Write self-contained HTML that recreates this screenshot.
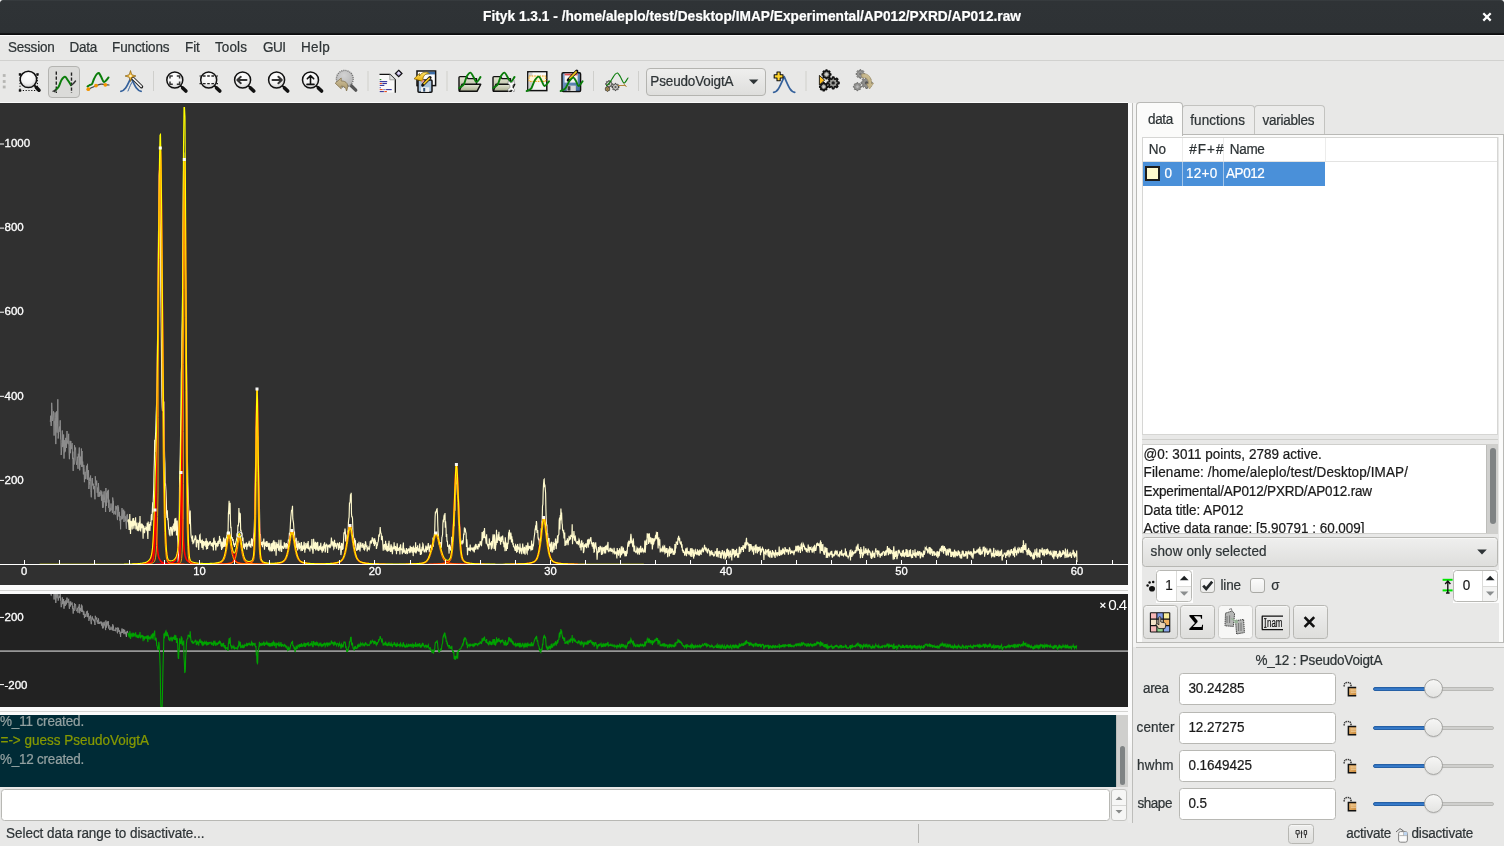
<!DOCTYPE html><html><head><meta charset="utf-8"><title>Fityk</title><style>
*{box-sizing:border-box;margin:0;padding:0}
html,body{width:1504px;height:846px;overflow:hidden;background:#e8e8e7}
body{font-family:"Liberation Sans","DejaVu Sans",sans-serif;font-size:13.5px;color:#2e3436;position:relative}
#root{position:absolute;left:0;top:0;width:1504px;height:846px;will-change:transform}
.abs{position:absolute}
.t{position:absolute;white-space:pre;line-height:16px;height:16px;-webkit-text-stroke:0.22px currentColor;transform:scaleY(1.07);transform-origin:0 12.7px}
#title{left:0;top:0;width:1504px;height:35px;background:linear-gradient(#3d4245 0,#2f3336 1px,#2e3235 30px,#2b2f32 33px,#16181a 33px,#090a0b 35px)}
#title .t{color:#fff;font-weight:bold}
#menubar{left:0;top:35px;width:1504px;height:26px;background:#e8e8e7;border-top:1px solid #fcfcfc;border-bottom:1px solid #d1d1cf}
#toolbar{left:0;top:61px;width:1504px;height:41px;background:#e8e8e7}
.plotline{left:0;top:102px;width:1128px;height:1px;background:#f9f9f9}
.sash{background:#fafafa}
.btn{position:absolute;border:1px solid #b7b7b3;border-radius:3.5px;background:linear-gradient(#efefee,#dededc);box-shadow:inset 0 1px #f7f7f6}
.entry{position:absolute;border:1px solid #b8b8b4;border-radius:3.5px;background:#fff}
.sl{position:absolute;height:4px;border-radius:2px;background:#cfcfcd;border:1px solid #b9b9b6}
.slf{position:absolute;height:4px;border-radius:2px;background:linear-gradient(#2f70bd,#3a80d0);border:1px solid #2560a6}
.knob{position:absolute;width:19px;height:19px;border-radius:50%;background:linear-gradient(#f6f6f5,#e4e4e2);border:1px solid #a3a3a0;box-shadow:0 1px 1px rgba(0,0,0,.08)}
.cb{position:absolute;width:15px;height:15px;border:1px solid #a9a9a5;border-radius:3px;background:linear-gradient(#fbfbfb,#ececeb)}
</style></head><body><div id="root">
<div id="title" class="abs">
<div class="t" style="left:483px;top:8.5px;letter-spacing:0.022px;font-size:13.7px;font-weight:bold;">Fityk 1.3.1 - /home/aleplo/test/Desktop/IMAP/Experimental/AP012/PXRD/AP012.raw</div>
<svg class="abs" style="left:1480px;top:10px" width="14" height="14" viewBox="0 0 14 14"><path d="M3.3 3.2L10.7 10.6M10.7 3.2L3.3 10.6" stroke="#fff" stroke-width="2.2"/></svg><svg class="abs" style="left:0;top:0" width="1504" height="4"><path d="M0 0H2.6Q0.4 0.4 0 2.6Z" fill="#f4f4f4"/><path d="M1504 0H1501.4Q1503.6 0.4 1504 2.6Z" fill="#f4f4f4"/></svg>
</div>
<div id="menubar" class="abs">
<div class="t" style="left:8px;top:3.6px;letter-spacing:-0.219px;">Session</div>
<div class="t" style="left:69.5px;top:3.6px;letter-spacing:-0.258px;">Data</div>
<div class="t" style="left:112px;top:3.6px;letter-spacing:-0.115px;">Functions</div>
<div class="t" style="left:185px;top:3.6px;letter-spacing:-0.067px;">Fit</div>
<div class="t" style="left:215px;top:3.6px;letter-spacing:0.097px;">Tools</div>
<div class="t" style="left:263px;top:3.6px;letter-spacing:-0.505px;">GUI</div>
<div class="t" style="left:301px;top:3.6px;letter-spacing:0.309px;">Help</div>
</div>
<div id="toolbar" class="abs">
<svg class="abs" style="left:0;top:0" width="900" height="41" viewBox="0 61 900 41">
<defs><radialGradient id="mg" cx="0.45" cy="0.3" r="0.75"><stop offset="0" stop-color="#ffffff"/><stop offset="0.6" stop-color="#f2f2f2"/><stop offset="1" stop-color="#c4c4c4"/></radialGradient><radialGradient id="mgg" cx="0.45" cy="0.3" r="0.75"><stop offset="0" stop-color="#d2d2d2"/><stop offset="1" stop-color="#b2b2b2"/></radialGradient><linearGradient id="fold" x1="0" y1="0" x2="0" y2="1"><stop offset="0" stop-color="#e6e8d6"/><stop offset="1" stop-color="#a6aa8c"/></linearGradient><linearGradient id="flop" x1="0" y1="0" x2="1" y2="1"><stop offset="0" stop-color="#7fa3cc"/><stop offset="1" stop-color="#3f6a9c"/></linearGradient><linearGradient id="yel" x1="0" y1="0" x2="0" y2="1"><stop offset="0" stop-color="#ffe56a"/><stop offset="1" stop-color="#e8a800"/></linearGradient><linearGradient id="tan" x1="0" y1="0" x2="0" y2="1"><stop offset="0" stop-color="#cfc09a"/><stop offset="1" stop-color="#a8966a"/></linearGradient></defs>
<rect x="2.8" y="74.1" width="2.8" height="2.8" fill="#b6b6b3"/>
<rect x="2.8" y="80.1" width="2.8" height="2.8" fill="#b6b6b3"/>
<rect x="2.8" y="85.6" width="2.8" height="2.8" fill="#b6b6b3"/>
<path d="M20 74.5H37.5M37.5 74.5V90.5M20 90.5H37.5M20 74.5V90.5" stroke="#111" stroke-width="1" stroke-dasharray="1.2 1.6" fill="none"/>
<rect x="18.8" y="73.2" width="2.4" height="2.4" fill="#111"/><rect x="36.3" y="73.2" width="2.4" height="2.4" fill="#111"/><rect x="18.8" y="89.3" width="2.4" height="2.4" fill="#111"/>
<line x1="34" y1="85" x2="37" y2="88" stroke="#111" stroke-width="1.8"/><line x1="36.4" y1="87.6" x2="39" y2="90.2" stroke="#111" stroke-width="3.6" stroke-linecap="round"/>
<circle cx="28.4" cy="79.4" r="8.2" fill="url(#mg)" stroke="#111" stroke-width="1.5"/>
<rect x="48.5" y="66.5" width="31" height="31" rx="3.5" fill="#dbdbd9" stroke="#b4b4b1" stroke-width="1"/>
<path d="M56.3 71.5V93M71.5 72.5V93" stroke="#222" stroke-width="1.4" stroke-dasharray="3.2 1.8" fill="none"/>
<path d="M55.0 90.5C55.6 89.9 57.4 88.8 58.5 87.0C59.6 85.2 60.4 81.7 61.5 80.0C62.6 78.3 63.9 76.7 65.0 76.8C66.1 76.9 67.0 79.1 68.0 80.5C69.0 81.9 70.5 84.4 71.0 85.2" fill="none" stroke="#0a7d0a" stroke-width="2.0" stroke-linecap="round" stroke-linejoin="round"/>
<path d="M71 85.2L73.5 83.5L75.5 81" stroke="#333" stroke-width="1.5" fill="none" stroke-linecap="round"/>
<path d="M52.5 91.5L55.5 90M54 92L56.5 89.5" stroke="#333" stroke-width="1.2" fill="none"/>
<path d="M88.5 89.0C89.1 88.8 90.8 88.0 92.0 87.5C93.2 87.0 94.5 86.3 96.0 85.8C97.5 85.2 99.5 84.4 101.0 84.2C102.5 84.0 104.0 84.5 105.3 84.6C106.6 84.7 108.4 84.9 109.0 85.0" fill="none" stroke="#444" stroke-width="1.2" stroke-linecap="round" stroke-linejoin="round"/>
<path d="M87.5 86.5C87.9 86.2 89.2 85.2 90.0 84.8C90.8 84.4 91.3 85.0 92.0 84.0C92.7 83.0 93.2 80.6 94.0 79.0C94.8 77.4 95.7 75.5 96.5 74.5C97.3 73.5 98.0 72.7 98.8 73.0C99.5 73.3 100.1 75.0 101.0 76.5C101.9 78.0 102.8 81.8 104.0 82.0C105.2 82.2 107.8 78.2 108.5 77.5" fill="none" stroke="#0a7d0a" stroke-width="2.0" stroke-linecap="round" stroke-linejoin="round"/>
<circle cx="88.3" cy="89.2" r="1.9" fill="#f29400"/>
<circle cx="96" cy="85.6" r="1.9" fill="#f29400"/>
<circle cx="105.3" cy="84.8" r="1.9" fill="#f29400"/>
<path d="M120.8 91.3C124.6 91 126.4 87.6 131 77.6C135.6 87.6 137.4 91 141.2 91.3" fill="none" stroke="#35619b" stroke-width="1.7" stroke-linecap="round" stroke-linejoin="round"/>
<path d="M128.0 91.0C128.5 89.8 130.1 85.8 131.0 84.0C131.9 82.2 133.1 81.1 133.5 80.5" fill="none" stroke="#3a66a0" stroke-width="1.0" stroke-linecap="round" stroke-linejoin="round"/>
<line x1="132.5" y1="78" x2="141.5" y2="86.8" stroke="#222" stroke-width="3.4" stroke-linecap="round"/><line x1="133" y1="78.4" x2="141.2" y2="86.4" stroke="#f4f4f4" stroke-width="1.6" stroke-linecap="round"/>
<path d="M130.5 70.5L131.8 74.7L136 76L131.8 77.3L130.5 81.5L129.2 77.3L125 76L129.2 74.7Z" fill="#f5b93a" stroke="#7a5200" stroke-width="0.6"/><circle cx="130.5" cy="76" r="1.3" fill="#fff6c8"/>
<rect x="153.0" y="71" width="1" height="20" fill="#cfcfcc"/>
<line x1="180.5" y1="85.7" x2="183.5" y2="88.7" stroke="#111" stroke-width="1.8"/><line x1="182.7" y1="87.9" x2="185.9" y2="91.1" stroke="#111" stroke-width="3.6" stroke-linecap="round"/><circle cx="174.8" cy="80" r="8.0" fill="url(#mg)" stroke="#111" stroke-width="1.5"/>
<path d="M170 78.6V76H172.8M176.8 76H179.6V78.6M179.6 81.6V84.2H176.8M172.8 84.2H170V81.6" stroke="#333" stroke-width="1.5" fill="none"/>
<path d="M199.5 76H218M199.5 83.6H218" stroke="#222" stroke-width="1.2" stroke-dasharray="2.6 1.6"/>
<line x1="214.4" y1="85.7" x2="217.4" y2="88.7" stroke="#111" stroke-width="1.8"/><line x1="216.6" y1="87.9" x2="219.8" y2="91.1" stroke="#111" stroke-width="3.6" stroke-linecap="round"/><circle cx="208.7" cy="80" r="8.0" fill="url(#mg)" stroke="#111" stroke-width="1.5"/>
<path d="M203 76H215M203 83.6H215" stroke="#222" stroke-width="1.3" stroke-dasharray="2.6 1.6"/>
<line x1="248.3" y1="85.7" x2="251.3" y2="88.7" stroke="#111" stroke-width="1.8"/><line x1="250.5" y1="87.9" x2="253.7" y2="91.1" stroke="#111" stroke-width="3.6" stroke-linecap="round"/><circle cx="242.6" cy="80" r="8.0" fill="url(#mg)" stroke="#111" stroke-width="1.5"/>
<path d="M237.3 80H246.5M240.8 76.8L237.3 80L240.8 83.2" stroke="#333" stroke-width="2" fill="none" stroke-linecap="round" stroke-linejoin="round"/>
<line x1="282.3" y1="85.7" x2="285.3" y2="88.7" stroke="#111" stroke-width="1.8"/><line x1="284.5" y1="87.9" x2="287.7" y2="91.1" stroke="#111" stroke-width="3.6" stroke-linecap="round"/><circle cx="276.6" cy="80" r="8.0" fill="url(#mg)" stroke="#111" stroke-width="1.5"/>
<path d="M272.5 80H281.8M278.4 76.8L281.8 80L278.4 83.2" stroke="#333" stroke-width="2" fill="none" stroke-linecap="round" stroke-linejoin="round"/>
<line x1="316.2" y1="85.7" x2="319.2" y2="88.7" stroke="#111" stroke-width="1.8"/><line x1="318.4" y1="87.9" x2="321.6" y2="91.1" stroke="#111" stroke-width="3.6" stroke-linecap="round"/><circle cx="310.5" cy="80" r="8.0" fill="url(#mg)" stroke="#111" stroke-width="1.5"/>
<path d="M310.5 75.6V84M307.3 78.8L310.5 75.6L313.7 78.8M307 84.4H314" stroke="#111" stroke-width="1.6" fill="none" stroke-linecap="round" stroke-linejoin="round"/>
<line x1="351" y1="85.5" x2="355.8" y2="90.2" stroke="#555" stroke-width="3.2" stroke-linecap="round"/>
<circle cx="344.8" cy="78.8" r="8.4" fill="url(#mgg)" stroke="#777" stroke-width="1.4" stroke-dasharray="1.2 0.9"/>
<path d="M335.2 83.2L341.2 78V81C346.5 80.8 349.5 84.5 346.5 91C346 87.6 344.2 86 341.2 86V88.8Z" fill="url(#tan)" stroke="#857550" stroke-width="0.8" stroke-linejoin="round"/>
<rect x="367.5" y="71" width="1" height="20" fill="#cfcfcc"/>
<path d="M379.5 74.4H389.8L395.3 79.8V92.6H379.5Z" fill="#f9f9f9"/>
<path d="M379.5 74.4H389.8L395.3 79.8V92.8" fill="none" stroke="#111" stroke-width="1.3"/>
<path d="M389.8 74.4V79.8H395.3" fill="#e2e2e2" stroke="#888" stroke-width="0.7"/>
<rect x="379.7" y="79.05" width="1.6" height="1.1" fill="#2a8a2a"/>
<rect x="379.7" y="81.05" width="7.5" height="1.1" fill="#34349a"/>
<rect x="379.7" y="82.95" width="2.2" height="1.1" fill="#e64a19"/>
<rect x="382.3" y="82.95" width="4.6" height="1.1" fill="#34349a"/>
<rect x="379.7" y="84.85" width="4.6" height="1.1" fill="#34349a"/>
<rect x="379.7" y="87.15" width="1.0" height="1.1" fill="#34349a"/>
<rect x="379.7" y="89.05" width="3.0" height="1.1" fill="#e64a19"/>
<rect x="383.1" y="89.05" width="2.6" height="1.1" fill="#8a8ac0"/>
<rect x="386.1" y="89.05" width="5.6" height="1.1" fill="#34349a"/>
<rect x="379.7" y="91.05" width="4.2" height="1.1" fill="#34349a"/>
<rect x="384.3" y="91.05" width="2.6" height="1.1" fill="#e64a19"/>
<path d="M398.7 70.3L402 73.5L398.7 76.7L395.4 73.5Z" fill="#b9aede" stroke="#111" stroke-width="1.2"/><path d="M398.7 71.6L400.2 73.3L398.7 74L397.3 73.3Z" fill="#efeaff"/>
<rect x="417" y="71" width="18.6" height="14.6" fill="#fdfdfd" stroke="#111" stroke-width="1.5"/><rect x="424" y="71.8" width="11" height="2.6" fill="#3d6da6"/>
<rect x="418" y="80" width="14" height="12.3" rx="1" fill="#a9c3dc" stroke="#111" stroke-width="1.5"/>
<rect x="421" y="87.3" width="8.3" height="4.6" fill="#f2f2f2"/><rect x="423.2" y="88" width="2" height="3.6" fill="#2d4f74"/>
<path d="M414 78.8L419.5 73.4V76C422 71.5 427.5 71 429.5 73.8C426.3 73 423.8 75.2 423 78V81.5Z" fill="url(#yel)" stroke="#7a5a00" stroke-width="0.7" stroke-linejoin="round"/>
<line x1="422.8" y1="85" x2="430" y2="77.6" stroke="#111" stroke-width="3.2" stroke-linecap="round"/><line x1="423.6" y1="84.2" x2="429.8" y2="77.8" stroke="#f0c320" stroke-width="1.7"/>
<path d="M421.6 82.4L424 80.2" stroke="#e88f8f" stroke-width="1.6"/>
<rect x="446.5" y="71" width="1" height="20" fill="#cfcfcc"/>
<path d="M459 90.8V77.6Q459 76.6 460 76.6H466L468 78.6H476.5V84.6" fill="url(#fold)" stroke="#111" stroke-width="1.4" stroke-linejoin="round"/>
<path d="M462 84.3H480.7L477 91.3H459.3Z" fill="url(#fold)" stroke="#111" stroke-width="1.4" stroke-linejoin="round"/>
<path d="M459.2 88.0C459.6 87.8 460.7 87.2 461.5 86.5C462.3 85.8 463.1 85.8 464.0 84.0C464.9 82.2 465.9 77.9 467.0 76.0C468.1 74.1 469.4 72.4 470.5 72.6C471.6 72.8 472.5 75.4 473.5 77.0C474.5 78.6 475.3 82.0 476.5 82.0C477.7 82.0 479.8 77.8 480.5 77.0" fill="none" stroke="#0a7d0a" stroke-width="1.9" stroke-linecap="round" stroke-linejoin="round"/>
<path d="M493 90.8V77.6Q493 76.6 494 76.6H500L502 78.6H510.5V84.6" fill="url(#fold)" stroke="#111" stroke-width="1.4" stroke-linejoin="round"/>
<path d="M496 84.3H514.7L511 91.3H493.3Z" fill="url(#fold)" stroke="#111" stroke-width="1.4" stroke-linejoin="round"/>
<path d="M493.2 88.0C493.6 87.8 494.7 87.2 495.5 86.5C496.3 85.8 497.1 85.8 498.0 84.0C498.9 82.2 499.9 77.9 501.0 76.0C502.1 74.1 503.4 72.4 504.5 72.6C505.6 72.8 506.5 75.4 507.5 77.0C508.5 78.6 509.3 82.0 510.5 82.0C511.7 82.0 513.8 77.8 514.5 77.0" fill="none" stroke="#0a7d0a" stroke-width="1.9" stroke-linecap="round" stroke-linejoin="round"/>
<path d="M508.5 80.2L510.3 82.6L512.2 82.6L514 80.2L514.6 83.4L512.6 85.2V87.6L514.6 89.6L514 92L512.2 90H510.3L508.5 92L507.9 89.6L509.9 87.6V85.2L507.9 83.4Z" fill="#fafafa" stroke="#666" stroke-width="0.5"/>
<rect x="527.8" y="71.8" width="19" height="18.8" fill="#f3f3f3" stroke="#111" stroke-width="1.5"/>
<rect x="528.6" y="72.6" width="4" height="17.3" fill="#cfcfcf"/><rect x="532.6" y="72.6" width="13.4" height="3" fill="#fafafa"/>
<rect x="529" y="76" width="16.8" height="5.4" fill="#fff6d8" stroke="#f0a010" stroke-width="1" stroke-dasharray="1.6 1"/>
<path d="M526.6 91.0C527.0 90.8 528.2 90.5 529.0 90.0C529.8 89.5 530.5 89.7 531.5 88.0C532.5 86.3 533.8 81.9 535.0 80.0C536.2 78.1 537.7 76.5 538.8 76.6C539.9 76.7 540.5 78.9 541.5 80.5C542.5 82.1 543.4 85.9 544.6 86.0C545.9 86.1 548.3 82.1 549.0 81.3" fill="none" stroke="#0a7d0a" stroke-width="1.9" stroke-linecap="round" stroke-linejoin="round"/>
<rect x="562" y="72.8" width="18.6" height="18.7" rx="1.2" fill="url(#flop)" stroke="#111" stroke-width="1.4"/>
<rect x="564.6" y="73.6" width="13" height="9" fill="#f4f4f4"/><rect x="564.6" y="73.6" width="13" height="1.8" fill="#e05050"/>
<rect x="566.8" y="85.6" width="9" height="5.4" fill="#d8d8d8"/><rect x="567.6" y="86.2" width="2.8" height="4.4" fill="#3a3a3a"/>
<line x1="568.3" y1="80" x2="576.8" y2="71.2" stroke="#111" stroke-width="3.2" stroke-linecap="round"/><line x1="569.4" y1="78.8" x2="576.6" y2="71.4" stroke="#f0c320" stroke-width="1.7"/>
<path d="M560.6 91.0C561.0 90.8 562.2 90.5 563.0 90.0C563.8 89.5 564.5 89.5 565.6 88.0C566.7 86.5 568.2 82.7 569.5 81.0C570.8 79.3 572.3 77.6 573.4 77.6C574.5 77.6 575.1 79.6 576.0 81.0C576.9 82.4 577.5 86.0 578.6 86.0C579.7 86.0 581.9 82.1 582.6 81.3" fill="none" stroke="#0a7d0a" stroke-width="1.9" stroke-linecap="round" stroke-linejoin="round"/>
<rect x="593.0" y="71" width="1" height="20" fill="#cfcfcc"/>
<path d="M612.4 83.6L612.4 84.4L611.4 84.7L611.1 85.2L611.7 86.1L611.1 86.7L610.2 86.1L609.7 86.4L609.4 87.4L608.6 87.4L608.3 86.4L607.8 86.1L606.9 86.7L606.3 86.1L606.9 85.2L606.6 84.7L605.6 84.4L605.6 83.6L606.6 83.3L606.9 82.8L606.3 81.9L606.9 81.3L607.8 81.9L608.3 81.6L608.6 80.6L609.4 80.6L609.7 81.6L610.2 81.9L611.1 81.3L611.7 81.9L611.1 82.8L611.4 83.3Z" fill="#c8c8c4" stroke="#333" stroke-width="0.9" stroke-linejoin="round"/><circle cx="609" cy="84" r="1.0" fill="#555"/>
<path d="M619.1 86.6L619.1 87.4L618.0 87.7L617.8 88.3L618.3 89.2L617.7 89.8L616.8 89.3L616.2 89.5L615.9 90.6L615.1 90.6L614.8 89.5L614.2 89.3L613.3 89.8L612.7 89.2L613.2 88.3L613.0 87.7L611.9 87.4L611.9 86.6L613.0 86.3L613.2 85.7L612.7 84.8L613.3 84.2L614.2 84.7L614.8 84.5L615.1 83.4L615.9 83.4L616.2 84.5L616.8 84.7L617.7 84.2L618.3 84.8L617.8 85.7L618.0 86.3Z" fill="#c8c8c4" stroke="#333" stroke-width="0.9" stroke-linejoin="round"/><circle cx="615.5" cy="87" r="1.1" fill="#555"/>
<path d="M609.9 88.7L609.9 89.3L609.2 89.5L609.0 89.8L609.4 90.5L609.0 90.9L608.3 90.5L608.0 90.7L607.8 91.4L607.2 91.4L607.0 90.7L606.7 90.5L606.0 90.9L605.6 90.5L606.0 89.8L605.8 89.5L605.1 89.3L605.1 88.7L605.8 88.5L606.0 88.2L605.6 87.5L606.0 87.1L606.7 87.5L607.0 87.3L607.2 86.6L607.8 86.6L608.0 87.3L608.3 87.5L609.0 87.1L609.4 87.5L609.0 88.2L609.2 88.5Z" fill="#c8a050" stroke="#333" stroke-width="0.8" stroke-linejoin="round"/><circle cx="607.5" cy="89" r="0.7" fill="#555"/>
<path d="M606.5 85.5C606.9 85.2 608.1 84.6 609.0 83.5C609.9 82.4 611.0 80.5 612.0 79.0C613.0 77.5 614.1 75.5 615.0 74.5C615.9 73.5 616.7 72.6 617.6 73.0C618.5 73.4 619.4 75.3 620.5 77.0C621.6 78.7 622.8 82.8 624.0 83.0C625.2 83.2 627.3 78.8 628.0 78.0" fill="none" stroke="#0a7d0a" stroke-width="1.1" stroke-linecap="round" stroke-linejoin="round"/>
<path d="M618 85.5H626M623.5 83.5L626.5 87" stroke="#b08840" stroke-width="1" fill="none"/>
<rect x="638.0" y="71" width="1" height="20" fill="#cfcfcc"/>
<defs><linearGradient id="btn" x1="0" y1="0" x2="0" y2="1"><stop offset="0" stop-color="#efefee"/><stop offset="1" stop-color="#dededc"/></linearGradient></defs>
<rect x="646.5" y="68.5" width="119" height="27" rx="3.5" fill="url(#btn)" stroke="#b4b4b0"/>
<path d="M749 79.4H758.4L753.7 84.2Z" fill="#2e3436"/>
<path d="M773.6 92.3C777.4 92 779.2 88.4 784.2 76.6C789.2 88.4 791 92 794.8 92.3" fill="none" stroke="#35619b" stroke-width="1.7" stroke-linecap="round" stroke-linejoin="round"/>
<path d="M777 72H780.2V74.8H783V78H780.2V80.8H777V78H774.2V74.8H777Z" fill="#ffd42a" stroke="#111" stroke-width="1.1" stroke-linejoin="round"/>
<rect x="805.5" y="71" width="1" height="20" fill="#cfcfcc"/>
<path d="M830.8 73.9L830.8 74.9L829.5 75.2L829.2 75.9L829.9 77.1L829.2 77.8L828.0 77.1L827.3 77.4L827.0 78.7L826.0 78.7L825.7 77.4L825.0 77.1L823.8 77.8L823.1 77.1L823.8 75.9L823.5 75.2L822.2 74.9L822.2 73.9L823.5 73.6L823.8 72.9L823.1 71.7L823.8 71.0L825.0 71.7L825.7 71.4L826.0 70.1L827.0 70.1L827.3 71.4L828.0 71.7L829.2 71.0L829.9 71.7L829.2 72.9L829.5 73.6Z" fill="#9c9c98" stroke="#111" stroke-width="1.5" stroke-linejoin="round"/><circle cx="826.5" cy="74.4" r="1.3" fill="#d0d0cc"/>
<path d="M827.7 86.2L827.7 87.2L826.5 87.5L826.2 88.1L826.8 89.2L826.2 89.8L825.1 89.2L824.5 89.5L824.2 90.7L823.2 90.7L822.9 89.5L822.3 89.2L821.2 89.8L820.6 89.2L821.2 88.1L820.9 87.5L819.7 87.2L819.7 86.2L820.9 85.9L821.2 85.3L820.6 84.2L821.2 83.6L822.3 84.2L822.9 83.9L823.2 82.7L824.2 82.7L824.5 83.9L825.1 84.2L826.2 83.6L826.8 84.2L826.2 85.3L826.5 85.9Z" fill="#9c9c98" stroke="#111" stroke-width="1.5" stroke-linejoin="round"/><circle cx="823.7" cy="86.7" r="1.2" fill="#d0d0cc"/>
<path d="M839.0 82.2L839.0 83.6L837.2 84.0L836.8 84.9L837.8 86.5L836.8 87.5L835.2 86.5L834.3 86.9L833.9 88.7L832.5 88.7L832.1 86.9L831.2 86.5L829.6 87.5L828.6 86.5L829.6 84.9L829.2 84.0L827.4 83.6L827.4 82.2L829.2 81.8L829.6 80.9L828.6 79.3L829.6 78.3L831.2 79.3L832.1 78.9L832.5 77.1L833.9 77.1L834.3 78.9L835.2 79.3L836.8 78.3L837.8 79.3L836.8 80.9L837.2 81.8Z" fill="#9c9c98" stroke="#111" stroke-width="1.6" stroke-linejoin="round"/><circle cx="833.2" cy="82.9" r="1.7" fill="#222"/>
<path d="M819.4 75.4L824.6 80.2L819.4 85Z" fill="#ffc020" stroke="#111" stroke-width="0.9" stroke-linejoin="round"/>
<path d="M864.7 73.5L864.7 74.5L863.4 74.8L863.1 75.5L863.8 76.7L863.1 77.4L861.9 76.7L861.2 77.0L860.9 78.3L859.9 78.3L859.6 77.0L858.9 76.7L857.7 77.4L857.0 76.7L857.7 75.5L857.4 74.8L856.1 74.5L856.1 73.5L857.4 73.2L857.7 72.5L857.0 71.3L857.7 70.6L858.9 71.3L859.6 71.0L859.9 69.7L860.9 69.7L861.2 71.0L861.9 71.3L863.1 70.6L863.8 71.3L863.1 72.5L863.4 73.2Z" fill="#9a9a98" stroke="#6e6e6c" stroke-width="1.0" stroke-linejoin="round"/><circle cx="860.4" cy="74" r="1.3" fill="#777"/>
<path d="M861.4 86.2L861.4 87.2L860.2 87.5L859.9 88.1L860.5 89.2L859.9 89.8L858.8 89.2L858.2 89.5L857.9 90.7L856.9 90.7L856.6 89.5L856.0 89.2L854.9 89.8L854.3 89.2L854.9 88.1L854.6 87.5L853.4 87.2L853.4 86.2L854.6 85.9L854.9 85.3L854.3 84.2L854.9 83.6L856.0 84.2L856.6 83.9L856.9 82.7L857.9 82.7L858.2 83.9L858.8 84.2L859.9 83.6L860.5 84.2L859.9 85.3L860.2 85.9Z" fill="#9a9a98" stroke="#6e6e6c" stroke-width="1.0" stroke-linejoin="round"/><circle cx="857.4" cy="86.7" r="1.2" fill="#bbb"/>
<path d="M872.2 82.2L872.2 83.6L870.5 84.0L870.1 84.9L871.0 86.4L870.1 87.3L868.6 86.4L867.7 86.8L867.3 88.5L865.9 88.5L865.5 86.8L864.6 86.4L863.1 87.3L862.2 86.4L863.1 84.9L862.7 84.0L861.0 83.6L861.0 82.2L862.7 81.8L863.1 80.9L862.2 79.4L863.1 78.5L864.6 79.4L865.5 79.0L865.9 77.3L867.3 77.3L867.7 79.0L868.6 79.4L870.1 78.5L871.0 79.4L870.1 80.9L870.5 81.8Z" fill="#8e8e8c" stroke="#6e6e6c" stroke-width="1.0" stroke-linejoin="round"/><circle cx="866.6" cy="82.9" r="1.7" fill="#555"/>
<path d="M861.5 74.2C867 72 872 77 871.5 83.5L873.6 83.2L869.5 89L866.5 83.8L868.6 83.8C868.6 79.5 866 76.8 862 77.6Z" fill="#c9b98c" stroke="#9a8a60" stroke-width="0.6" opacity="0.95"/>
</svg>
<div class="t" style="left:650.3px;top:12.5px;letter-spacing:-0.144px;">PseudoVoigtA</div>
</div>
<div class="abs plotline"></div>
<svg class="abs" style="left:0;top:103px" width="1128" height="482" viewBox="0 103 1128 482" font-family='"Liberation Sans", "DejaVu Sans", sans-serif'>
<rect x="0" y="103" width="1128" height="482" fill="#303030"/>
<path d="M50.3 421.9L50.7 415.7L51.0 425.4L51.3 426.0L51.7 402.8L52.0 408.5L52.4 420.9L52.7 419.5L53.1 415.3L53.4 411.3L53.7 413.9L54.1 435.6L54.4 421.5L54.8 422.3L55.1 412.4L55.4 417.2L55.8 444.1L56.1 429.6L56.5 411.4L56.8 431.2L57.1 432.6L57.5 423.9L57.8 399.3L58.2 438.5L58.5 435.0L58.9 429.2L59.2 428.1L59.5 426.6L59.9 431.8L60.2 420.3L60.6 439.2L60.9 440.8L61.2 455.0L61.6 450.9L61.9 442.5L62.3 430.5L62.6 447.1L62.9 435.4L63.3 446.3L63.6 434.5L64.0 458.6L64.3 440.2L64.7 452.4L65.0 447.9L65.3 451.4L65.7 438.0L66.0 437.8L66.4 448.0L66.7 439.2L67.0 431.0L67.4 442.5L67.7 441.5L68.1 444.2L68.4 436.0L68.7 433.8L69.1 453.4L69.4 459.2L69.8 446.5L70.1 440.8L70.4 453.2L70.8 441.0L71.1 448.8L71.5 448.8L71.8 444.2L72.2 443.2L72.5 458.8L72.8 451.6L73.2 470.9L73.5 457.8L73.9 463.0L74.2 464.5L74.5 445.3L74.9 448.7L75.2 449.6L75.6 447.6L75.9 460.3L76.2 461.8L76.6 464.8L76.9 463.8L77.3 456.7L77.6 458.6L78.0 468.8L78.3 453.7L78.6 457.3L79.0 453.3L79.3 447.5L79.7 470.3L80.0 456.3L80.3 464.6L80.7 457.0L81.0 463.3L81.4 448.5L81.7 466.8L82.0 451.0L82.4 466.8L82.7 461.5L83.1 467.3L83.4 474.4L83.8 464.9L84.1 468.7L84.4 482.2L84.8 475.2L85.1 471.8L85.5 479.1L85.8 476.3L86.1 473.5L86.5 465.7L86.8 467.1L87.2 479.2L87.5 463.8L87.8 479.8L88.2 473.2L88.5 470.3L88.9 489.0L89.2 485.5L89.6 481.6L89.9 477.6L90.2 481.1L90.6 475.5L90.9 492.5L91.3 497.3L91.6 490.1L91.9 479.9L92.3 478.0L92.6 485.4L93.0 484.9L93.3 483.7L93.6 489.2L94.0 488.4L94.3 486.1L94.7 494.9L95.0 499.3L95.3 476.3L95.7 481.2L96.0 485.3L96.4 485.2L96.7 480.6L97.1 492.8L97.4 492.4L97.7 487.5L98.1 496.8L98.4 483.0L98.8 488.8L99.1 496.9L99.4 491.9L99.8 496.1L100.1 495.7L100.5 494.5L100.8 490.4L101.1 491.2L101.5 500.6L101.8 491.5L102.2 498.5L102.5 507.7L102.9 494.6L103.2 507.7L103.5 500.5L103.9 492.0L104.2 491.3L104.6 500.9L104.9 502.3L105.2 500.8L105.6 512.0L105.9 488.0L106.3 506.0L106.6 492.7L106.9 502.6L107.3 494.8L107.6 490.9L108.0 498.5L108.3 489.8L108.7 507.8L109.0 499.7L109.3 509.6L109.7 512.0L110.0 507.9L110.4 510.9L110.7 510.7L111.0 503.5L111.4 509.7L111.7 510.1L112.1 509.3L112.4 512.9L112.7 497.5L113.1 501.0L113.4 501.0L113.8 514.4L114.1 512.7L114.4 511.6L114.8 511.3L115.1 514.2L115.5 514.5L115.8 505.8L116.2 509.4L116.5 507.1L116.8 506.4L117.2 517.6L117.5 520.1L117.9 505.2L118.2 511.3L118.5 506.8L118.9 516.5L119.2 511.9L119.6 517.1L119.9 520.7L120.2 519.1L120.6 529.3L120.9 515.9L121.3 519.5L121.6 516.4L122.0 508.1L122.3 512.9L122.6 519.2L123.0 510.1L123.3 517.7L123.7 509.7L124.0 522.0L124.3 514.6L124.7 511.4L125.0 519.6L125.4 520.9L125.7 516.3L126.0 524.0L126.4 528.8L126.7 516.2L127.1 514.4L127.4 514.2L127.8 519.7" fill="none" stroke="#8e8e8e" stroke-width="1"/>
<path d="M127.8 519.7L128.1 522.1L128.4 519.4L128.8 525.3L129.1 529.9L129.5 526.5L129.8 514.0L130.1 524.5L130.5 534.0L130.8 527.3L131.2 520.9L131.5 522.2L131.8 522.1L132.2 529.5L132.5 522.9L132.9 518.2L133.2 526.3L133.6 518.0L133.9 528.7L134.2 521.4L134.6 524.8L134.9 520.6L135.3 525.6L135.6 517.2L135.9 529.5L136.3 525.3L136.6 528.8L137.0 522.6L137.3 530.7L137.6 526.2L138.0 527.9L138.3 531.3L138.7 523.0L139.0 530.6L139.3 521.7L139.7 526.4L140.0 516.1L140.4 530.2L140.7 530.7L141.1 527.4L141.4 523.9L141.7 528.3L142.1 524.3L142.4 524.7L142.8 527.4L143.1 538.8L143.4 526.0L143.8 526.5L144.1 528.3L144.5 533.1L144.8 531.2L145.1 528.0L145.5 529.4L145.8 527.7L146.2 528.8L146.5 526.9L146.9 531.3L147.2 522.8L147.5 532.3L147.9 539.0L148.2 521.4L148.6 530.6L148.9 524.5L149.2 528.1L149.6 524.0L149.9 531.0L150.3 522.0L150.6 523.8L150.9 524.3L151.3 515.6L151.6 514.0L152.0 520.3L152.3 511.1L152.7 502.2L153.0 512.6L153.3 499.3L153.7 488.9L154.0 472.2L154.4 459.7L154.7 439.7L155.0 452.1L155.4 437.9L155.7 431.5L156.1 417.1L156.4 408.9L156.7 400.8L157.1 377.0L157.4 351.2L157.8 323.7L158.1 282.9L158.4 250.0L158.8 199.3L159.1 175.5L159.5 170.1L159.8 169.9L160.2 187.2L160.5 241.8L160.8 291.6L161.2 323.8L161.5 352.4L161.9 397.8L162.2 406.6L162.5 410.9L162.9 399.2L163.2 405.9L163.6 410.2L163.9 401.6L164.2 439.4L164.6 457.0L164.9 463.4L165.3 486.1L165.6 485.5L166.0 491.3L166.3 499.8L166.6 512.9L167.0 517.9L167.3 510.2L167.7 520.2L168.0 518.0L168.3 522.7L168.7 529.8L169.0 529.0L169.4 534.8L169.7 531.4L170.0 536.3L170.4 527.1L170.7 529.4L171.1 526.9L171.4 528.2L171.8 534.0L172.1 535.7L172.4 534.5L172.8 525.7L173.1 528.2L173.5 528.7L173.8 523.6L174.1 531.7L174.5 526.6L174.8 518.4L175.2 530.8L175.5 527.9L175.8 517.9L176.2 524.7L176.5 535.5L176.9 529.9L177.2 520.6L177.6 532.2L177.9 546.7L178.2 562.0L178.6 559.6L178.9 536.9L179.3 518.6L179.6 479.1L179.9 468.3L180.3 452.0L180.6 433.8L181.0 412.1L181.3 373.4L181.6 365.9L182.0 331.8L182.3 320.9L182.7 279.3L183.0 232.0L183.3 198.9L183.7 152.5L184.0 170.5L184.4 177.1L184.7 210.3L185.1 235.9L185.4 266.5L185.7 282.0L186.1 323.1L186.4 357.2L186.8 392.7L187.1 430.0L187.4 459.4L187.8 482.8L188.1 489.9L188.5 503.9L188.8 510.3L189.1 515.3L189.5 522.0L189.8 524.2L190.2 510.5L190.5 522.9L190.9 533.5L191.2 536.3L191.5 538.0L191.9 538.7L192.2 541.7L192.6 535.6L192.9 544.2L193.2 541.5L193.6 541.1L193.9 541.8L194.3 540.0L194.6 539.2L194.9 539.3L195.3 535.9L195.6 535.9L196.0 537.7L196.3 546.7L196.7 546.9L197.0 540.2L197.3 540.1L197.7 543.0L198.0 540.1L198.4 542.8L198.7 550.0L199.0 541.7L199.4 540.2L199.7 535.3L200.1 534.7L200.4 543.2L200.7 539.6L201.1 541.9L201.4 540.2L201.8 546.4L202.1 548.0L202.5 540.7L202.8 541.3L203.1 549.8L203.5 541.0L203.8 546.1L204.2 543.7L204.5 541.5L204.8 545.2L205.2 544.3L205.5 541.1L205.9 546.9L206.2 538.2L206.5 549.5L206.9 546.5L207.2 540.9L207.6 548.9L207.9 541.7L208.2 544.0L208.6 545.8L208.9 543.0L209.3 544.6L209.6 541.9L210.0 541.5L210.3 541.5L210.6 543.2L211.0 544.6L211.3 546.1L211.7 543.0L212.0 545.5L212.3 542.2L212.7 546.9L213.0 544.0L213.4 550.5L213.7 538.8L214.0 538.4L214.4 541.9L214.7 544.7L215.1 540.8L215.4 543.5L215.8 550.4L216.1 547.2L216.4 543.6L216.8 543.4L217.1 545.6L217.5 546.1L217.8 541.3L218.1 546.1L218.5 540.6L218.8 541.3L219.2 544.1L219.5 535.9L219.8 541.9L220.2 538.7L220.5 539.5L220.9 546.5L221.2 545.0L221.6 550.0L221.9 541.6L222.2 542.8L222.6 548.4L222.9 545.4L223.3 543.2L223.6 537.5L223.9 546.8L224.3 545.5L224.6 545.7L225.0 538.6L225.3 540.8L225.6 547.0L226.0 540.6L226.3 538.0L226.7 536.4L227.0 534.9L227.3 531.8L227.7 532.8L228.0 535.0L228.4 513.5L228.7 510.3L229.1 500.8L229.4 514.2L229.7 503.0L230.1 503.2L230.4 519.5L230.8 528.3L231.1 526.7L231.4 536.2L231.8 539.3L232.1 537.2L232.5 539.3L232.8 540.9L233.1 539.1L233.5 542.7L233.8 545.3L234.2 543.3L234.5 546.9L234.9 544.7L235.2 544.2L235.5 544.2L235.9 541.7L236.2 540.9L236.6 538.7L236.9 538.1L237.2 535.1L237.6 536.5L237.9 524.7L238.3 526.5L238.6 523.7L238.9 508.1L239.3 518.9L239.6 512.5L240.0 522.7L240.3 513.2L240.7 531.0L241.0 529.9L241.3 533.1L241.7 532.8L242.0 533.3L242.4 539.8L242.7 540.8L243.0 537.4L243.4 547.7L243.7 543.5L244.1 545.9L244.4 549.1L244.7 543.6L245.1 545.9L245.4 546.2L245.8 544.8L246.1 543.4L246.5 542.5L246.8 549.7L247.1 545.0L247.5 543.8L247.8 546.6L248.2 545.4L248.5 543.7L248.8 544.0L249.2 540.8L249.5 545.3L249.9 546.1L250.2 545.2L250.5 544.6L250.9 547.6L251.2 541.3L251.6 538.2L251.9 542.2L252.2 545.2L252.6 545.6L252.9 540.0L253.3 540.4L253.6 535.9L254.0 532.4L254.3 526.9L254.6 516.9L255.0 495.4L255.3 481.8L255.7 459.3L256.0 429.2L256.3 424.0L256.7 403.2L257.0 416.1L257.4 425.3L257.7 440.8L258.0 436.2L258.4 462.3L258.7 482.5L259.1 498.3L259.4 505.5L259.8 528.3L260.1 535.5L260.4 534.1L260.8 541.6L261.1 543.4L261.5 545.0L261.8 542.0L262.1 543.4L262.5 547.1L262.8 541.4L263.2 544.4L263.5 541.8L263.8 538.5L264.2 544.9L264.5 549.7L264.9 542.2L265.2 545.2L265.6 545.6L265.9 545.6L266.2 541.4L266.6 547.0L266.9 541.0L267.3 543.0L267.6 546.6L267.9 544.8L268.3 544.1L268.6 549.0L269.0 550.1L269.3 542.9L269.6 548.4L270.0 551.3L270.3 547.3L270.7 549.3L271.0 543.5L271.4 551.5L271.7 544.4L272.0 543.1L272.4 551.1L272.7 547.6L273.1 541.6L273.4 549.2L273.7 540.2L274.1 542.2L274.4 551.2L274.8 546.4L275.1 541.8L275.4 546.5L275.8 548.6L276.1 555.8L276.5 545.7L276.8 542.2L277.1 548.3L277.5 544.8L277.8 545.1L278.2 544.5L278.5 550.7L278.9 539.8L279.2 548.1L279.5 547.0L279.9 551.4L280.2 546.4L280.6 545.1L280.9 539.7L281.2 547.6L281.6 552.0L281.9 545.9L282.3 547.0L282.6 545.8L282.9 547.6L283.3 547.6L283.6 549.0L284.0 547.0L284.3 542.2L284.7 547.5L285.0 543.2L285.3 547.1L285.7 545.4L286.0 549.0L286.4 543.1L286.7 546.4L287.0 544.1L287.4 547.9L287.7 548.8L288.1 543.1L288.4 539.6L288.7 544.3L289.1 539.5L289.4 532.9L289.8 536.0L290.1 529.7L290.5 522.1L290.8 517.8L291.1 514.5L291.5 510.5L291.8 510.4L292.2 509.2L292.5 505.7L292.8 518.9L293.2 521.1L293.5 522.8L293.9 529.0L294.2 534.1L294.5 531.5L294.9 544.9L295.2 547.4L295.6 539.8L295.9 546.5L296.2 537.7L296.6 547.9L296.9 543.8L297.3 545.9L297.6 550.5L298.0 540.8L298.3 546.2L298.6 543.3L299.0 547.8L299.3 549.3L299.7 542.8L300.0 546.4L300.3 548.1L300.7 546.4L301.0 551.3L301.4 542.1L301.7 547.4L302.0 547.7L302.4 551.0L302.7 545.5L303.1 549.7L303.4 548.6L303.8 545.3L304.1 541.7L304.4 545.2L304.8 552.6L305.1 547.7L305.5 549.8L305.8 543.0L306.1 548.4L306.5 546.6L306.8 547.0L307.2 544.1L307.5 544.8L307.8 548.8L308.2 541.0L308.5 549.3L308.9 547.8L309.2 548.4L309.6 548.5L309.9 551.4L310.2 545.6L310.6 547.6L310.9 546.0L311.3 547.6L311.6 547.2L311.9 538.9L312.3 549.9L312.6 549.0L313.0 553.8L313.3 549.5L313.6 538.8L314.0 542.7L314.3 545.3L314.7 549.0L315.0 545.7L315.4 541.8L315.7 550.5L316.0 545.2L316.4 544.3L316.7 542.6L317.1 549.8L317.4 545.9L317.7 541.9L318.1 551.1L318.4 547.4L318.8 551.0L319.1 548.4L319.4 545.8L319.8 547.4L320.1 549.6L320.5 546.5L320.8 542.8L321.1 548.4L321.5 550.6L321.8 546.8L322.2 552.8L322.5 548.9L322.9 545.7L323.2 551.2L323.5 548.8L323.9 543.7L324.2 548.4L324.6 542.4L324.9 546.2L325.2 552.4L325.6 550.3L325.9 545.3L326.3 544.6L326.6 546.5L326.9 544.3L327.3 546.8L327.6 553.0L328.0 545.4L328.3 546.9L328.7 545.0L329.0 547.3L329.3 544.3L329.7 546.3L330.0 548.1L330.4 546.5L330.7 544.3L331.0 543.2L331.4 537.5L331.7 540.8L332.1 546.4L332.4 543.2L332.7 541.8L333.1 541.9L333.4 543.9L333.8 548.8L334.1 548.3L334.5 539.7L334.8 543.1L335.1 546.8L335.5 543.0L335.8 545.6L336.2 546.1L336.5 548.6L336.8 545.8L337.2 543.4L337.5 543.2L337.9 543.6L338.2 545.4L338.5 550.0L338.9 548.8L339.2 545.1L339.6 542.2L339.9 546.6L340.2 546.0L340.6 546.8L340.9 555.1L341.3 551.6L341.6 542.9L342.0 544.4L342.3 549.9L342.6 543.6L343.0 549.1L343.3 544.5L343.7 537.6L344.0 532.3L344.3 533.3L344.7 532.0L345.0 528.5L345.4 532.6L345.7 541.4L346.0 534.5L346.4 539.8L346.7 543.8L347.1 541.7L347.4 539.9L347.8 530.6L348.1 533.8L348.4 522.8L348.8 518.8L349.1 517.1L349.5 502.4L349.8 503.4L350.1 502.0L350.5 494.3L350.8 496.7L351.2 492.8L351.5 513.7L351.8 516.7L352.2 516.8L352.5 518.2L352.9 530.5L353.2 535.0L353.6 537.0L353.9 543.1L354.2 545.4L354.6 538.3L354.9 545.7L355.3 540.1L355.6 544.1L355.9 548.1L356.3 549.9L356.6 550.3L357.0 550.2L357.3 547.7L357.6 543.3L358.0 549.8L358.3 548.4L358.7 548.7L359.0 541.9L359.4 549.7L359.7 546.4L360.0 551.4L360.4 546.0L360.7 542.3L361.1 544.6L361.4 546.3L361.7 545.3L362.1 548.0L362.4 545.8L362.8 543.1L363.1 544.6L363.4 545.4L363.8 549.2L364.1 549.3L364.5 549.8L364.8 544.0L365.1 549.3L365.5 541.4L365.8 543.3L366.2 546.2L366.5 546.8L366.9 546.3L367.2 551.4L367.5 548.9L367.9 548.4L368.2 547.5L368.6 549.0L368.9 549.1L369.2 549.5L369.6 547.9L369.9 545.4L370.3 541.0L370.6 542.8L370.9 540.3L371.3 543.5L371.6 542.4L372.0 539.7L372.3 537.4L372.7 540.1L373.0 540.9L373.3 541.3L373.7 543.9L374.0 538.2L374.4 546.1L374.7 538.2L375.0 540.9L375.4 540.9L375.7 544.5L376.1 541.9L376.4 548.9L376.7 547.7L377.1 544.5L377.4 545.7L377.8 542.3L378.1 541.7L378.5 539.6L378.8 534.5L379.1 537.0L379.5 534.4L379.8 533.3L380.2 527.0L380.5 531.0L380.8 532.7L381.2 533.6L381.5 540.1L381.9 537.7L382.2 535.7L382.5 539.6L382.9 545.1L383.2 550.7L383.6 546.5L383.9 546.2L384.3 544.2L384.6 545.2L384.9 550.2L385.3 546.3L385.6 540.7L386.0 549.5L386.3 543.4L386.6 550.8L387.0 545.8L387.3 551.6L387.7 548.0L388.0 550.4L388.3 543.2L388.7 551.1L389.0 540.8L389.4 550.2L389.7 548.0L390.0 548.9L390.4 552.0L390.7 546.6L391.1 544.3L391.4 551.6L391.8 545.7L392.1 551.1L392.4 554.3L392.8 549.1L393.1 547.7L393.5 547.2L393.8 549.3L394.1 542.3L394.5 548.6L394.8 546.1L395.2 550.7L395.5 549.1L395.8 547.2L396.2 547.9L396.5 554.1L396.9 547.3L397.2 543.3L397.6 550.7L397.9 549.8L398.2 549.1L398.6 549.9L398.9 548.8L399.3 547.5L399.6 547.3L399.9 554.4L400.3 545.7L400.6 544.4L401.0 550.2L401.3 549.2L401.6 549.0L402.0 549.3L402.3 554.3L402.7 550.3L403.0 545.8L403.4 542.6L403.7 552.8L404.0 548.3L404.4 552.4L404.7 549.8L405.1 552.3L405.4 553.9L405.7 552.6L406.1 552.6L406.4 548.1L406.8 550.0L407.1 553.7L407.4 553.6L407.8 552.8L408.1 548.7L408.5 550.8L408.8 548.4L409.1 550.2L409.5 550.8L409.8 553.2L410.2 545.9L410.5 551.3L410.9 551.8L411.2 547.1L411.5 551.3L411.9 548.5L412.2 546.9L412.6 552.6L412.9 548.2L413.2 556.1L413.6 547.2L413.9 547.8L414.3 548.4L414.6 551.5L414.9 551.9L415.3 550.5L415.6 542.2L416.0 553.5L416.3 551.5L416.7 547.1L417.0 550.6L417.3 550.0L417.7 545.4L418.0 550.7L418.4 548.4L418.7 551.6L419.0 549.0L419.4 551.6L419.7 543.6L420.1 550.4L420.4 555.0L420.7 550.7L421.1 549.4L421.4 554.5L421.8 549.3L422.1 546.9L422.5 550.8L422.8 543.8L423.1 544.3L423.5 547.9L423.8 549.9L424.2 552.2L424.5 550.1L424.8 551.0L425.2 549.3L425.5 549.3L425.9 545.6L426.2 552.4L426.5 551.0L426.9 546.6L427.2 549.2L427.6 549.4L427.9 546.1L428.3 543.0L428.6 547.7L428.9 547.9L429.3 552.1L429.6 547.0L430.0 546.7L430.3 544.9L430.6 548.1L431.0 546.4L431.3 547.4L431.7 547.2L432.0 549.6L432.3 547.9L432.7 545.3L433.0 537.5L433.4 546.8L433.7 539.0L434.0 538.3L434.4 534.0L434.7 531.2L435.1 517.0L435.4 512.4L435.8 512.6L436.1 511.5L436.4 510.5L436.8 509.0L437.1 508.8L437.5 514.8L437.8 525.3L438.1 532.3L438.5 536.3L438.8 542.6L439.2 544.4L439.5 544.5L439.8 543.1L440.2 544.1L440.5 545.2L440.9 542.1L441.2 548.0L441.6 543.6L441.9 537.4L442.2 536.4L442.6 534.3L442.9 523.3L443.3 519.6L443.6 522.3L443.9 516.7L444.3 514.7L444.6 519.9L445.0 513.1L445.3 527.8L445.6 521.3L446.0 527.7L446.3 537.1L446.7 533.9L447.0 541.7L447.4 540.8L447.7 546.8L448.0 545.7L448.4 546.3L448.7 547.0L449.1 553.6L449.4 544.4L449.7 547.7L450.1 547.5L450.4 548.4L450.8 550.7L451.1 545.4L451.4 546.1L451.8 536.7L452.1 543.6L452.5 542.0L452.8 538.8L453.1 533.8L453.5 524.4L453.8 519.4L454.2 526.3L454.5 509.4L454.9 510.7L455.2 492.4L455.5 495.0L455.9 480.8L456.2 484.1L456.6 477.2L456.9 478.6L457.2 473.7L457.6 497.7L457.9 495.8L458.3 493.8L458.6 502.7L458.9 512.7L459.3 520.8L459.6 526.1L460.0 530.3L460.3 536.1L460.7 540.3L461.0 542.9L461.3 542.2L461.7 543.5L462.0 544.5L462.4 541.1L462.7 540.8L463.0 543.5L463.4 539.8L463.7 533.5L464.1 534.9L464.4 527.6L464.7 531.6L465.1 528.9L465.4 529.5L465.8 532.7L466.1 532.9L466.5 546.9L466.8 539.4L467.1 542.9L467.5 555.3L467.8 548.6L468.2 548.5L468.5 549.0L468.8 547.6L469.2 550.9L469.5 548.4L469.9 549.5L470.2 544.6L470.5 550.3L470.9 549.6L471.2 548.7L471.6 548.9L471.9 547.4L472.3 549.0L472.6 550.3L472.9 547.8L473.3 551.4L473.6 549.2L474.0 546.8L474.3 552.5L474.6 548.3L475.0 546.0L475.3 545.4L475.7 549.8L476.0 544.1L476.3 546.8L476.7 546.6L477.0 547.1L477.4 549.1L477.7 545.9L478.0 549.5L478.4 543.7L478.7 546.1L479.1 545.3L479.4 546.1L479.8 544.7L480.1 541.4L480.4 542.8L480.8 542.2L481.1 545.1L481.5 545.5L481.8 541.8L482.1 532.1L482.5 540.5L482.8 536.3L483.2 534.4L483.5 530.8L483.8 538.1L484.2 534.9L484.5 527.9L484.9 537.2L485.2 537.0L485.6 538.2L485.9 541.0L486.2 543.7L486.6 534.3L486.9 542.8L487.3 544.5L487.6 545.2L487.9 544.2L488.3 547.1L488.6 548.8L489.0 548.5L489.3 538.4L489.6 544.1L490.0 542.3L490.3 545.3L490.7 542.9L491.0 544.6L491.4 549.5L491.7 541.0L492.0 548.5L492.4 545.4L492.7 538.9L493.1 534.2L493.4 541.0L493.7 539.7L494.1 549.1L494.4 534.4L494.8 538.9L495.1 543.6L495.4 550.7L495.8 544.3L496.1 545.2L496.5 529.7L496.8 540.0L497.2 542.9L497.5 538.1L497.8 539.7L498.2 534.4L498.5 540.3L498.9 531.8L499.2 541.0L499.5 539.1L499.9 538.1L500.2 539.0L500.6 544.8L500.9 538.8L501.2 536.4L501.6 542.0L501.9 537.0L502.3 539.9L502.6 535.6L502.9 538.4L503.3 543.6L503.6 541.2L504.0 547.3L504.3 545.9L504.7 542.4L505.0 551.2L505.3 537.2L505.7 543.0L506.0 542.9L506.4 550.9L506.7 543.3L507.0 545.2L507.4 549.0L507.7 542.9L508.1 544.2L508.4 537.8L508.7 532.2L509.1 533.5L509.4 529.9L509.8 538.3L510.1 537.8L510.5 539.4L510.8 532.6L511.1 534.6L511.5 542.5L511.8 536.2L512.2 541.4L512.5 539.3L512.8 544.8L513.2 543.0L513.5 547.2L513.9 545.6L514.2 547.1L514.5 548.0L514.9 549.4L515.2 551.0L515.6 544.8L515.9 545.2L516.3 549.8L516.6 552.6L516.9 546.1L517.3 552.1L517.6 543.9L518.0 547.7L518.3 546.5L518.6 549.8L519.0 547.3L519.3 552.2L519.7 553.5L520.0 543.6L520.3 549.4L520.7 551.4L521.0 547.8L521.4 550.9L521.7 554.1L522.0 551.2L522.4 547.8L522.7 543.6L523.1 549.1L523.4 550.9L523.8 553.6L524.1 549.1L524.4 546.9L524.8 551.8L525.1 554.6L525.5 547.6L525.8 549.1L526.1 545.2L526.5 546.8L526.8 552.8L527.2 553.5L527.5 547.2L527.8 542.6L528.2 547.4L528.5 549.4L528.9 548.4L529.2 546.5L529.6 546.6L529.9 548.7L530.2 545.9L530.6 548.6L530.9 549.7L531.3 548.3L531.6 540.4L531.9 550.2L532.3 547.6L532.6 549.8L533.0 543.8L533.3 546.5L533.6 543.8L534.0 538.7L534.3 536.5L534.7 533.7L535.0 529.9L535.4 527.9L535.7 525.4L536.0 530.1L536.4 521.1L536.7 523.2L537.1 533.0L537.4 531.4L537.7 530.1L538.1 538.0L538.4 539.2L538.8 538.7L539.1 539.9L539.4 544.9L539.8 540.5L540.1 539.5L540.5 541.6L540.8 540.0L541.2 529.1L541.5 529.2L541.8 521.8L542.2 520.0L542.5 506.2L542.9 504.1L543.2 491.4L543.5 484.7L543.9 479.7L544.2 479.3L544.6 487.1L544.9 484.5L545.2 488.2L545.6 493.0L545.9 508.8L546.3 521.5L546.6 526.2L546.9 524.4L547.3 538.8L547.6 533.3L548.0 540.2L548.3 541.3L548.7 546.0L549.0 538.0L549.3 545.4L549.7 546.2L550.0 543.9L550.4 551.1L550.7 551.0L551.0 542.9L551.4 542.5L551.7 546.5L552.1 552.8L552.4 547.3L552.7 551.7L553.1 541.9L553.4 547.5L553.8 543.8L554.1 550.0L554.5 543.1L554.8 543.8L555.1 544.3L555.5 539.1L555.8 539.2L556.2 549.1L556.5 544.3L556.8 542.8L557.2 543.6L557.5 535.6L557.9 542.7L558.2 535.3L558.5 535.2L558.9 534.1L559.2 520.4L559.6 517.7L559.9 529.5L560.3 515.0L560.6 520.6L560.9 508.5L561.3 516.0L561.6 512.6L562.0 523.3L562.3 524.7L562.6 530.7L563.0 529.6L563.3 532.0L563.7 531.4L564.0 538.4L564.3 533.4L564.7 532.4L565.0 545.9L565.4 541.8L565.7 541.5L566.1 545.1L566.4 541.4L566.7 540.4L567.1 543.0L567.4 538.3L567.8 543.4L568.1 545.1L568.4 541.4L568.8 540.0L569.1 535.8L569.5 540.4L569.8 538.7L570.1 537.1L570.5 539.5L570.8 534.7L571.2 536.8L571.5 534.8L571.8 536.9L572.2 524.3L572.5 544.3L572.9 536.4L573.2 537.3L573.6 535.7L573.9 531.1L574.2 534.9L574.6 540.8L574.9 537.7L575.3 536.8L575.6 539.0L575.9 541.7L576.3 541.7L576.6 543.0L577.0 542.3L577.3 542.0L577.6 543.9L578.0 541.2L578.3 545.3L578.7 540.8L579.0 539.4L579.4 540.5L579.7 543.8L580.0 547.7L580.4 543.5L580.7 545.3L581.1 550.5L581.4 541.3L581.7 540.3L582.1 544.0L582.4 547.3L582.8 543.7L583.1 543.4L583.4 553.1L583.8 551.7L584.1 549.1L584.5 544.3L584.8 546.3L585.2 546.0L585.5 546.3L585.8 543.2L586.2 544.4L586.5 548.3L586.9 543.9L587.2 545.5L587.5 540.4L587.9 539.6L588.2 547.6L588.6 542.1L588.9 538.7L589.2 544.4L589.6 539.9L589.9 541.3L590.3 539.5L590.6 537.8L590.9 537.7L591.3 543.0L591.6 542.6L592.0 544.4L592.3 546.7L592.7 542.6L593.0 543.6L593.3 548.6L593.7 542.0L594.0 552.1L594.4 551.9L594.7 547.5L595.0 544.7L595.4 545.5L595.7 542.3L596.1 548.8L596.4 548.1L596.7 550.3L597.1 559.7L597.4 554.5L597.8 551.4L598.1 552.5L598.5 547.1L598.8 552.7L599.1 547.8L599.5 551.9L599.8 547.7L600.2 546.0L600.5 547.3L600.8 548.6L601.2 551.7L601.5 555.0L601.9 546.7L602.2 548.1L602.5 554.4L602.9 547.8L603.2 550.9L603.6 547.2L603.9 548.6L604.3 553.4L604.6 547.6L604.9 547.2L605.3 546.7L605.6 553.4L606.0 545.8L606.3 549.7L606.6 548.6L607.0 544.8L607.3 550.3L607.7 544.3L608.0 541.9L608.3 551.7L608.7 550.0L609.0 551.2L609.4 550.5L609.7 549.5L610.1 547.9L610.4 551.3L610.7 547.7L611.1 551.3L611.4 551.4L611.8 551.1L612.1 548.6L612.4 550.5L612.8 551.6L613.1 552.9L613.5 551.9L613.8 551.1L614.1 547.9L614.5 552.3L614.8 554.4L615.2 552.7L615.5 552.7L615.8 551.4L616.2 553.8L616.5 554.1L616.9 558.5L617.2 548.1L617.6 554.5L617.9 550.9L618.2 550.8L618.6 555.6L618.9 552.3L619.3 551.1L619.6 548.3L619.9 550.0L620.3 557.8L620.6 554.5L621.0 553.5L621.3 546.5L621.6 555.2L622.0 546.4L622.3 551.1L622.7 552.5L623.0 553.7L623.4 547.5L623.7 553.0L624.0 550.4L624.4 552.5L624.7 554.5L625.1 556.4L625.4 551.1L625.7 552.5L626.1 554.5L626.4 556.1L626.8 550.4L627.1 553.8L627.4 548.3L627.8 544.2L628.1 542.4L628.5 541.8L628.8 546.7L629.2 540.7L629.5 544.2L629.8 540.8L630.2 543.4L630.5 538.8L630.9 533.9L631.2 536.2L631.5 543.2L631.9 540.5L632.2 542.5L632.6 545.8L632.9 547.0L633.2 538.4L633.6 542.0L633.9 551.6L634.3 550.2L634.6 545.5L634.9 550.3L635.3 552.2L635.6 550.9L636.0 553.1L636.3 552.0L636.7 550.0L637.0 548.1L637.3 548.9L637.7 554.5L638.0 547.7L638.4 551.3L638.7 552.5L639.0 549.1L639.4 554.7L639.7 547.9L640.1 552.3L640.4 548.2L640.7 545.9L641.1 552.7L641.4 549.7L641.8 550.5L642.1 549.2L642.5 547.8L642.8 551.1L643.1 551.9L643.5 550.3L643.8 552.2L644.2 548.9L644.5 552.2L644.8 540.6L645.2 552.7L645.5 548.9L645.9 542.3L646.2 540.9L646.5 541.6L646.9 545.0L647.2 533.2L647.6 537.8L647.9 533.6L648.3 535.4L648.6 543.9L648.9 540.5L649.3 533.3L649.6 536.9L650.0 542.5L650.3 541.1L650.6 537.3L651.0 544.1L651.3 542.4L651.7 542.6L652.0 537.9L652.3 549.5L652.7 545.1L653.0 538.4L653.4 544.1L653.7 543.7L654.1 540.7L654.4 538.3L654.7 540.6L655.1 539.9L655.4 536.1L655.8 535.0L656.1 538.6L656.4 532.8L656.8 533.4L657.1 539.5L657.5 532.0L657.8 541.4L658.1 548.4L658.5 538.2L658.8 538.0L659.2 542.1L659.5 545.8L659.8 539.3L660.2 552.5L660.5 549.2L660.9 550.1L661.2 549.3L661.6 551.0L661.9 549.2L662.2 552.2L662.6 546.9L662.9 546.3L663.3 550.7L663.6 549.0L663.9 552.3L664.3 546.5L664.6 546.1L665.0 553.2L665.3 552.8L665.6 550.3L666.0 548.6L666.3 549.0L666.7 553.0L667.0 548.1L667.4 551.3L667.7 557.3L668.0 551.4L668.4 551.6L668.7 549.9L669.1 550.7L669.4 556.4L669.7 546.3L670.1 553.9L670.4 549.2L670.8 548.7L671.1 551.5L671.4 553.3L671.8 548.5L672.1 552.3L672.5 548.5L672.8 551.9L673.2 554.9L673.5 550.8L673.8 551.9L674.2 551.2L674.5 554.7L674.9 543.9L675.2 553.3L675.5 546.6L675.9 548.4L676.2 542.4L676.6 542.6L676.9 542.1L677.2 542.3L677.6 545.0L677.9 537.7L678.3 540.0L678.6 535.8L679.0 538.6L679.3 541.1L679.6 537.9L680.0 542.7L680.3 543.2L680.7 541.7L681.0 543.5L681.3 542.9L681.7 547.6L682.0 544.3L682.4 550.1L682.7 550.0L683.0 551.6L683.4 552.9L683.7 551.2L684.1 552.0L684.4 553.0L684.7 555.7L685.1 553.1L685.4 551.8L685.8 548.4L686.1 553.4L686.5 556.2L686.8 552.0L687.1 547.5L687.5 552.7L687.8 553.7L688.2 551.1L688.5 552.1L688.8 553.5L689.2 552.5L689.5 553.5L689.9 554.4L690.2 552.2L690.5 548.2L690.9 555.2L691.2 557.0L691.6 552.1L691.9 548.0L692.3 550.7L692.6 549.8L692.9 556.6L693.3 549.5L693.6 558.6L694.0 552.5L694.3 556.5L694.6 553.9L695.0 550.2L695.3 549.8L695.7 554.2L696.0 552.2L696.3 552.6L696.7 553.7L697.0 555.0L697.4 549.3L697.7 553.8L698.1 550.7L698.4 555.5L698.7 553.2L699.1 550.4L699.4 555.7L699.8 549.6L700.1 550.5L700.4 554.0L700.8 550.7L701.1 554.9L701.5 549.6L701.8 551.6L702.1 549.8L702.5 547.6L702.8 548.9L703.2 551.8L703.5 551.5L703.8 549.3L704.2 548.5L704.5 544.7L704.9 548.1L705.2 549.2L705.6 549.9L705.9 547.3L706.2 550.2L706.6 548.2L706.9 552.4L707.3 549.8L707.6 553.4L707.9 549.8L708.3 549.1L708.6 549.8L709.0 550.2L709.3 551.1L709.6 552.5L710.0 556.3L710.3 551.7L710.7 552.3L711.0 553.3L711.4 552.1L711.7 550.4L712.0 554.6L712.4 554.5L712.7 552.2L713.1 554.2L713.4 554.4L713.7 556.5L714.1 555.4L714.4 555.4L714.8 553.7L715.1 551.6L715.4 551.9L715.8 552.7L716.1 552.1L716.5 556.6L716.8 549.9L717.2 548.1L717.5 556.4L717.8 552.1L718.2 557.4L718.5 551.3L718.9 553.0L719.2 550.9L719.5 553.8L719.9 551.2L720.2 558.0L720.6 552.7L720.9 554.9L721.2 558.4L721.6 552.2L721.9 554.1L722.3 550.0L722.6 551.5L723.0 555.4L723.3 552.6L723.6 558.8L724.0 554.0L724.3 550.7L724.7 553.8L725.0 554.6L725.3 558.8L725.7 558.3L726.0 552.3L726.4 557.5L726.7 549.2L727.0 553.1L727.4 548.6L727.7 555.9L728.1 551.4L728.4 556.4L728.7 549.9L729.1 558.4L729.4 554.2L729.8 554.1L730.1 552.1L730.5 550.6L730.8 557.1L731.1 554.5L731.5 554.3L731.8 560.5L732.2 548.8L732.5 555.1L732.8 549.0L733.2 552.4L733.5 554.3L733.9 550.0L734.2 550.4L734.5 557.5L734.9 554.9L735.2 552.3L735.6 550.2L735.9 556.0L736.3 552.5L736.6 548.9L736.9 554.8L737.3 553.3L737.6 557.8L738.0 554.3L738.3 553.1L738.6 557.8L739.0 551.1L739.3 546.7L739.7 548.1L740.0 554.3L740.3 549.3L740.7 549.2L741.0 552.5L741.4 547.0L741.7 548.3L742.1 549.7L742.4 546.8L742.7 550.0L743.1 545.0L743.4 551.9L743.8 545.9L744.1 546.9L744.4 548.0L744.8 544.1L745.1 542.4L745.5 548.8L745.8 546.6L746.1 541.1L746.5 537.8L746.8 544.2L747.2 543.6L747.5 542.8L747.9 542.9L748.2 545.1L748.5 544.8L748.9 543.6L749.2 552.0L749.6 547.5L749.9 544.0L750.2 550.8L750.6 546.1L750.9 544.1L751.3 545.9L751.6 548.4L751.9 547.8L752.3 550.9L752.6 550.3L753.0 548.0L753.3 546.2L753.6 554.8L754.0 549.8L754.3 549.8L754.7 547.8L755.0 546.0L755.4 545.6L755.7 553.2L756.0 544.3L756.4 547.5L756.7 547.6L757.1 550.3L757.4 553.4L757.7 546.5L758.1 550.6L758.4 551.7L758.8 547.1L759.1 550.6L759.4 549.5L759.8 550.4L760.1 546.2L760.5 555.1L760.8 549.3L761.2 549.2L761.5 552.4L761.8 550.2L762.2 549.1L762.5 547.8L762.9 548.8L763.2 549.9L763.5 549.8L763.9 560.1L764.2 552.1L764.6 552.6L764.9 553.9L765.2 552.0L765.6 549.2L765.9 555.3L766.3 551.7L766.6 551.9L767.0 550.6L767.3 551.1L767.6 550.6L768.0 554.8L768.3 556.2L768.7 548.9L769.0 557.0L769.3 556.2L769.7 556.8L770.0 551.6L770.4 551.3L770.7 553.0L771.0 553.4L771.4 557.6L771.7 552.6L772.1 557.8L772.4 550.1L772.7 554.3L773.1 551.4L773.4 553.2L773.8 552.2L774.1 556.5L774.5 553.4L774.8 552.7L775.1 558.0L775.5 549.9L775.8 553.3L776.2 554.0L776.5 553.0L776.8 553.4L777.2 556.5L777.5 552.2L777.9 553.7L778.2 553.8L778.5 554.3L778.9 551.8L779.2 546.5L779.6 556.0L779.9 554.6L780.3 553.8L780.6 552.3L780.9 549.8L781.3 555.3L781.6 551.7L782.0 551.0L782.3 554.4L782.6 548.6L783.0 553.8L783.3 549.4L783.7 550.2L784.0 553.3L784.3 550.5L784.7 554.8L785.0 547.0L785.4 551.5L785.7 549.3L786.1 550.3L786.4 551.5L786.7 551.8L787.1 549.7L787.4 549.8L787.8 551.0L788.1 549.9L788.4 554.8L788.8 550.1L789.1 551.4L789.5 547.2L789.8 550.2L790.1 548.9L790.5 554.1L790.8 550.9L791.2 553.1L791.5 551.7L791.9 550.4L792.2 552.7L792.5 551.9L792.9 552.8L793.2 552.7L793.6 551.9L793.9 555.2L794.2 550.3L794.6 551.8L794.9 550.8L795.3 550.8L795.6 548.9L795.9 545.8L796.3 549.2L796.6 551.5L797.0 549.6L797.3 545.9L797.6 550.4L798.0 545.5L798.3 552.4L798.7 545.6L799.0 550.4L799.4 546.9L799.7 549.3L800.0 547.0L800.4 553.0L800.7 548.0L801.1 544.5L801.4 544.0L801.7 549.2L802.1 547.6L802.4 551.2L802.8 545.5L803.1 543.5L803.4 544.2L803.8 546.8L804.1 545.7L804.5 546.7L804.8 549.6L805.2 547.5L805.5 548.9L805.8 549.8L806.2 548.0L806.5 552.1L806.9 550.9L807.2 551.4L807.5 548.9L807.9 550.5L808.2 544.6L808.6 549.7L808.9 549.4L809.2 552.8L809.6 546.9L809.9 550.1L810.3 547.1L810.6 548.5L811.0 547.7L811.3 550.1L811.6 548.8L812.0 551.6L812.3 552.7L812.7 548.1L813.0 547.5L813.3 547.1L813.7 551.0L814.0 551.8L814.4 549.5L814.7 544.7L815.0 547.1L815.4 551.0L815.7 548.1L816.1 549.1L816.4 547.0L816.7 543.4L817.1 545.6L817.4 542.7L817.8 544.2L818.1 545.9L818.5 543.6L818.8 544.6L819.1 544.0L819.5 546.4L819.8 546.1L820.2 553.5L820.5 540.4L820.8 545.8L821.2 542.1L821.5 551.0L821.9 544.2L822.2 551.1L822.5 544.9L822.9 544.7L823.2 550.7L823.6 552.3L823.9 551.2L824.3 554.9L824.6 551.4L824.9 546.9L825.3 552.4L825.6 551.2L826.0 547.4L826.3 558.0L826.6 548.9L827.0 548.1L827.3 555.4L827.7 557.8L828.0 552.5L828.3 553.8L828.7 555.6L829.0 553.4L829.4 555.5L829.7 554.6L830.1 552.8L830.4 552.8L830.7 553.6L831.1 551.1L831.4 555.0L831.8 550.7L832.1 556.5L832.4 557.6L832.8 554.3L833.1 554.3L833.5 556.4L833.8 554.6L834.1 556.0L834.5 554.6L834.8 551.9L835.2 551.2L835.5 552.7L835.9 552.1L836.2 555.1L836.5 550.8L836.9 552.0L837.2 551.5L837.6 553.7L837.9 554.9L838.2 556.5L838.6 554.4L838.9 555.8L839.3 556.3L839.6 553.3L839.9 551.4L840.3 553.0L840.6 551.4L841.0 555.5L841.3 554.7L841.6 549.7L842.0 555.7L842.3 554.4L842.7 554.1L843.0 554.8L843.4 553.3L843.7 555.5L844.0 554.9L844.4 553.4L844.7 553.4L845.1 554.0L845.4 548.4L845.7 556.2L846.1 551.7L846.4 551.7L846.8 556.6L847.1 555.5L847.4 556.1L847.8 556.7L848.1 557.7L848.5 556.4L848.8 556.6L849.2 555.7L849.5 553.5L849.8 552.5L850.2 550.1L850.5 560.4L850.9 549.4L851.2 555.5L851.5 552.9L851.9 557.0L852.2 552.9L852.6 550.7L852.9 555.5L853.2 552.7L853.6 553.3L853.9 552.7L854.3 552.9L854.6 552.2L855.0 553.4L855.3 550.0L855.6 553.0L856.0 551.2L856.3 546.6L856.7 550.0L857.0 551.1L857.3 545.2L857.7 548.2L858.0 543.7L858.4 550.5L858.7 549.6L859.0 550.7L859.4 549.0L859.7 554.0L860.1 550.1L860.4 558.2L860.8 547.0L861.1 550.7L861.4 554.0L861.8 549.4L862.1 556.0L862.5 557.9L862.8 555.0L863.1 552.2L863.5 555.4L863.8 546.3L864.2 553.6L864.5 551.4L864.8 552.0L865.2 553.7L865.5 549.5L865.9 548.3L866.2 552.8L866.5 552.0L866.9 549.8L867.2 554.1L867.6 554.0L867.9 555.4L868.3 548.5L868.6 551.9L868.9 552.1L869.3 550.2L869.6 552.6L870.0 551.3L870.3 555.4L870.6 552.6L871.0 558.2L871.3 554.2L871.7 558.9L872.0 553.1L872.3 552.4L872.7 550.7L873.0 557.5L873.4 554.6L873.7 555.7L874.1 552.9L874.4 554.5L874.7 557.9L875.1 553.0L875.4 551.2L875.8 548.4L876.1 551.2L876.4 551.2L876.8 552.0L877.1 554.8L877.5 550.2L877.8 556.6L878.1 551.3L878.5 554.2L878.8 550.5L879.2 553.4L879.5 554.5L879.9 555.1L880.2 557.8L880.5 554.4L880.9 554.1L881.2 553.2L881.6 555.4L881.9 555.6L882.2 552.2L882.6 554.8L882.9 552.3L883.3 551.6L883.6 551.8L883.9 551.8L884.3 552.0L884.6 556.0L885.0 551.7L885.3 554.3L885.6 550.5L886.0 555.5L886.3 553.0L886.7 549.8L887.0 552.4L887.4 546.1L887.7 550.4L888.0 549.8L888.4 555.2L888.7 553.8L889.1 547.9L889.4 549.8L889.7 553.6L890.1 552.4L890.4 549.4L890.8 554.1L891.1 551.3L891.4 552.2L891.8 550.0L892.1 552.1L892.5 553.9L892.8 552.8L893.2 559.7L893.5 550.2L893.8 546.3L894.2 553.6L894.5 559.3L894.9 551.9L895.2 554.1L895.5 556.9L895.9 550.9L896.2 556.0L896.6 550.8L896.9 559.2L897.2 557.9L897.6 554.7L897.9 555.7L898.3 550.1L898.6 550.8L899.0 549.8L899.3 552.2L899.6 551.7L900.0 552.6L900.3 553.6L900.7 555.7L901.0 553.2L901.3 554.9L901.7 556.2L902.0 555.7L902.4 550.6L902.7 551.9L903.0 556.5L903.4 549.7L903.7 554.8L904.1 556.3L904.4 556.6L904.8 552.5L905.1 556.2L905.4 553.2L905.8 553.7L906.1 549.1L906.5 553.5L906.8 557.0L907.1 549.5L907.5 552.0L907.8 556.5L908.2 556.5L908.5 555.8L908.8 556.0L909.2 550.0L909.5 556.1L909.9 551.4L910.2 555.7L910.5 549.3L910.9 555.9L911.2 556.7L911.6 554.4L911.9 557.7L912.3 555.4L912.6 558.0L912.9 550.1L913.3 553.8L913.6 554.0L914.0 555.4L914.3 553.1L914.6 556.1L915.0 549.4L915.3 555.9L915.7 556.5L916.0 557.6L916.3 552.4L916.7 554.9L917.0 553.0L917.4 555.4L917.7 550.9L918.1 555.8L918.4 553.6L918.7 554.2L919.1 551.3L919.4 553.8L919.8 551.1L920.1 556.4L920.4 558.4L920.8 552.3L921.1 555.5L921.5 552.3L921.8 553.5L922.1 555.8L922.5 555.1L922.8 556.2L923.2 557.2L923.5 551.1L923.9 551.3L924.2 554.7L924.5 553.9L924.9 552.5L925.2 548.0L925.6 548.6L925.9 548.3L926.2 547.5L926.6 550.0L926.9 550.1L927.3 548.5L927.6 552.1L927.9 553.3L928.3 551.6L928.6 550.3L929.0 548.0L929.3 547.1L929.6 553.8L930.0 547.1L930.3 554.7L930.7 548.0L931.0 553.0L931.4 548.9L931.7 553.5L932.0 549.2L932.4 555.4L932.7 555.4L933.1 551.4L933.4 552.1L933.7 552.6L934.1 551.0L934.4 555.7L934.8 552.6L935.1 552.8L935.4 554.8L935.8 553.6L936.1 555.3L936.5 555.8L936.8 552.1L937.2 551.5L937.5 551.7L937.8 557.3L938.2 556.9L938.5 551.6L938.9 554.4L939.2 556.1L939.5 553.1L939.9 549.3L940.2 549.4L940.6 551.0L940.9 547.7L941.2 549.0L941.6 546.0L941.9 552.2L942.3 545.5L942.6 547.6L943.0 546.9L943.3 550.4L943.6 553.8L944.0 549.5L944.3 546.1L944.7 550.8L945.0 549.6L945.3 547.8L945.7 551.0L946.0 555.2L946.4 551.0L946.7 555.8L947.0 548.9L947.4 551.0L947.7 549.6L948.1 554.4L948.4 554.7L948.8 550.5L949.1 548.3L949.4 549.4L949.8 552.5L950.1 550.4L950.5 549.8L950.8 556.9L951.1 551.6L951.5 556.9L951.8 554.1L952.2 551.9L952.5 555.4L952.8 554.5L953.2 551.7L953.5 557.3L953.9 556.0L954.2 554.7L954.5 549.7L954.9 551.9L955.2 557.5L955.6 551.3L955.9 554.8L956.3 554.7L956.6 551.6L956.9 556.2L957.3 554.3L957.6 556.2L958.0 552.2L958.3 550.4L958.6 554.0L959.0 554.6L959.3 552.1L959.7 552.4L960.0 557.8L960.3 554.6L960.7 555.6L961.0 558.7L961.4 554.0L961.7 558.5L962.1 552.4L962.4 552.9L962.7 550.6L963.1 553.5L963.4 552.8L963.8 556.7L964.1 555.1L964.4 555.6L964.8 554.3L965.1 553.9L965.5 556.3L965.8 551.5L966.1 551.5L966.5 552.2L966.8 554.4L967.2 558.3L967.5 558.2L967.9 551.3L968.2 553.5L968.5 553.6L968.9 551.7L969.2 552.5L969.6 553.9L969.9 553.5L970.2 553.7L970.6 551.3L970.9 554.8L971.3 554.5L971.6 551.5L971.9 557.4L972.3 554.4L972.6 553.4L973.0 558.6L973.3 555.1L973.7 548.2L974.0 554.1L974.3 551.3L974.7 552.1L975.0 552.5L975.4 551.3L975.7 553.3L976.0 552.1L976.4 551.4L976.7 551.8L977.1 549.6L977.4 552.1L977.7 550.9L978.1 552.7L978.4 548.5L978.8 551.9L979.1 554.1L979.4 552.4L979.8 546.7L980.1 555.0L980.5 553.4L980.8 549.4L981.2 553.2L981.5 552.6L981.8 553.8L982.2 553.7L982.5 551.6L982.9 550.5L983.2 546.8L983.5 551.3L983.9 549.9L984.2 546.6L984.6 556.8L984.9 552.8L985.2 553.2L985.6 547.7L985.9 548.6L986.3 552.5L986.6 551.2L987.0 550.3L987.3 553.3L987.6 554.8L988.0 552.6L988.3 550.8L988.7 553.3L989.0 552.9L989.3 549.7L989.7 552.2L990.0 548.3L990.4 550.8L990.7 549.3L991.0 551.9L991.4 555.4L991.7 556.5L992.1 555.3L992.4 553.0L992.8 556.5L993.1 552.5L993.4 552.7L993.8 547.9L994.1 557.3L994.5 555.6L994.8 556.0L995.1 553.3L995.5 554.6L995.8 549.9L996.2 555.0L996.5 555.7L996.8 551.9L997.2 552.2L997.5 555.9L997.9 549.8L998.2 552.6L998.5 552.3L998.9 556.7L999.2 554.2L999.6 556.0L999.9 550.7L1000.3 556.0L1000.6 554.2L1000.9 552.6L1001.3 551.1L1001.6 549.5L1002.0 559.4L1002.3 560.5L1002.6 554.6L1003.0 557.0L1003.3 555.3L1003.7 555.1L1004.0 554.6L1004.3 553.2L1004.7 553.6L1005.0 553.9L1005.4 554.1L1005.7 558.0L1006.1 552.3L1006.4 555.8L1006.7 554.7L1007.1 553.6L1007.4 550.2L1007.8 554.8L1008.1 555.5L1008.4 552.8L1008.8 549.9L1009.1 552.2L1009.5 551.2L1009.8 555.8L1010.1 555.2L1010.5 554.4L1010.8 549.5L1011.2 553.2L1011.5 549.1L1011.9 551.9L1012.2 552.5L1012.5 553.6L1012.9 551.1L1013.2 555.7L1013.6 548.3L1013.9 551.0L1014.2 551.6L1014.6 557.2L1014.9 546.7L1015.3 549.7L1015.6 549.8L1015.9 553.0L1016.3 550.3L1016.6 555.5L1017.0 550.6L1017.3 552.3L1017.7 549.1L1018.0 549.8L1018.3 553.5L1018.7 551.7L1019.0 548.0L1019.4 548.5L1019.7 548.3L1020.0 550.0L1020.4 552.6L1020.7 550.4L1021.1 550.7L1021.4 547.1L1021.7 552.8L1022.1 546.8L1022.4 551.0L1022.8 545.1L1023.1 553.3L1023.4 540.3L1023.8 545.9L1024.1 549.5L1024.5 549.4L1024.8 545.1L1025.2 549.0L1025.5 550.0L1025.8 543.2L1026.2 551.1L1026.5 551.4L1026.9 551.8L1027.2 555.1L1027.5 549.5L1027.9 551.8L1028.2 553.4L1028.6 547.9L1028.9 555.0L1029.2 549.9L1029.6 552.0L1029.9 555.7L1030.3 550.7L1030.6 556.1L1031.0 555.9L1031.3 552.3L1031.6 554.4L1032.0 555.7L1032.3 554.9L1032.7 557.7L1033.0 559.0L1033.3 552.5L1033.7 559.6L1034.0 556.2L1034.4 558.8L1034.7 552.6L1035.0 549.3L1035.4 554.9L1035.7 553.4L1036.1 552.6L1036.4 556.3L1036.8 548.4L1037.1 557.8L1037.4 555.2L1037.8 552.5L1038.1 555.1L1038.5 552.7L1038.8 557.1L1039.1 555.0L1039.5 549.3L1039.8 557.8L1040.2 552.5L1040.5 549.5L1040.8 551.3L1041.2 549.9L1041.5 551.7L1041.9 551.1L1042.2 547.8L1042.6 555.1L1042.9 554.2L1043.2 551.4L1043.6 550.6L1043.9 554.2L1044.3 556.3L1044.6 552.7L1044.9 549.1L1045.3 551.7L1045.6 553.1L1046.0 550.5L1046.3 554.9L1046.6 549.5L1047.0 549.3L1047.3 552.4L1047.7 554.3L1048.0 550.2L1048.3 550.8L1048.7 551.5L1049.0 552.4L1049.4 554.0L1049.7 551.6L1050.1 554.7L1050.4 554.4L1050.7 550.6L1051.1 553.6L1051.4 553.4L1051.8 555.0L1052.1 555.0L1052.4 556.2L1052.8 557.3L1053.1 550.6L1053.5 555.9L1053.8 559.3L1054.1 555.3L1054.5 551.4L1054.8 550.7L1055.2 556.5L1055.5 553.1L1055.9 551.4L1056.2 551.3L1056.5 551.6L1056.9 556.9L1057.2 556.1L1057.6 558.7L1057.9 554.0L1058.2 557.1L1058.6 553.2L1058.9 556.1L1059.3 551.9L1059.6 550.6L1059.9 554.3L1060.3 557.4L1060.6 552.4L1061.0 553.1L1061.3 557.0L1061.7 555.0L1062.0 553.5L1062.3 555.1L1062.7 552.7L1063.0 550.1L1063.4 553.4L1063.7 554.4L1064.0 552.2L1064.4 552.9L1064.7 553.2L1065.1 558.1L1065.4 548.5L1065.7 555.5L1066.1 555.7L1066.4 553.9L1066.8 557.7L1067.1 550.6L1067.4 550.1L1067.8 552.5L1068.1 557.5L1068.5 554.4L1068.8 556.8L1069.2 554.8L1069.5 556.1L1069.8 553.1L1070.2 552.7L1070.5 556.0L1070.9 554.6L1071.2 556.1L1071.5 558.0L1071.9 552.7L1072.2 553.5L1072.6 553.7L1072.9 552.8L1073.2 549.8L1073.6 553.4L1073.9 556.5L1074.3 551.9L1074.6 557.7L1075.0 555.7L1075.3 555.5L1075.6 553.3L1076.0 554.6L1076.3 556.6L1076.7 550.6L1077.0 562.0" fill="none" stroke="#fffacd" stroke-width="1.15"/>
<path d="M136.0 564.3L136.5 564.2L137.0 564.2L137.5 564.2L138.0 564.2L138.5 564.2L139.0 564.2L139.5 564.2L140.0 564.1L140.5 564.1L141.0 564.1L141.5 564.1L142.0 564.1L142.5 564.0L143.0 564.0L143.5 564.0L144.0 564.0L144.5 563.9L145.0 563.9L145.5 563.8L146.0 563.8L146.5 563.7L147.0 563.7L147.5 563.6L148.0 563.6L148.5 563.5L149.0 563.4L149.5 563.3L150.0 563.2L150.5 563.0L151.0 562.8L151.5 562.5L152.0 562.0L152.5 561.2L153.0 559.8L153.5 557.2L154.0 552.8L154.5 545.5L155.0 534.0L155.5 516.7L156.0 492.1L156.5 459.0L157.0 417.3L157.5 368.0L158.0 313.9L158.5 259.5L159.0 210.4L159.5 172.7L160.0 151.8L160.5 150.7L161.0 169.7L161.5 205.9L162.0 254.1L162.5 308.2L163.0 362.6L163.5 412.5L164.0 455.1L164.5 489.1L165.0 514.5L165.5 532.5L166.0 544.6L166.5 552.2L167.0 556.8L167.5 559.6L168.0 561.1L168.5 562.0L169.0 562.5L169.5 562.8L170.0 563.0L170.5 563.2L171.0 563.3L171.5 563.4L172.0 563.5L172.5 563.6L173.0 563.6L173.5 563.7L174.0 563.7L174.5 563.8L175.0 563.8L175.5 563.9L176.0 563.9L176.5 564.0L177.0 564.0L177.5 564.0L178.0 564.0L178.5 564.1L179.0 564.1L179.5 564.1L180.0 564.1L180.5 564.1L181.0 564.2L181.5 564.2L182.0 564.2L182.5 564.2L183.0 564.2L183.5 564.2L184.0 564.2L184.5 564.3" fill="none" stroke="#ff0000" stroke-width="1.6"/>
<path d="M133.5 564.3L134.0 564.2L134.5 564.2L135.0 564.2L135.5 564.2L136.0 564.2L136.5 564.2L137.0 564.2L137.5 564.1L138.0 564.1L138.5 564.1L139.0 564.1L139.5 564.0L140.0 564.0L140.5 564.0L141.0 563.9L141.5 563.9L142.0 563.8L142.5 563.8L143.0 563.7L143.5 563.7L144.0 563.6L144.5 563.5L145.0 563.4L145.5 563.3L146.0 563.2L146.5 563.0L147.0 562.8L147.5 562.6L148.0 562.3L148.5 562.0L149.0 561.6L149.5 561.1L150.0 560.5L150.5 559.6L151.0 558.5L151.5 557.0L152.0 554.7L152.5 551.5L153.0 546.7L153.5 539.5L154.0 529.5L154.5 518.0L155.0 510.9L155.5 514.3L156.0 525.0L156.5 535.9L157.0 544.1L157.5 549.8L158.0 553.6L158.5 556.2L159.0 558.0L159.5 559.2L160.0 560.2L160.5 560.9L161.0 561.4L161.5 561.9L162.0 562.2L162.5 562.5L163.0 562.7L163.5 562.9L164.0 563.1L164.5 563.2L165.0 563.4L165.5 563.5L166.0 563.6L166.5 563.6L167.0 563.7L167.5 563.8L168.0 563.8L168.5 563.9L169.0 563.9L169.5 564.0L170.0 564.0L170.5 564.0L171.0 564.1L171.5 564.1L172.0 564.1L172.5 564.1L173.0 564.1L173.5 564.2L174.0 564.2L174.5 564.2L175.0 564.2L175.5 564.2L176.0 564.2L176.5 564.3" fill="none" stroke="#ff0000" stroke-width="1.6"/>
<path d="M169.0 564.3L169.5 564.2L170.0 564.2L170.5 564.2L171.0 564.2L171.5 564.2L172.0 564.1L172.5 564.1L173.0 564.1L173.5 564.0L174.0 564.0L174.5 563.9L175.0 563.9L175.5 563.8L176.0 563.7L176.5 563.6L177.0 563.5L177.5 563.3L178.0 563.1L178.5 562.5L179.0 561.4L179.5 558.7L180.0 552.8L180.5 541.0L181.0 519.4L181.5 483.8L182.0 431.6L182.5 364.4L183.0 289.6L183.5 220.7L184.0 173.7L184.5 161.5L185.0 187.7L185.5 244.6L186.0 317.5L186.5 390.8L187.0 453.0L187.5 498.9L188.0 528.9L188.5 546.4L189.0 555.5L189.5 559.9L190.0 561.9L190.5 562.8L191.0 563.2L191.5 563.4L192.0 563.5L192.5 563.7L193.0 563.8L193.5 563.8L194.0 563.9L194.5 563.9L195.0 564.0L195.5 564.0L196.0 564.1L196.5 564.1L197.0 564.1L197.5 564.2L198.0 564.2L198.5 564.2L199.0 564.2L199.5 564.2" fill="none" stroke="#ff0000" stroke-width="1.6"/>
<path d="M155.5 564.3L156.0 564.2L156.5 564.2L157.0 564.2L157.5 564.2L158.0 564.2L158.5 564.2L159.0 564.2L159.5 564.2L160.0 564.1L160.5 564.1L161.0 564.1L161.5 564.1L162.0 564.1L162.5 564.0L163.0 564.0L163.5 564.0L164.0 563.9L164.5 563.9L165.0 563.9L165.5 563.8L166.0 563.8L166.5 563.7L167.0 563.7L167.5 563.6L168.0 563.6L168.5 563.5L169.0 563.4L169.5 563.3L170.0 563.2L170.5 563.1L171.0 562.9L171.5 562.8L172.0 562.6L172.5 562.4L173.0 562.1L173.5 561.8L174.0 561.4L174.5 560.9L175.0 560.4L175.5 559.6L176.0 558.7L176.5 557.5L177.0 555.8L177.5 553.4L178.0 549.7L178.5 543.9L179.0 534.9L179.5 521.7L180.0 503.9L180.5 484.8L181.0 473.9L181.5 480.2L182.0 498.2L182.5 516.9L183.0 531.6L183.5 541.7L184.0 548.3L184.5 552.5L185.0 555.2L185.5 557.1L186.0 558.4L186.5 559.4L187.0 560.2L187.5 560.8L188.0 561.3L188.5 561.7L189.0 562.0L189.5 562.3L190.0 562.5L190.5 562.7L191.0 562.9L191.5 563.0L192.0 563.2L192.5 563.3L193.0 563.4L193.5 563.5L194.0 563.5L194.5 563.6L195.0 563.7L195.5 563.7L196.0 563.8L196.5 563.8L197.0 563.9L197.5 563.9L198.0 563.9L198.5 564.0L199.0 564.0L199.5 564.0L200.0 564.1L200.5 564.1L201.0 564.1L201.5 564.1L202.0 564.1L202.5 564.1L203.0 564.2L203.5 564.2L204.0 564.2L204.5 564.2L205.0 564.2L205.5 564.2L206.0 564.2L206.5 564.3" fill="none" stroke="#ff0000" stroke-width="1.6"/>
<path d="M203.5 564.3L204.0 564.2L204.5 564.2L205.0 564.2L205.5 564.2L206.0 564.2L206.5 564.2L207.0 564.2L207.5 564.2L208.0 564.1L208.5 564.1L209.0 564.1L209.5 564.1L210.0 564.1L210.5 564.0L211.0 564.0L211.5 564.0L212.0 563.9L212.5 563.9L213.0 563.9L213.5 563.8L214.0 563.8L214.5 563.8L215.0 563.7L215.5 563.6L216.0 563.6L216.5 563.5L217.0 563.4L217.5 563.3L218.0 563.2L218.5 563.1L219.0 563.0L219.5 562.8L220.0 562.6L220.5 562.4L221.0 562.2L221.5 561.8L222.0 561.4L222.5 560.8L223.0 560.1L223.5 559.1L224.0 557.9L224.5 556.3L225.0 554.3L225.5 551.9L226.0 549.2L226.5 546.0L227.0 542.7L227.5 539.4L228.0 536.5L228.5 534.5L229.0 533.8L229.5 534.6L230.0 536.7L230.5 539.6L231.0 542.9L231.5 546.2L232.0 549.3L232.5 552.1L233.0 554.5L233.5 556.4L234.0 558.0L234.5 559.2L235.0 560.1L235.5 560.9L236.0 561.4L236.5 561.8L237.0 562.2L237.5 562.4L238.0 562.7L238.5 562.8L239.0 563.0L239.5 563.1L240.0 563.2L240.5 563.3L241.0 563.4L241.5 563.5L242.0 563.6L242.5 563.6L243.0 563.7L243.5 563.8L244.0 563.8L244.5 563.8L245.0 563.9L245.5 563.9L246.0 564.0L246.5 564.0L247.0 564.0L247.5 564.0L248.0 564.1L248.5 564.1L249.0 564.1L249.5 564.1L250.0 564.1L250.5 564.2L251.0 564.2L251.5 564.2L252.0 564.2L252.5 564.2L253.0 564.2L253.5 564.2L254.0 564.2L254.5 564.3" fill="none" stroke="#ff0000" stroke-width="1.6"/>
<path d="M217.5 564.2L218.0 564.2L218.5 564.2L219.0 564.2L219.5 564.2L220.0 564.2L220.5 564.2L221.0 564.1L221.5 564.1L222.0 564.1L222.5 564.1L223.0 564.1L223.5 564.0L224.0 564.0L224.5 564.0L225.0 563.9L225.5 563.9L226.0 563.8L226.5 563.8L227.0 563.7L227.5 563.7L228.0 563.6L228.5 563.5L229.0 563.4L229.5 563.3L230.0 563.2L230.5 563.1L231.0 562.9L231.5 562.7L232.0 562.4L232.5 562.0L233.0 561.5L233.5 560.8L234.0 559.8L234.5 558.6L235.0 557.0L235.5 554.9L236.0 552.5L236.5 549.6L237.0 546.5L237.5 543.2L238.0 540.0L238.5 537.4L239.0 535.8L239.5 535.6L240.0 536.7L240.5 539.0L241.0 542.0L241.5 545.3L242.0 548.6L242.5 551.5L243.0 554.1L243.5 556.3L244.0 558.1L244.5 559.4L245.0 560.5L245.5 561.2L246.0 561.8L246.5 562.3L247.0 562.6L247.5 562.8L248.0 563.0L248.5 563.2L249.0 563.3L249.5 563.4L250.0 563.5L250.5 563.6L251.0 563.7L251.5 563.7L252.0 563.8L252.5 563.8L253.0 563.9L253.5 563.9L254.0 564.0L254.5 564.0L255.0 564.0L255.5 564.0L256.0 564.1L256.5 564.1L257.0 564.1L257.5 564.1L258.0 564.2L258.5 564.2L259.0 564.2L259.5 564.2L260.0 564.2L260.5 564.2L261.0 564.2L261.5 564.3" fill="none" stroke="#ff0000" stroke-width="1.6"/>
<path d="M239.5 564.2L240.0 564.2L240.5 564.2L241.0 564.2L241.5 564.2L242.0 564.2L242.5 564.1L243.0 564.1L243.5 564.1L244.0 564.0L244.5 564.0L245.0 564.0L245.5 563.9L246.0 563.9L246.5 563.8L247.0 563.7L247.5 563.7L248.0 563.6L248.5 563.5L249.0 563.3L249.5 563.2L250.0 563.0L250.5 562.8L251.0 562.5L251.5 562.1L252.0 561.7L252.5 560.9L253.0 559.5L253.5 556.6L254.0 550.3L254.5 537.6L255.0 515.4L255.5 482.5L256.0 443.0L256.5 407.1L257.0 389.8L257.5 400.4L258.0 432.9L258.5 472.7L259.0 507.9L259.5 532.9L260.0 547.8L260.5 555.4L261.0 559.0L261.5 560.6L262.0 561.5L262.5 562.0L263.0 562.4L263.5 562.7L264.0 563.0L264.5 563.1L265.0 563.3L265.5 563.4L266.0 563.6L266.5 563.6L267.0 563.7L267.5 563.8L268.0 563.9L268.5 563.9L269.0 564.0L269.5 564.0L270.0 564.0L270.5 564.1L271.0 564.1L271.5 564.1L272.0 564.2L272.5 564.2L273.0 564.2L273.5 564.2L274.0 564.2L274.5 564.2L275.0 564.3" fill="none" stroke="#ff0000" stroke-width="1.6"/>
<path d="M260.5 564.3L261.0 564.2L261.5 564.2L262.0 564.2L262.5 564.2L263.0 564.2L263.5 564.2L264.0 564.2L264.5 564.2L265.0 564.2L265.5 564.2L266.0 564.1L266.5 564.1L267.0 564.1L267.5 564.1L268.0 564.1L268.5 564.1L269.0 564.0L269.5 564.0L270.0 564.0L270.5 564.0L271.0 564.0L271.5 563.9L272.0 563.9L272.5 563.9L273.0 563.8L273.5 563.8L274.0 563.8L274.5 563.7L275.0 563.7L275.5 563.6L276.0 563.6L276.5 563.5L277.0 563.5L277.5 563.4L278.0 563.3L278.5 563.2L279.0 563.1L279.5 563.0L280.0 562.9L280.5 562.8L281.0 562.6L281.5 562.4L282.0 562.2L282.5 562.0L283.0 561.7L283.5 561.3L284.0 560.9L284.5 560.3L285.0 559.6L285.5 558.7L286.0 557.5L286.5 556.2L287.0 554.5L287.5 552.5L288.0 550.2L288.5 547.6L289.0 544.7L289.5 541.6L290.0 538.4L290.5 535.5L291.0 533.1L291.5 531.4L292.0 530.9L292.5 531.5L293.0 533.2L293.5 535.6L294.0 538.6L294.5 541.7L295.0 544.8L295.5 547.7L296.0 550.3L296.5 552.6L297.0 554.6L297.5 556.2L298.0 557.6L298.5 558.7L299.0 559.6L299.5 560.3L300.0 560.9L300.5 561.3L301.0 561.7L301.5 562.0L302.0 562.2L302.5 562.4L303.0 562.6L303.5 562.8L304.0 562.9L304.5 563.0L305.0 563.1L305.5 563.2L306.0 563.3L306.5 563.4L307.0 563.5L307.5 563.5L308.0 563.6L308.5 563.6L309.0 563.7L309.5 563.7L310.0 563.8L310.5 563.8L311.0 563.8L311.5 563.9L312.0 563.9L312.5 563.9L313.0 564.0L313.5 564.0L314.0 564.0L314.5 564.0L315.0 564.0L315.5 564.1L316.0 564.1L316.5 564.1L317.0 564.1L317.5 564.1L318.0 564.1L318.5 564.2L319.0 564.2L319.5 564.2L320.0 564.2L320.5 564.2L321.0 564.2L321.5 564.2L322.0 564.2L322.5 564.2L323.0 564.2L323.5 564.3" fill="none" stroke="#ff0000" stroke-width="1.6"/>
<path d="M314.5 564.3L315.0 564.2L315.5 564.2L316.0 564.2L316.5 564.2L317.0 564.2L317.5 564.2L318.0 564.2L318.5 564.2L319.0 564.2L319.5 564.2L320.0 564.2L320.5 564.1L321.0 564.1L321.5 564.1L322.0 564.1L322.5 564.1L323.0 564.1L323.5 564.1L324.0 564.0L324.5 564.0L325.0 564.0L325.5 564.0L326.0 564.0L326.5 563.9L327.0 563.9L327.5 563.9L328.0 563.9L328.5 563.8L329.0 563.8L329.5 563.8L330.0 563.7L330.5 563.7L331.0 563.7L331.5 563.6L332.0 563.6L332.5 563.5L333.0 563.5L333.5 563.4L334.0 563.3L334.5 563.3L335.0 563.2L335.5 563.1L336.0 563.0L336.5 562.9L337.0 562.8L337.5 562.7L338.0 562.5L338.5 562.3L339.0 562.2L339.5 561.9L340.0 561.7L340.5 561.4L341.0 561.0L341.5 560.5L342.0 559.9L342.5 559.2L343.0 558.4L343.5 557.3L344.0 555.9L344.5 554.3L345.0 552.3L345.5 550.1L346.0 547.4L346.5 544.5L347.0 541.3L347.5 537.9L348.0 534.5L348.5 531.3L349.0 528.5L349.5 526.6L350.0 525.8L350.5 526.3L351.0 527.8L351.5 530.3L352.0 533.4L352.5 536.8L353.0 540.2L353.5 543.5L354.0 546.6L354.5 549.3L355.0 551.7L355.5 553.7L356.0 555.4L356.5 556.9L357.0 558.0L357.5 559.0L358.0 559.7L358.5 560.4L359.0 560.8L359.5 561.3L360.0 561.6L360.5 561.9L361.0 562.1L361.5 562.3L362.0 562.5L362.5 562.6L363.0 562.8L363.5 562.9L364.0 563.0L364.5 563.1L365.0 563.2L365.5 563.2L366.0 563.3L366.5 563.4L367.0 563.4L367.5 563.5L368.0 563.6L368.5 563.6L369.0 563.7L369.5 563.7L370.0 563.7L370.5 563.8L371.0 563.8L371.5 563.8L372.0 563.9L372.5 563.9L373.0 563.9L373.5 563.9L374.0 564.0L374.5 564.0L375.0 564.0L375.5 564.0L376.0 564.0L376.5 564.1L377.0 564.1L377.5 564.1L378.0 564.1L378.5 564.1L379.0 564.1L379.5 564.1L380.0 564.2L380.5 564.2L381.0 564.2L381.5 564.2L382.0 564.2L382.5 564.2L383.0 564.2L383.5 564.2L384.0 564.2L384.5 564.2L385.0 564.2L385.5 564.3" fill="none" stroke="#ff0000" stroke-width="1.6"/>
<path d="M405.5 564.2L406.0 564.2L406.5 564.2L407.0 564.2L407.5 564.2L408.0 564.2L408.5 564.2L409.0 564.2L409.5 564.2L410.0 564.2L410.5 564.1L411.0 564.1L411.5 564.1L412.0 564.1L412.5 564.1L413.0 564.1L413.5 564.0L414.0 564.0L414.5 564.0L415.0 564.0L415.5 564.0L416.0 563.9L416.5 563.9L417.0 563.9L417.5 563.8L418.0 563.8L418.5 563.8L419.0 563.7L419.5 563.7L420.0 563.6L420.5 563.6L421.0 563.5L421.5 563.4L422.0 563.4L422.5 563.3L423.0 563.2L423.5 563.0L424.0 562.8L424.5 562.6L425.0 562.4L425.5 562.1L426.0 561.7L426.5 561.2L427.0 560.6L427.5 559.9L428.0 559.1L428.5 558.1L429.0 556.9L429.5 555.6L430.0 554.0L430.5 552.3L431.0 550.5L431.5 548.5L432.0 546.4L432.5 544.2L433.0 542.0L433.5 539.9L434.0 538.0L434.5 536.3L435.0 535.0L435.5 534.2L436.0 533.8L436.5 534.0L437.0 534.7L437.5 535.9L438.0 537.5L438.5 539.3L439.0 541.4L439.5 543.6L440.0 545.7L440.5 547.9L441.0 549.9L441.5 551.8L442.0 553.6L442.5 555.1L443.0 556.5L443.5 557.8L444.0 558.8L444.5 559.7L445.0 560.4L445.5 561.0L446.0 561.6L446.5 562.0L447.0 562.3L447.5 562.6L448.0 562.8L448.5 563.0L449.0 563.1L449.5 563.2L450.0 563.3L450.5 563.4L451.0 563.5L451.5 563.6L452.0 563.6L452.5 563.7L453.0 563.7L453.5 563.8L454.0 563.8L454.5 563.8L455.0 563.9L455.5 563.9L456.0 563.9L456.5 564.0L457.0 564.0L457.5 564.0L458.0 564.0L458.5 564.0L459.0 564.1L459.5 564.1L460.0 564.1L460.5 564.1L461.0 564.1L461.5 564.1L462.0 564.2L462.5 564.2L463.0 564.2L463.5 564.2L464.0 564.2L464.5 564.2L465.0 564.2L465.5 564.2L466.0 564.2L466.5 564.2L467.0 564.3" fill="none" stroke="#ff0000" stroke-width="1.6"/>
<path d="M428.5 564.3L429.0 564.2L429.5 564.2L430.0 564.2L430.5 564.2L431.0 564.2L431.5 564.2L432.0 564.2L432.5 564.2L433.0 564.2L433.5 564.1L434.0 564.1L434.5 564.1L435.0 564.1L435.5 564.1L436.0 564.0L436.5 564.0L437.0 564.0L437.5 564.0L438.0 563.9L438.5 563.9L439.0 563.9L439.5 563.8L440.0 563.8L440.5 563.8L441.0 563.7L441.5 563.7L442.0 563.6L442.5 563.5L443.0 563.5L443.5 563.4L444.0 563.3L444.5 563.2L445.0 563.1L445.5 563.0L446.0 562.8L446.5 562.7L447.0 562.5L447.5 562.2L448.0 562.0L448.5 561.6L449.0 561.2L449.5 560.5L450.0 559.6L450.5 558.2L451.0 556.2L451.5 553.1L452.0 548.6L452.5 542.3L453.0 534.1L453.5 523.9L454.0 511.8L454.5 498.8L455.0 485.8L455.5 474.6L456.0 467.1L456.5 464.9L457.0 468.6L457.5 477.3L458.0 489.2L458.5 502.4L459.0 515.2L459.5 526.8L460.0 536.6L460.5 544.2L461.0 549.9L461.5 554.0L462.0 556.8L462.5 558.7L463.0 559.9L463.5 560.7L464.0 561.3L464.5 561.7L465.0 562.0L465.5 562.3L466.0 562.5L466.5 562.7L467.0 562.9L467.5 563.0L468.0 563.1L468.5 563.2L469.0 563.3L469.5 563.4L470.0 563.5L470.5 563.6L471.0 563.6L471.5 563.7L472.0 563.7L472.5 563.8L473.0 563.8L473.5 563.8L474.0 563.9L474.5 563.9L475.0 563.9L475.5 564.0L476.0 564.0L476.5 564.0L477.0 564.0L477.5 564.1L478.0 564.1L478.5 564.1L479.0 564.1L479.5 564.1L480.0 564.2L480.5 564.2L481.0 564.2L481.5 564.2L482.0 564.2L482.5 564.2L483.0 564.2L483.5 564.2L484.0 564.2L484.5 564.3" fill="none" stroke="#ff0000" stroke-width="1.6"/>
<path d="M510.0 564.2L510.5 564.2L511.0 564.2L511.5 564.2L512.0 564.2L512.5 564.2L513.0 564.2L513.5 564.2L514.0 564.2L514.5 564.2L515.0 564.2L515.5 564.1L516.0 564.1L516.5 564.1L517.0 564.1L517.5 564.1L518.0 564.1L518.5 564.1L519.0 564.0L519.5 564.0L520.0 564.0L520.5 564.0L521.0 564.0L521.5 563.9L522.0 563.9L522.5 563.9L523.0 563.8L523.5 563.8L524.0 563.8L524.5 563.7L525.0 563.7L525.5 563.7L526.0 563.6L526.5 563.6L527.0 563.5L527.5 563.5L528.0 563.4L528.5 563.3L529.0 563.3L529.5 563.2L530.0 563.1L530.5 563.0L531.0 562.9L531.5 562.7L532.0 562.6L532.5 562.4L533.0 562.2L533.5 562.0L534.0 561.7L534.5 561.4L535.0 561.0L535.5 560.5L536.0 559.8L536.5 559.0L537.0 557.9L537.5 556.5L538.0 554.8L538.5 552.6L539.0 550.0L539.5 547.0L540.0 543.4L540.5 539.5L541.0 535.2L541.5 530.8L542.0 526.5L542.5 522.6L543.0 519.6L543.5 517.8L544.0 517.5L544.5 518.8L545.0 521.5L545.5 525.2L546.0 529.4L546.5 533.8L547.0 538.1L547.5 542.2L548.0 545.9L548.5 549.1L549.0 551.8L549.5 554.1L550.0 556.0L550.5 557.5L551.0 558.6L551.5 559.6L552.0 560.3L552.5 560.8L553.0 561.3L553.5 561.6L554.0 561.9L554.5 562.2L555.0 562.4L555.5 562.5L556.0 562.7L556.5 562.8L557.0 562.9L557.5 563.0L558.0 563.1L558.5 563.2L559.0 563.3L559.5 563.4L560.0 563.4L560.5 563.5L561.0 563.6L561.5 563.6L562.0 563.7L562.5 563.7L563.0 563.7L563.5 563.8L564.0 563.8L564.5 563.8L565.0 563.9L565.5 563.9L566.0 563.9L566.5 563.9L567.0 564.0L567.5 564.0L568.0 564.0L568.5 564.0L569.0 564.1L569.5 564.1L570.0 564.1L570.5 564.1L571.0 564.1L571.5 564.1L572.0 564.1L572.5 564.2L573.0 564.2L573.5 564.2L574.0 564.2L574.5 564.2L575.0 564.2L575.5 564.2L576.0 564.2L576.5 564.2L577.0 564.2L577.5 564.2L578.0 564.3" fill="none" stroke="#ff0000" stroke-width="1.6"/>
<path d="M132.6 564.3L133.1 564.3L133.6 564.3L134.1 564.3L134.6 564.3L135.1 564.3L135.6 564.3L136.1 564.3L136.6 564.3L137.1 564.3L137.6 564.3L138.1 564.3L138.6 564.2L139.1 564.2L139.6 564.2L140.1 564.2L140.6 564.2L141.1 564.2L141.6 564.2L142.1 564.1L142.6 564.1L143.1 564.1L143.6 564.1L144.1 564.1L144.6 564.0L145.1 564.0L145.6 564.0L146.1 564.0L146.6 563.9L147.1 563.9L147.6 563.8L148.1 563.8L148.6 563.7L149.1 563.7L149.6 563.6L150.1 563.6L150.6 563.5L151.1 563.4L151.6 563.3L152.1 563.2L152.6 563.0L153.1 562.8L153.6 562.5L154.1 562.0L154.6 561.2L155.1 559.8L155.6 557.2L156.1 552.8L156.6 545.5L157.1 534.0L157.6 516.7L158.0 492.1L158.1 459.0L158.2 417.3L158.2 368.0L158.8 313.9L159.2 259.5L159.8 210.4L160.2 172.7L160.3 151.8L160.3 150.7L160.3 169.7L160.8 205.9L161.2 254.1L161.8 308.2L162.2 362.6L162.8 412.5L163.2 455.1L163.8 489.1L164.2 514.5L164.8 532.5L165.2 544.6L165.8 552.2L166.2 556.8L166.8 559.6L167.2 561.1L167.8 562.0L168.2 562.5L168.8 562.8L169.2 563.0L169.8 563.2L170.2 563.3L170.8 563.4L171.2 563.5L171.8 563.6L172.2 563.6L172.8 563.7L173.2 563.7L173.8 563.8L174.2 563.8L174.8 563.9L175.2 563.9L175.8 564.0L176.2 564.0L176.8 564.0L177.2 564.0L177.8 564.1L178.2 564.1L178.8 564.1L179.2 564.1L179.8 564.1L180.2 564.2L180.8 564.2L181.2 564.2L181.8 564.2L182.2 564.2L182.8 564.2L183.2 564.2L183.8 564.3L184.2 564.3L184.8 564.3L185.2 564.3L185.8 564.3L186.2 564.3L186.8 564.3L187.2 564.3L187.8 564.3L188.2 564.3L188.8 564.3L189.2 564.3" fill="none" stroke="#ffa500" stroke-width="0.95"/>
<path d="M167.6 564.3L168.1 564.3L168.6 564.3L169.1 564.3L169.6 564.3L170.1 564.3L170.6 564.3L171.1 564.3L171.6 564.2L172.1 564.2L172.6 564.2L173.1 564.2L173.6 564.2L174.1 564.1L174.6 564.1L175.1 564.1L175.6 564.0L176.1 564.0L176.6 563.9L177.1 563.9L177.6 563.8L178.1 563.7L178.6 563.6L179.1 563.5L179.6 563.3L180.1 563.1L180.6 562.5L181.1 561.4L181.6 558.7L182.1 552.8L182.6 541.0L183.1 519.4L183.4 483.8L183.3 431.6L183.2 364.4L183.8 289.6L184.2 220.7L184.4 173.7L184.4 161.5L184.4 187.7L184.8 244.6L185.2 317.5L185.8 390.8L186.2 453.0L186.8 498.9L187.2 528.9L187.8 546.4L188.2 555.5L188.8 559.9L189.2 561.9L189.8 562.8L190.2 563.2L190.8 563.4L191.2 563.5L191.8 563.7L192.2 563.8L192.8 563.8L193.2 563.9L193.8 563.9L194.2 564.0L194.8 564.0L195.2 564.1L195.8 564.1L196.2 564.1L196.8 564.2L197.2 564.2L197.8 564.2L198.2 564.2L198.8 564.2L199.2 564.3L199.8 564.3L200.2 564.3L200.8 564.3L201.2 564.3L201.8 564.3L202.2 564.3" fill="none" stroke="#ffa500" stroke-width="0.95"/>
<path d="M198.2 564.3L198.8 564.3L199.2 564.3L199.8 564.3L200.2 564.3L200.8 564.3L201.2 564.3L201.8 564.3L202.2 564.3L202.8 564.3L203.2 564.3L203.8 564.3L204.2 564.3L204.8 564.2L205.2 564.2L205.8 564.2L206.2 564.2L206.8 564.2L207.2 564.2L207.8 564.2L208.2 564.2L208.8 564.1L209.2 564.1L209.8 564.1L210.2 564.1L210.8 564.1L211.2 564.0L211.8 564.0L212.2 564.0L212.8 563.9L213.2 563.9L213.8 563.9L214.2 563.8L214.8 563.8L215.2 563.8L215.8 563.7L216.2 563.6L216.8 563.6L217.2 563.5L217.8 563.4L218.2 563.3L218.8 563.2L219.2 563.1L219.8 563.0L220.2 562.8L220.8 562.6L221.2 562.4L221.8 562.2L222.2 561.8L222.8 561.4L223.2 560.8L223.8 560.1L224.2 559.1L224.8 557.9L225.2 556.3L225.8 554.3L226.2 551.9L226.8 549.2L227.2 546.0L227.8 542.7L228.2 539.4L228.8 536.5L229.0 534.5L229.0 533.8L229.0 534.6L229.2 536.7L229.8 539.6L230.2 542.9L230.8 546.2L231.2 549.3L231.8 552.1L232.2 554.5L232.8 556.4L233.2 558.0L233.8 559.2L234.2 560.1L234.8 560.9L235.2 561.4L235.8 561.8L236.2 562.2L236.8 562.4L237.2 562.7L237.8 562.8L238.2 563.0L238.8 563.1L239.2 563.2L239.8 563.3L240.2 563.4L240.8 563.5L241.2 563.6L241.8 563.6L242.2 563.7L242.8 563.8L243.2 563.8L243.8 563.8L244.2 563.9L244.8 563.9L245.2 564.0L245.8 564.0L246.2 564.0L246.8 564.0L247.2 564.1L247.8 564.1L248.2 564.1L248.8 564.1L249.2 564.1L249.8 564.2L250.2 564.2L250.8 564.2L251.2 564.2L251.8 564.2L252.2 564.2L252.8 564.2L253.2 564.2L253.8 564.3L254.2 564.3L254.8 564.3L255.2 564.3L255.8 564.3L256.2 564.3L256.8 564.3L257.2 564.3L257.8 564.3L258.2 564.3L258.8 564.3L259.2 564.3L259.8 564.3" fill="none" stroke="#ffa500" stroke-width="0.95"/>
<path d="M213.2 564.3L213.8 564.3L214.2 564.3L214.8 564.3L215.2 564.3L215.8 564.3L216.2 564.3L216.8 564.3L217.2 564.3L217.8 564.3L218.2 564.2L218.8 564.2L219.2 564.2L219.8 564.2L220.2 564.2L220.8 564.2L221.2 564.2L221.8 564.1L222.2 564.1L222.8 564.1L223.2 564.1L223.8 564.1L224.2 564.0L224.8 564.0L225.2 564.0L225.8 563.9L226.2 563.9L226.8 563.8L227.2 563.8L227.8 563.7L228.2 563.7L228.8 563.6L229.2 563.5L229.8 563.4L230.2 563.3L230.8 563.2L231.2 563.1L231.8 562.9L232.2 562.7L232.8 562.4L233.2 562.0L233.8 561.5L234.2 560.8L234.8 559.8L235.2 558.6L235.8 557.0L236.2 554.9L236.8 552.5L237.2 549.6L237.8 546.5L238.2 543.2L238.8 540.0L239.2 537.4L239.3 535.8L239.3 535.6L239.3 536.7L239.8 539.0L240.2 542.0L240.8 545.3L241.2 548.6L241.8 551.5L242.2 554.1L242.8 556.3L243.2 558.1L243.8 559.4L244.2 560.5L244.8 561.2L245.2 561.8L245.8 562.3L246.2 562.6L246.8 562.8L247.2 563.0L247.8 563.2L248.2 563.3L248.8 563.4L249.2 563.5L249.8 563.6L250.2 563.7L250.8 563.7L251.2 563.8L251.8 563.8L252.2 563.9L252.8 563.9L253.2 564.0L253.8 564.0L254.2 564.0L254.8 564.0L255.2 564.1L255.8 564.1L256.2 564.1L256.8 564.1L257.2 564.2L257.8 564.2L258.2 564.2L258.8 564.2L259.2 564.2L259.8 564.2L260.2 564.2L260.8 564.3L261.2 564.3L261.8 564.3L262.2 564.3L262.8 564.3L263.2 564.3L263.8 564.3L264.2 564.3L264.8 564.3L265.2 564.3L265.8 564.3" fill="none" stroke="#ffa500" stroke-width="0.95"/>
<path d="M236.2 564.3L236.8 564.3L237.2 564.3L237.8 564.3L238.2 564.3L238.8 564.3L239.2 564.3L239.8 564.3L240.2 564.2L240.8 564.2L241.2 564.2L241.8 564.2L242.2 564.2L242.8 564.2L243.2 564.1L243.8 564.1L244.2 564.1L244.8 564.0L245.2 564.0L245.8 564.0L246.2 563.9L246.8 563.9L247.2 563.8L247.8 563.7L248.2 563.7L248.8 563.6L249.2 563.5L249.8 563.3L250.2 563.2L250.8 563.0L251.2 562.8L251.8 562.5L252.2 562.1L252.8 561.7L253.2 560.9L253.8 559.5L254.2 556.6L254.8 550.3L255.2 537.6L255.8 515.4L256.2 482.5L256.8 443.0L257.1 407.1L257.1 389.8L257.1 400.4L257.2 432.9L257.8 472.7L258.2 507.9L258.8 532.9L259.2 547.8L259.8 555.4L260.2 559.0L260.8 560.6L261.2 561.5L261.8 562.0L262.2 562.4L262.8 562.7L263.2 563.0L263.8 563.1L264.2 563.3L264.8 563.4L265.2 563.6L265.8 563.6L266.2 563.7L266.8 563.8L267.2 563.9L267.8 563.9L268.2 564.0L268.8 564.0L269.2 564.0L269.8 564.1L270.2 564.1L270.8 564.1L271.2 564.2L271.8 564.2L272.2 564.2L272.8 564.2L273.2 564.2L273.8 564.2L274.2 564.3L274.8 564.3L275.2 564.3L275.8 564.3L276.2 564.3L276.8 564.3L277.2 564.3L277.8 564.3L278.2 564.3" fill="none" stroke="#ffa500" stroke-width="0.95"/>
<path d="M254.2 564.3L254.8 564.3L255.2 564.3L255.8 564.3L256.2 564.3L256.8 564.3L257.2 564.3L257.8 564.3L258.2 564.3L258.8 564.3L259.2 564.3L259.8 564.3L260.2 564.3L260.8 564.3L261.2 564.3L261.8 564.2L262.2 564.2L262.8 564.2L263.2 564.2L263.8 564.2L264.2 564.2L264.8 564.2L265.2 564.2L265.8 564.2L266.2 564.2L266.8 564.1L267.2 564.1L267.8 564.1L268.2 564.1L268.8 564.1L269.2 564.1L269.8 564.0L270.2 564.0L270.8 564.0L271.2 564.0L271.8 564.0L272.2 563.9L272.8 563.9L273.2 563.9L273.8 563.8L274.2 563.8L274.8 563.8L275.2 563.7L275.8 563.7L276.2 563.6L276.8 563.6L277.2 563.5L277.8 563.5L278.2 563.4L278.8 563.3L279.2 563.2L279.8 563.1L280.2 563.0L280.8 562.9L281.2 562.8L281.8 562.6L282.2 562.4L282.8 562.2L283.2 562.0L283.8 561.7L284.2 561.3L284.8 560.9L285.2 560.3L285.8 559.6L286.2 558.7L286.8 557.5L287.2 556.2L287.8 554.5L288.2 552.5L288.8 550.2L289.2 547.6L289.8 544.7L290.2 541.6L290.8 538.4L291.2 535.5L291.8 533.1L292.0 531.4L292.0 530.9L292.0 531.5L292.2 533.2L292.8 535.6L293.2 538.6L293.8 541.7L294.2 544.8L294.8 547.7L295.2 550.3L295.8 552.6L296.2 554.6L296.8 556.2L297.2 557.6L297.8 558.7L298.2 559.6L298.8 560.3L299.2 560.9L299.8 561.3L300.2 561.7L300.8 562.0L301.2 562.2L301.8 562.4L302.2 562.6L302.8 562.8L303.2 562.9L303.8 563.0L304.2 563.1L304.8 563.2L305.2 563.3L305.8 563.4L306.2 563.5L306.8 563.5L307.2 563.6L307.8 563.6L308.2 563.7L308.8 563.7L309.2 563.8L309.8 563.8L310.2 563.8L310.8 563.9L311.2 563.9L311.8 563.9L312.2 564.0L312.8 564.0L313.2 564.0L313.8 564.0L314.2 564.0L314.8 564.1L315.2 564.1L315.8 564.1L316.2 564.1L316.8 564.1L317.2 564.1L317.8 564.2L318.2 564.2L318.8 564.2L319.2 564.2L319.8 564.2L320.2 564.2L320.8 564.2L321.2 564.2L321.8 564.2L322.2 564.2L322.8 564.3L323.2 564.3L323.8 564.3L324.2 564.3L324.8 564.3L325.2 564.3L325.8 564.3L326.2 564.3L326.8 564.3L327.2 564.3L327.8 564.3L328.2 564.3L328.8 564.3L329.2 564.3L329.8 564.3" fill="none" stroke="#ffa500" stroke-width="0.95"/>
<path d="M307.2 564.3L307.8 564.3L308.2 564.3L308.8 564.3L309.2 564.3L309.8 564.3L310.2 564.3L310.8 564.3L311.2 564.3L311.8 564.3L312.2 564.3L312.8 564.3L313.2 564.3L313.8 564.3L314.2 564.3L314.8 564.3L315.2 564.3L315.8 564.2L316.2 564.2L316.8 564.2L317.2 564.2L317.8 564.2L318.2 564.2L318.8 564.2L319.2 564.2L319.8 564.2L320.2 564.2L320.8 564.2L321.2 564.1L321.8 564.1L322.2 564.1L322.8 564.1L323.2 564.1L323.8 564.1L324.2 564.1L324.8 564.0L325.2 564.0L325.8 564.0L326.2 564.0L326.8 564.0L327.2 563.9L327.8 563.9L328.2 563.9L328.8 563.9L329.2 563.8L329.8 563.8L330.2 563.8L330.8 563.7L331.2 563.7L331.8 563.7L332.2 563.6L332.8 563.6L333.2 563.5L333.8 563.5L334.2 563.4L334.8 563.3L335.2 563.3L335.8 563.2L336.2 563.1L336.8 563.0L337.2 562.9L337.8 562.8L338.2 562.7L338.8 562.5L339.2 562.3L339.8 562.2L340.2 561.9L340.8 561.7L341.2 561.4L341.8 561.0L342.2 560.5L342.8 559.9L343.2 559.2L343.8 558.4L344.2 557.3L344.8 555.9L345.2 554.3L345.8 552.3L346.2 550.1L346.8 547.4L347.2 544.5L347.8 541.3L348.2 537.9L348.8 534.5L349.2 531.3L349.8 528.5L350.1 526.6L350.1 525.8L350.1 526.3L350.2 527.8L350.8 530.3L351.2 533.4L351.8 536.8L352.2 540.2L352.8 543.5L353.2 546.6L353.8 549.3L354.2 551.7L354.8 553.7L355.2 555.4L355.8 556.9L356.2 558.0L356.8 559.0L357.2 559.7L357.8 560.4L358.2 560.8L358.8 561.3L359.2 561.6L359.8 561.9L360.2 562.1L360.8 562.3L361.2 562.5L361.8 562.6L362.2 562.8L362.8 562.9L363.2 563.0L363.8 563.1L364.2 563.2L364.8 563.2L365.2 563.3L365.8 563.4L366.2 563.4L366.8 563.5L367.2 563.6L367.8 563.6L368.2 563.7L368.8 563.7L369.2 563.7L369.8 563.8L370.2 563.8L370.8 563.8L371.2 563.9L371.8 563.9L372.2 563.9L372.8 563.9L373.2 564.0L373.8 564.0L374.2 564.0L374.8 564.0L375.2 564.0L375.8 564.1L376.2 564.1L376.8 564.1L377.2 564.1L377.8 564.1L378.2 564.1L378.8 564.1L379.2 564.2L379.8 564.2L380.2 564.2L380.8 564.2L381.2 564.2L381.8 564.2L382.2 564.2L382.8 564.2L383.2 564.2L383.8 564.2L384.2 564.2L384.8 564.3L385.2 564.3L385.8 564.3L386.2 564.3L386.8 564.3L387.2 564.3L387.8 564.3L388.2 564.3L388.8 564.3L389.2 564.3L389.8 564.3L390.2 564.3L390.8 564.3L391.2 564.3L391.8 564.3L392.2 564.3L392.8 564.3" fill="none" stroke="#ffa500" stroke-width="0.95"/>
<path d="M399.2 564.3L399.8 564.3L400.2 564.3L400.8 564.3L401.2 564.3L401.8 564.3L402.2 564.3L402.8 564.3L403.2 564.3L403.8 564.3L404.2 564.3L404.8 564.3L405.2 564.3L405.8 564.3L406.2 564.2L406.8 564.2L407.2 564.2L407.8 564.2L408.2 564.2L408.8 564.2L409.2 564.2L409.8 564.2L410.2 564.2L410.8 564.2L411.2 564.1L411.8 564.1L412.2 564.1L412.8 564.1L413.2 564.1L413.8 564.1L414.2 564.0L414.8 564.0L415.2 564.0L415.8 564.0L416.2 564.0L416.8 563.9L417.2 563.9L417.8 563.9L418.2 563.8L418.8 563.8L419.2 563.8L419.8 563.7L420.2 563.7L420.8 563.6L421.2 563.6L421.8 563.5L422.2 563.4L422.8 563.4L423.2 563.3L423.8 563.2L424.2 563.0L424.8 562.8L425.2 562.6L425.8 562.4L426.2 562.1L426.8 561.7L427.2 561.2L427.8 560.6L428.2 559.9L428.8 559.1L429.2 558.1L429.8 556.9L430.2 555.6L430.8 554.0L431.2 552.3L431.8 550.5L432.2 548.5L432.8 546.4L433.2 544.2L433.8 542.0L434.2 539.9L434.8 538.0L435.2 536.3L435.8 535.0L436.1 534.2L436.1 533.8L436.1 534.0L436.2 534.7L436.8 535.9L437.2 537.5L437.8 539.3L438.2 541.4L438.8 543.6L439.2 545.7L439.8 547.9L440.2 549.9L440.8 551.8L441.2 553.6L441.8 555.1L442.2 556.5L442.8 557.8L443.2 558.8L443.8 559.7L444.2 560.4L444.8 561.0L445.2 561.6L445.8 562.0L446.2 562.3L446.8 562.6L447.2 562.8L447.8 563.0L448.2 563.1L448.8 563.2L449.2 563.3L449.8 563.4L450.2 563.5L450.8 563.6L451.2 563.6L451.8 563.7L452.2 563.7L452.8 563.8L453.2 563.8L453.8 563.8L454.2 563.9L454.8 563.9L455.2 563.9L455.8 564.0L456.2 564.0L456.8 564.0L457.2 564.0L457.8 564.0L458.2 564.1L458.8 564.1L459.2 564.1L459.8 564.1L460.2 564.1L460.8 564.1L461.2 564.2L461.8 564.2L462.2 564.2L462.8 564.2L463.2 564.2L463.8 564.2L464.2 564.2L464.8 564.2L465.2 564.2L465.8 564.2L466.2 564.3L466.8 564.3L467.2 564.3L467.8 564.3L468.2 564.3L468.8 564.3L469.2 564.3L469.8 564.3L470.2 564.3L470.8 564.3L471.2 564.3L471.8 564.3L472.2 564.3L472.8 564.3L473.2 564.3" fill="none" stroke="#ffa500" stroke-width="0.95"/>
<path d="M423.2 564.3L423.8 564.3L424.2 564.3L424.8 564.3L425.2 564.3L425.8 564.3L426.2 564.3L426.8 564.3L427.2 564.3L427.8 564.3L428.2 564.3L428.8 564.3L429.2 564.3L429.8 564.2L430.2 564.2L430.8 564.2L431.2 564.2L431.8 564.2L432.2 564.2L432.8 564.2L433.2 564.2L433.8 564.2L434.2 564.1L434.8 564.1L435.2 564.1L435.8 564.1L436.2 564.1L436.8 564.0L437.2 564.0L437.8 564.0L438.2 564.0L438.8 563.9L439.2 563.9L439.8 563.9L440.2 563.8L440.8 563.8L441.2 563.8L441.8 563.7L442.2 563.7L442.8 563.6L443.2 563.5L443.8 563.5L444.2 563.4L444.8 563.3L445.2 563.2L445.8 563.1L446.2 563.0L446.8 562.8L447.2 562.7L447.8 562.5L448.2 562.2L448.8 562.0L449.2 561.6L449.8 561.2L450.2 560.5L450.8 559.6L451.2 558.2L451.8 556.2L452.2 553.1L452.8 548.6L453.2 542.3L453.8 534.1L454.2 523.9L454.8 511.8L455.2 498.8L455.8 485.8L456.2 474.6L456.4 467.1L456.4 464.9L456.4 468.6L456.8 477.3L457.2 489.2L457.8 502.4L458.2 515.2L458.8 526.8L459.2 536.6L459.8 544.2L460.2 549.9L460.8 554.0L461.2 556.8L461.8 558.7L462.2 559.9L462.8 560.7L463.2 561.3L463.8 561.7L464.2 562.0L464.8 562.3L465.2 562.5L465.8 562.7L466.2 562.9L466.8 563.0L467.2 563.1L467.8 563.2L468.2 563.3L468.8 563.4L469.2 563.5L469.8 563.6L470.2 563.6L470.8 563.7L471.2 563.7L471.8 563.8L472.2 563.8L472.8 563.8L473.2 563.9L473.8 563.9L474.2 563.9L474.8 564.0L475.2 564.0L475.8 564.0L476.2 564.0L476.8 564.1L477.2 564.1L477.8 564.1L478.2 564.1L478.8 564.1L479.2 564.2L479.8 564.2L480.2 564.2L480.8 564.2L481.2 564.2L481.8 564.2L482.2 564.2L482.8 564.2L483.2 564.2L483.8 564.3L484.2 564.3L484.8 564.3L485.2 564.3L485.8 564.3L486.2 564.3L486.8 564.3L487.2 564.3L487.8 564.3L488.2 564.3L488.8 564.3L489.2 564.3L489.8 564.3" fill="none" stroke="#ffa500" stroke-width="0.95"/>
<path d="M502.8 564.3L503.2 564.3L503.8 564.3L504.2 564.3L504.8 564.3L505.2 564.3L505.8 564.3L506.2 564.3L506.8 564.3L507.2 564.3L507.8 564.3L508.2 564.3L508.8 564.3L509.2 564.3L509.8 564.3L510.2 564.3L510.8 564.2L511.2 564.2L511.8 564.2L512.2 564.2L512.8 564.2L513.2 564.2L513.8 564.2L514.2 564.2L514.8 564.2L515.2 564.2L515.8 564.2L516.2 564.1L516.8 564.1L517.2 564.1L517.8 564.1L518.2 564.1L518.8 564.1L519.2 564.1L519.8 564.0L520.2 564.0L520.8 564.0L521.2 564.0L521.8 564.0L522.2 563.9L522.8 563.9L523.2 563.9L523.8 563.8L524.2 563.8L524.8 563.8L525.2 563.7L525.8 563.7L526.2 563.7L526.8 563.6L527.2 563.6L527.8 563.5L528.2 563.5L528.8 563.4L529.2 563.3L529.8 563.3L530.2 563.2L530.8 563.1L531.2 563.0L531.8 562.9L532.2 562.7L532.8 562.6L533.2 562.4L533.8 562.2L534.2 562.0L534.8 561.7L535.2 561.4L535.8 561.0L536.2 560.5L536.8 559.8L537.2 559.0L537.8 557.9L538.2 556.5L538.8 554.8L539.2 552.6L539.8 550.0L540.2 547.0L540.8 543.4L541.2 539.5L541.8 535.2L542.2 530.8L542.8 526.5L543.2 522.6L543.8 519.6L543.8 517.8L543.8 517.5L543.8 518.8L544.2 521.5L544.8 525.2L545.2 529.4L545.8 533.8L546.2 538.1L546.8 542.2L547.2 545.9L547.8 549.1L548.2 551.8L548.8 554.1L549.2 556.0L549.8 557.5L550.2 558.6L550.8 559.6L551.2 560.3L551.8 560.8L552.2 561.3L552.8 561.6L553.2 561.9L553.8 562.2L554.2 562.4L554.8 562.5L555.2 562.7L555.8 562.8L556.2 562.9L556.8 563.0L557.2 563.1L557.8 563.2L558.2 563.3L558.8 563.4L559.2 563.4L559.8 563.5L560.2 563.6L560.8 563.6L561.2 563.7L561.8 563.7L562.2 563.7L562.8 563.8L563.2 563.8L563.8 563.8L564.2 563.9L564.8 563.9L565.2 563.9L565.8 563.9L566.2 564.0L566.8 564.0L567.2 564.0L567.8 564.0L568.2 564.1L568.8 564.1L569.2 564.1L569.8 564.1L570.2 564.1L570.8 564.1L571.2 564.1L571.8 564.2L572.2 564.2L572.8 564.2L573.2 564.2L573.8 564.2L574.2 564.2L574.8 564.2L575.2 564.2L575.8 564.2L576.2 564.2L576.8 564.2L577.2 564.3L577.8 564.3L578.2 564.3L578.8 564.3L579.2 564.3L579.8 564.3L580.2 564.3L580.8 564.3L581.2 564.3L581.8 564.3L582.2 564.3L582.8 564.3L583.2 564.3L583.8 564.3L584.2 564.3L584.8 564.3" fill="none" stroke="#ffa500" stroke-width="0.95"/>
<path d="M0.0 564.5L0.5 564.5L1.0 564.5L1.5 564.5L2.0 564.5L2.5 564.5L3.0 564.5L3.5 564.5L4.0 564.5L4.5 564.5L5.0 564.5L5.5 564.5L6.0 564.5L6.5 564.5L7.0 564.5L7.5 564.5L8.0 564.5L8.5 564.5L9.0 564.5L9.5 564.5L10.0 564.5L10.5 564.5L11.0 564.5L11.5 564.5L12.0 564.5L12.5 564.5L13.0 564.5L13.5 564.5L14.0 564.5L14.5 564.5L15.0 564.5L15.5 564.5L16.0 564.5L16.5 564.5L17.0 564.5L17.5 564.5L18.0 564.5L18.5 564.5L19.0 564.5L19.5 564.5L20.0 564.5L20.5 564.5L21.0 564.5L21.5 564.5L22.0 564.5L22.5 564.5L23.0 564.5L23.5 564.5L24.0 564.5L24.5 564.5L25.0 564.5L25.5 564.5L26.0 564.5L26.5 564.5L27.0 564.5L27.5 564.5L28.0 564.5L28.5 564.5L29.0 564.5L29.5 564.5L30.0 564.5L30.5 564.5L31.0 564.5L31.5 564.5L32.0 564.5L32.5 564.5L33.0 564.5L33.5 564.5L34.0 564.5L34.5 564.5L35.0 564.5L35.5 564.5L36.0 564.5L36.5 564.5L37.0 564.5L37.5 564.5L38.0 564.5L38.5 564.5L39.0 564.5L39.5 564.5L40.0 564.4L40.5 564.4L41.0 564.4L41.5 564.4L42.0 564.4L42.5 564.4L43.0 564.4L43.5 564.4L44.0 564.4L44.5 564.4L45.0 564.4L45.5 564.4L46.0 564.4L46.5 564.4L47.0 564.4L47.5 564.4L48.0 564.4L48.5 564.4L49.0 564.4L49.5 564.4L50.0 564.4L50.5 564.4L51.0 564.4L51.5 564.4L52.0 564.4L52.5 564.4L53.0 564.4L53.5 564.4L54.0 564.4L54.5 564.4L55.0 564.4L55.5 564.4L56.0 564.4L56.5 564.4L57.0 564.4L57.5 564.4L58.0 564.4L58.5 564.4L59.0 564.4L59.5 564.4L60.0 564.4L60.5 564.4L61.0 564.4L61.5 564.4L62.0 564.4L62.5 564.4L63.0 564.4L63.5 564.4L64.0 564.4L64.5 564.4L65.0 564.4L65.5 564.4L66.0 564.4L66.5 564.4L67.0 564.4L67.5 564.4L68.0 564.4L68.5 564.4L69.0 564.4L69.5 564.4L70.0 564.4L70.5 564.4L71.0 564.4L71.5 564.4L72.0 564.4L72.5 564.4L73.0 564.4L73.5 564.4L74.0 564.4L74.5 564.4L75.0 564.4L75.5 564.4L76.0 564.4L76.5 564.4L77.0 564.4L77.5 564.4L78.0 564.4L78.5 564.4L79.0 564.4L79.5 564.4L80.0 564.4L80.5 564.4L81.0 564.4L81.5 564.4L82.0 564.4L82.5 564.4L83.0 564.4L83.5 564.4L84.0 564.4L84.5 564.4L85.0 564.4L85.5 564.4L86.0 564.4L86.5 564.4L87.0 564.4L87.5 564.4L88.0 564.4L88.5 564.4L89.0 564.4L89.5 564.4L90.0 564.4L90.5 564.4L91.0 564.4L91.5 564.4L92.0 564.4L92.5 564.4L93.0 564.4L93.5 564.4L94.0 564.4L94.5 564.4L95.0 564.4L95.5 564.4L96.0 564.4L96.5 564.4L97.0 564.4L97.5 564.4L98.0 564.4L98.5 564.4L99.0 564.4L99.5 564.4L100.0 564.4L100.5 564.4L101.0 564.3L101.5 564.3L102.0 564.3L102.5 564.3L103.0 564.3L103.5 564.3L104.0 564.3L104.5 564.3L105.0 564.3L105.5 564.3L106.0 564.3L106.5 564.3L107.0 564.3L107.5 564.3L108.0 564.3L108.5 564.3L109.0 564.3L109.5 564.3L110.0 564.3L110.5 564.3L111.0 564.3L111.5 564.3L112.0 564.3L112.5 564.3L113.0 564.3L113.5 564.3L114.0 564.3L114.5 564.3L115.0 564.3L115.5 564.3L116.0 564.3L116.5 564.3L117.0 564.2L117.5 564.2L118.0 564.2L118.5 564.2L119.0 564.2L119.5 564.2L120.0 564.2L120.5 564.2L121.0 564.2L121.5 564.2L122.0 564.2L122.5 564.2L123.0 564.2L123.5 564.2L124.0 564.2L124.5 564.1L125.0 564.1L125.5 564.1L126.0 564.1L126.5 564.1L127.0 564.1L127.5 564.1L128.0 564.1L128.5 564.1L129.0 564.1L129.5 564.0L130.0 564.0L130.5 564.0L131.0 564.0L131.5 564.0L132.0 564.0L132.5 563.9L133.0 563.9L133.5 563.9L134.0 563.9L134.5 563.9L135.0 563.8L135.5 563.8L136.0 563.8L136.5 563.7L137.0 563.7L137.5 563.7L138.0 563.6L138.5 563.6L139.0 563.6L139.5 563.5L140.0 563.5L140.5 563.4L141.0 563.3L141.5 563.3L142.0 563.2L142.5 563.1L143.0 563.0L143.5 562.9L144.0 562.8L144.5 562.7L145.0 562.6L145.5 562.4L146.0 562.2L146.5 562.0L147.0 561.8L147.5 561.5L148.0 561.1L148.5 560.7L149.0 560.2L149.5 559.6L150.0 558.8L150.5 557.9L151.0 556.5L151.5 554.7L152.0 552.0L152.5 547.9L153.0 541.6L153.5 531.8L154.0 517.4L154.5 498.7L155.0 480.0L155.5 466.1L156.0 452.1L156.5 430.0L157.0 396.5L157.5 352.8L158.0 302.4L158.5 249.9L159.0 200.4L159.5 159.6L160.0 135.1L160.5 134.4L161.0 158.2L161.5 199.4L162.0 250.3L162.5 305.4L163.0 360.1L163.5 410.2L164.0 452.9L164.5 487.0L165.0 512.5L165.5 530.6L166.0 542.6L166.5 550.3L167.0 554.9L167.5 557.6L168.0 559.2L168.5 560.0L169.0 560.5L169.5 560.7L170.0 560.8L170.5 560.9L171.0 560.8L171.5 560.8L172.0 560.7L172.5 560.5L173.0 560.3L173.5 560.0L174.0 559.7L174.5 559.2L175.0 558.7L175.5 557.9L176.0 557.0L176.5 555.7L177.0 553.9L177.5 551.3L178.0 547.4L178.5 541.1L179.0 531.0L179.5 515.1L180.0 491.5L180.5 460.6L181.0 427.8L181.5 397.4L182.0 359.7L182.5 302.7L183.0 227.3L183.5 148.3L184.0 107.5L184.5 107.5L185.0 117.0L185.5 195.3L186.0 288.6L186.5 375.6L187.0 444.9L187.5 493.8L188.0 525.0L188.5 543.0L189.0 552.6L189.5 557.2L190.0 559.5L190.5 560.5L191.0 561.1L191.5 561.5L192.0 561.8L192.5 562.0L193.0 562.2L193.5 562.3L194.0 562.5L194.5 562.6L195.0 562.7L195.5 562.8L196.0 562.9L196.5 563.0L197.0 563.0L197.5 563.1L198.0 563.2L198.5 563.2L199.0 563.2L199.5 563.3L200.0 563.3L200.5 563.3L201.0 563.4L201.5 563.4L202.0 563.4L202.5 563.4L203.0 563.5L203.5 563.5L204.0 563.5L204.5 563.5L205.0 563.5L205.5 563.5L206.0 563.5L206.5 563.5L207.0 563.5L207.5 563.5L208.0 563.5L208.5 563.5L209.0 563.5L209.5 563.5L210.0 563.4L210.5 563.4L211.0 563.4L211.5 563.4L212.0 563.3L212.5 563.3L213.0 563.3L213.5 563.2L214.0 563.2L214.5 563.2L215.0 563.1L215.5 563.0L216.0 563.0L216.5 562.9L217.0 562.8L217.5 562.7L218.0 562.6L218.5 562.5L219.0 562.3L219.5 562.2L220.0 562.0L220.5 561.7L221.0 561.5L221.5 561.1L222.0 560.6L222.5 560.1L223.0 559.3L223.5 558.3L224.0 557.0L224.5 555.4L225.0 553.4L225.5 551.0L226.0 548.2L226.5 545.0L227.0 541.6L227.5 538.2L228.0 535.3L228.5 533.2L229.0 532.4L229.5 533.1L230.0 535.0L230.5 537.8L231.0 540.9L231.5 544.0L232.0 546.9L232.5 549.2L233.0 551.1L233.5 552.3L234.0 552.9L234.5 552.9L235.0 552.2L235.5 550.9L236.0 549.0L236.5 546.6L237.0 543.7L237.5 540.7L238.0 537.7L238.5 535.3L239.0 533.8L239.5 533.7L240.0 535.0L240.5 537.4L241.0 540.4L241.5 543.8L242.0 547.1L242.5 550.1L243.0 552.7L243.5 554.9L244.0 556.7L244.5 558.0L245.0 559.1L245.5 559.8L246.0 560.4L246.5 560.8L247.0 561.1L247.5 561.3L248.0 561.4L248.5 561.5L249.0 561.5L249.5 561.5L250.0 561.4L250.5 561.3L251.0 561.1L251.5 560.8L252.0 560.4L252.5 559.7L253.0 558.3L253.5 555.5L254.0 549.2L254.5 536.5L255.0 514.4L255.5 481.5L256.0 442.0L256.5 406.2L257.0 388.9L257.5 399.5L258.0 432.0L258.5 471.9L259.0 507.1L259.5 532.1L260.0 547.0L260.5 554.6L261.0 558.2L261.5 559.9L262.0 560.7L262.5 561.3L263.0 561.7L263.5 562.0L264.0 562.2L264.5 562.4L265.0 562.5L265.5 562.7L266.0 562.8L266.5 562.9L267.0 563.0L267.5 563.0L268.0 563.1L268.5 563.1L269.0 563.1L269.5 563.2L270.0 563.2L270.5 563.2L271.0 563.2L271.5 563.2L272.0 563.2L272.5 563.2L273.0 563.2L273.5 563.2L274.0 563.2L274.5 563.2L275.0 563.1L275.5 563.1L276.0 563.1L276.5 563.0L277.0 563.0L277.5 562.9L278.0 562.9L278.5 562.8L279.0 562.7L279.5 562.6L280.0 562.5L280.5 562.4L281.0 562.2L281.5 562.1L282.0 561.9L282.5 561.6L283.0 561.3L283.5 561.0L284.0 560.5L284.5 559.9L285.0 559.2L285.5 558.3L286.0 557.2L286.5 555.8L287.0 554.2L287.5 552.2L288.0 549.9L288.5 547.2L289.0 544.3L289.5 541.3L290.0 538.1L290.5 535.2L291.0 532.8L291.5 531.1L292.0 530.6L292.5 531.2L293.0 532.9L293.5 535.3L294.0 538.3L294.5 541.4L295.0 544.5L295.5 547.4L296.0 550.0L296.5 552.3L297.0 554.3L297.5 556.0L298.0 557.3L298.5 558.4L299.0 559.3L299.5 560.0L300.0 560.6L300.5 561.1L301.0 561.4L301.5 561.7L302.0 562.0L302.5 562.2L303.0 562.3L303.5 562.5L304.0 562.6L304.5 562.7L305.0 562.8L305.5 562.9L306.0 563.0L306.5 563.1L307.0 563.1L307.5 563.2L308.0 563.3L308.5 563.3L309.0 563.4L309.5 563.4L310.0 563.4L310.5 563.5L311.0 563.5L311.5 563.5L312.0 563.6L312.5 563.6L313.0 563.6L313.5 563.6L314.0 563.6L314.5 563.7L315.0 563.7L315.5 563.7L316.0 563.7L316.5 563.7L317.0 563.7L317.5 563.7L318.0 563.7L318.5 563.7L319.0 563.7L319.5 563.7L320.0 563.7L320.5 563.7L321.0 563.7L321.5 563.7L322.0 563.7L322.5 563.7L323.0 563.7L323.5 563.7L324.0 563.7L324.5 563.7L325.0 563.7L325.5 563.7L326.0 563.6L326.5 563.6L327.0 563.6L327.5 563.6L328.0 563.6L328.5 563.6L329.0 563.5L329.5 563.5L330.0 563.5L330.5 563.4L331.0 563.4L331.5 563.4L332.0 563.3L332.5 563.3L333.0 563.2L333.5 563.2L334.0 563.1L334.5 563.0L335.0 563.0L335.5 562.9L336.0 562.8L336.5 562.7L337.0 562.6L337.5 562.4L338.0 562.3L338.5 562.1L339.0 561.9L339.5 561.7L340.0 561.5L340.5 561.2L341.0 560.8L341.5 560.3L342.0 559.7L342.5 559.0L343.0 558.2L343.5 557.1L344.0 555.7L344.5 554.1L345.0 552.2L345.5 549.9L346.0 547.3L346.5 544.3L347.0 541.1L347.5 537.7L348.0 534.3L348.5 531.1L349.0 528.4L349.5 526.5L350.0 525.7L350.5 526.1L351.0 527.7L351.5 530.2L352.0 533.3L352.5 536.6L353.0 540.1L353.5 543.3L354.0 546.4L354.5 549.1L355.0 551.5L355.5 553.5L356.0 555.3L356.5 556.7L357.0 557.9L357.5 558.8L358.0 559.6L358.5 560.2L359.0 560.7L359.5 561.1L360.0 561.4L360.5 561.7L361.0 561.9L361.5 562.1L362.0 562.3L362.5 562.5L363.0 562.6L363.5 562.7L364.0 562.8L364.5 562.9L365.0 563.0L365.5 563.1L366.0 563.2L366.5 563.2L367.0 563.3L367.5 563.3L368.0 563.4L368.5 563.4L369.0 563.5L369.5 563.5L370.0 563.6L370.5 563.6L371.0 563.6L371.5 563.7L372.0 563.7L372.5 563.7L373.0 563.7L373.5 563.8L374.0 563.8L374.5 563.8L375.0 563.8L375.5 563.9L376.0 563.9L376.5 563.9L377.0 563.9L377.5 563.9L378.0 563.9L378.5 563.9L379.0 564.0L379.5 564.0L380.0 564.0L380.5 564.0L381.0 564.0L381.5 564.0L382.0 564.0L382.5 564.0L383.0 564.0L383.5 564.0L384.0 564.0L384.5 564.0L385.0 564.0L385.5 564.1L386.0 564.1L386.5 564.1L387.0 564.1L387.5 564.1L388.0 564.1L388.5 564.1L389.0 564.1L389.5 564.1L390.0 564.1L390.5 564.1L391.0 564.1L391.5 564.1L392.0 564.1L392.5 564.1L393.0 564.1L393.5 564.1L394.0 564.1L394.5 564.1L395.0 564.1L395.5 564.1L396.0 564.1L396.5 564.1L397.0 564.1L397.5 564.1L398.0 564.1L398.5 564.1L399.0 564.1L399.5 564.1L400.0 564.1L400.5 564.1L401.0 564.1L401.5 564.1L402.0 564.1L402.5 564.1L403.0 564.0L403.5 564.0L404.0 564.0L404.5 564.0L405.0 564.0L405.5 564.0L406.0 564.0L406.5 564.0L407.0 564.0L407.5 564.0L408.0 564.0L408.5 564.0L409.0 563.9L409.5 563.9L410.0 563.9L410.5 563.9L411.0 563.9L411.5 563.9L412.0 563.9L412.5 563.8L413.0 563.8L413.5 563.8L414.0 563.8L414.5 563.8L415.0 563.7L415.5 563.7L416.0 563.7L416.5 563.7L417.0 563.6L417.5 563.6L418.0 563.6L418.5 563.5L419.0 563.5L419.5 563.4L420.0 563.4L420.5 563.3L421.0 563.2L421.5 563.2L422.0 563.1L422.5 563.0L423.0 562.9L423.5 562.7L424.0 562.6L424.5 562.3L425.0 562.1L425.5 561.8L426.0 561.4L426.5 560.9L427.0 560.3L427.5 559.6L428.0 558.7L428.5 557.7L429.0 556.6L429.5 555.2L430.0 553.7L430.5 552.0L431.0 550.1L431.5 548.1L432.0 545.9L432.5 543.8L433.0 541.6L433.5 539.5L434.0 537.5L434.5 535.8L435.0 534.5L435.5 533.6L436.0 533.3L436.5 533.4L437.0 534.1L437.5 535.3L438.0 536.8L438.5 538.7L439.0 540.7L439.5 542.8L440.0 544.9L440.5 547.0L441.0 549.0L441.5 550.9L442.0 552.6L442.5 554.1L443.0 555.4L443.5 556.5L444.0 557.5L444.5 558.3L445.0 558.9L445.5 559.4L446.0 559.8L446.5 560.0L447.0 560.2L447.5 560.2L448.0 560.2L448.5 560.0L449.0 559.7L449.5 559.2L450.0 558.4L450.5 557.1L451.0 555.1L451.5 552.0L452.0 547.6L452.5 541.4L453.0 533.2L453.5 523.0L454.0 511.0L454.5 498.0L455.0 485.1L455.5 473.9L456.0 466.4L456.5 464.3L457.0 468.0L457.5 476.7L458.0 488.6L458.5 501.8L459.0 514.7L459.5 526.3L460.0 536.1L460.5 543.7L461.0 549.5L461.5 553.6L462.0 556.4L462.5 558.2L463.0 559.5L463.5 560.3L464.0 560.9L464.5 561.3L465.0 561.7L465.5 561.9L466.0 562.2L466.5 562.4L467.0 562.5L467.5 562.7L468.0 562.8L468.5 562.9L469.0 563.0L469.5 563.1L470.0 563.2L470.5 563.3L471.0 563.3L471.5 563.4L472.0 563.4L472.5 563.5L473.0 563.5L473.5 563.6L474.0 563.6L474.5 563.7L475.0 563.7L475.5 563.7L476.0 563.8L476.5 563.8L477.0 563.8L477.5 563.8L478.0 563.8L478.5 563.9L479.0 563.9L479.5 563.9L480.0 563.9L480.5 563.9L481.0 564.0L481.5 564.0L482.0 564.0L482.5 564.0L483.0 564.0L483.5 564.0L484.0 564.0L484.5 564.0L485.0 564.0L485.5 564.1L486.0 564.1L486.5 564.1L487.0 564.1L487.5 564.1L488.0 564.1L488.5 564.1L489.0 564.1L489.5 564.1L490.0 564.1L490.5 564.1L491.0 564.1L491.5 564.1L492.0 564.1L492.5 564.1L493.0 564.1L493.5 564.1L494.0 564.1L494.5 564.1L495.0 564.1L495.5 564.2L496.0 564.2L496.5 564.2L497.0 564.2L497.5 564.2L498.0 564.2L498.5 564.2L499.0 564.2L499.5 564.2L500.0 564.2L500.5 564.2L501.0 564.2L501.5 564.2L502.0 564.2L502.5 564.2L503.0 564.2L503.5 564.2L504.0 564.2L504.5 564.2L505.0 564.1L505.5 564.1L506.0 564.1L506.5 564.1L507.0 564.1L507.5 564.1L508.0 564.1L508.5 564.1L509.0 564.1L509.5 564.1L510.0 564.1L510.5 564.1L511.0 564.1L511.5 564.1L512.0 564.1L512.5 564.1L513.0 564.1L513.5 564.1L514.0 564.1L514.5 564.0L515.0 564.0L515.5 564.0L516.0 564.0L516.5 564.0L517.0 564.0L517.5 564.0L518.0 564.0L518.5 563.9L519.0 563.9L519.5 563.9L520.0 563.9L520.5 563.9L521.0 563.9L521.5 563.8L522.0 563.8L522.5 563.8L523.0 563.8L523.5 563.7L524.0 563.7L524.5 563.7L525.0 563.6L525.5 563.6L526.0 563.5L526.5 563.5L527.0 563.4L527.5 563.4L528.0 563.3L528.5 563.2L529.0 563.2L529.5 563.1L530.0 563.0L530.5 562.9L531.0 562.8L531.5 562.6L532.0 562.5L532.5 562.3L533.0 562.1L533.5 561.9L534.0 561.7L534.5 561.3L535.0 560.9L535.5 560.4L536.0 559.7L536.5 558.9L537.0 557.8L537.5 556.4L538.0 554.7L538.5 552.5L539.0 550.0L539.5 546.9L540.0 543.4L540.5 539.4L541.0 535.2L541.5 530.7L542.0 526.4L542.5 522.5L543.0 519.5L543.5 517.7L544.0 517.4L544.5 518.8L545.0 521.4L545.5 525.1L546.0 529.3L546.5 533.7L547.0 538.1L547.5 542.1L548.0 545.8L548.5 549.0L549.0 551.8L549.5 554.1L550.0 555.9L550.5 557.4L551.0 558.6L551.5 559.5L552.0 560.2L552.5 560.8L553.0 561.2L553.5 561.6L554.0 561.9L554.5 562.1L555.0 562.3L555.5 562.5L556.0 562.6L556.5 562.8L557.0 562.9L557.5 563.0L558.0 563.1L558.5 563.2L559.0 563.3L559.5 563.3L560.0 563.4L560.5 563.4L561.0 563.5L561.5 563.6L562.0 563.6L562.5 563.6L563.0 563.7L563.5 563.7L564.0 563.8L564.5 563.8L565.0 563.8L565.5 563.9L566.0 563.9L566.5 563.9L567.0 563.9L567.5 563.9L568.0 564.0L568.5 564.0L569.0 564.0L569.5 564.0L570.0 564.0L570.5 564.1L571.0 564.1L571.5 564.1L572.0 564.1L572.5 564.1L573.0 564.1L573.5 564.1L574.0 564.1L574.5 564.2L575.0 564.2L575.5 564.2L576.0 564.2L576.5 564.2L577.0 564.2L577.5 564.2L578.0 564.2L578.5 564.2L579.0 564.2L579.5 564.2L580.0 564.2L580.5 564.2L581.0 564.3L581.5 564.3L582.0 564.3L582.5 564.3L583.0 564.3L583.5 564.3L584.0 564.3L584.5 564.3L585.0 564.3L585.5 564.3L586.0 564.3L586.5 564.3L587.0 564.3L587.5 564.3L588.0 564.3L588.5 564.3L589.0 564.3L589.5 564.3L590.0 564.3L590.5 564.3L591.0 564.3L591.5 564.3L592.0 564.3L592.5 564.3L593.0 564.3L593.5 564.3L594.0 564.4L594.5 564.4L595.0 564.4L595.5 564.4L596.0 564.4L596.5 564.4L597.0 564.4L597.5 564.4L598.0 564.4L598.5 564.4L599.0 564.4L599.5 564.4L600.0 564.4L600.5 564.4L601.0 564.4L601.5 564.4L602.0 564.4L602.5 564.4L603.0 564.4L603.5 564.4L604.0 564.4L604.5 564.4L605.0 564.4L605.5 564.4L606.0 564.4L606.5 564.4L607.0 564.4L607.5 564.4L608.0 564.4L608.5 564.4L609.0 564.4L609.5 564.4L610.0 564.4L610.5 564.4L611.0 564.4L611.5 564.4L612.0 564.4L612.5 564.4L613.0 564.4L613.5 564.4L614.0 564.4L614.5 564.4L615.0 564.4L615.5 564.4L616.0 564.4L616.5 564.4L617.0 564.4L617.5 564.4L618.0 564.4L618.5 564.4L619.0 564.4L619.5 564.4L620.0 564.4L620.5 564.4L621.0 564.4L621.5 564.4L622.0 564.4L622.5 564.4L623.0 564.4L623.5 564.4L624.0 564.4L624.5 564.4L625.0 564.4L625.5 564.4L626.0 564.4L626.5 564.4L627.0 564.4L627.5 564.4L628.0 564.4L628.5 564.4L629.0 564.4L629.5 564.4L630.0 564.4L630.5 564.4L631.0 564.4L631.5 564.4L632.0 564.4L632.5 564.4L633.0 564.4L633.5 564.4L634.0 564.4L634.5 564.4L635.0 564.4L635.5 564.4L636.0 564.4L636.5 564.4L637.0 564.4L637.5 564.4L638.0 564.4L638.5 564.4L639.0 564.4L639.5 564.4L640.0 564.4L640.5 564.4L641.0 564.4L641.5 564.4L642.0 564.4L642.5 564.4L643.0 564.4L643.5 564.4L644.0 564.5L644.5 564.5L645.0 564.5L645.5 564.5L646.0 564.5L646.5 564.5L647.0 564.5L647.5 564.5L648.0 564.5L648.5 564.5L649.0 564.5L649.5 564.5L650.0 564.5L650.5 564.5L651.0 564.5L651.5 564.5L652.0 564.5L652.5 564.5L653.0 564.5L653.5 564.5L654.0 564.5L654.5 564.5L655.0 564.5L655.5 564.5L656.0 564.5L656.5 564.5L657.0 564.5L657.5 564.5L658.0 564.5L658.5 564.5L659.0 564.5L659.5 564.5L660.0 564.5L660.5 564.5L661.0 564.5L661.5 564.5L662.0 564.5L662.5 564.5L663.0 564.5L663.5 564.5L664.0 564.5L664.5 564.5L665.0 564.5L665.5 564.5L666.0 564.5L666.5 564.5L667.0 564.5L667.5 564.5L668.0 564.5L668.5 564.5L669.0 564.5L669.5 564.5L670.0 564.5L670.5 564.5L671.0 564.5L671.5 564.5L672.0 564.5L672.5 564.5L673.0 564.5L673.5 564.5L674.0 564.5L674.5 564.5L675.0 564.5L675.5 564.5L676.0 564.5L676.5 564.5L677.0 564.5L677.5 564.5L678.0 564.5L678.5 564.5L679.0 564.5L679.5 564.5L680.0 564.5L680.5 564.5L681.0 564.5L681.5 564.5L682.0 564.5L682.5 564.5L683.0 564.5L683.5 564.5L684.0 564.5L684.5 564.5L685.0 564.5L685.5 564.5L686.0 564.5L686.5 564.5L687.0 564.5L687.5 564.5L688.0 564.5L688.5 564.5L689.0 564.5L689.5 564.5L690.0 564.5L690.5 564.5L691.0 564.5L691.5 564.5L692.0 564.5L692.5 564.5L693.0 564.5L693.5 564.5L694.0 564.5L694.5 564.5L695.0 564.5L695.5 564.5L696.0 564.5L696.5 564.5L697.0 564.5L697.5 564.5L698.0 564.5L698.5 564.5L699.0 564.5L699.5 564.5L700.0 564.5L700.5 564.5L701.0 564.5L701.5 564.5L702.0 564.5L702.5 564.5L703.0 564.5L703.5 564.5L704.0 564.5L704.5 564.5L705.0 564.5L705.5 564.5L706.0 564.5L706.5 564.5L707.0 564.5L707.5 564.5L708.0 564.5L708.5 564.5L709.0 564.5L709.5 564.5L710.0 564.5L710.5 564.5L711.0 564.5L711.5 564.5L712.0 564.5L712.5 564.5L713.0 564.5L713.5 564.5L714.0 564.5L714.5 564.5L715.0 564.5L715.5 564.5L716.0 564.5L716.5 564.5L717.0 564.5L717.5 564.5L718.0 564.5L718.5 564.5L719.0 564.5L719.5 564.5L720.0 564.5L720.5 564.5L721.0 564.5L721.5 564.5L722.0 564.5L722.5 564.5L723.0 564.5L723.5 564.5L724.0 564.5L724.5 564.5L725.0 564.5L725.5 564.5L726.0 564.5L726.5 564.5L727.0 564.5L727.5 564.5L728.0 564.5L728.5 564.5L729.0 564.5L729.5 564.5L730.0 564.5L730.5 564.5L731.0 564.5L731.5 564.5L732.0 564.5L732.5 564.5L733.0 564.5L733.5 564.5L734.0 564.5L734.5 564.5L735.0 564.5L735.5 564.5L736.0 564.5L736.5 564.5L737.0 564.5L737.5 564.5L738.0 564.5L738.5 564.5L739.0 564.5L739.5 564.5L740.0 564.5L740.5 564.5L741.0 564.5L741.5 564.5L742.0 564.5L742.5 564.5L743.0 564.5L743.5 564.5L744.0 564.5L744.5 564.5L745.0 564.5L745.5 564.5L746.0 564.5L746.5 564.5L747.0 564.5L747.5 564.5L748.0 564.5L748.5 564.5L749.0 564.5L749.5 564.5L750.0 564.5L750.5 564.5L751.0 564.5L751.5 564.5L752.0 564.5L752.5 564.5L753.0 564.5L753.5 564.5L754.0 564.5L754.5 564.5L755.0 564.5L755.5 564.5L756.0 564.5L756.5 564.5L757.0 564.5L757.5 564.5L758.0 564.5L758.5 564.5L759.0 564.5L759.5 564.5L760.0 564.5L760.5 564.5L761.0 564.5L761.5 564.5L762.0 564.5L762.5 564.5L763.0 564.5L763.5 564.5L764.0 564.5L764.5 564.5L765.0 564.5L765.5 564.5L766.0 564.5L766.5 564.5L767.0 564.5L767.5 564.5L768.0 564.5L768.5 564.5L769.0 564.5L769.5 564.5L770.0 564.5L770.5 564.5L771.0 564.5L771.5 564.5L772.0 564.5L772.5 564.5L773.0 564.5L773.5 564.5L774.0 564.5L774.5 564.5L775.0 564.5L775.5 564.5L776.0 564.5L776.5 564.5L777.0 564.5L777.5 564.5L778.0 564.5L778.5 564.5L779.0 564.5L779.5 564.5L780.0 564.5L780.5 564.5L781.0 564.5L781.5 564.5L782.0 564.5L782.5 564.5L783.0 564.5L783.5 564.5L784.0 564.5L784.5 564.5L785.0 564.5L785.5 564.5L786.0 564.5L786.5 564.5L787.0 564.5L787.5 564.5L788.0 564.5L788.5 564.5L789.0 564.5L789.5 564.5L790.0 564.5L790.5 564.5L791.0 564.5L791.5 564.5L792.0 564.5L792.5 564.5L793.0 564.5L793.5 564.5L794.0 564.5L794.5 564.5L795.0 564.5L795.5 564.5L796.0 564.5L796.5 564.5L797.0 564.5L797.5 564.5L798.0 564.5L798.5 564.5L799.0 564.5L799.5 564.5L800.0 564.5L800.5 564.5L801.0 564.5L801.5 564.5L802.0 564.5L802.5 564.5L803.0 564.5L803.5 564.5L804.0 564.5L804.5 564.5L805.0 564.5L805.5 564.5L806.0 564.5L806.5 564.5L807.0 564.5L807.5 564.5L808.0 564.5L808.5 564.5L809.0 564.5L809.5 564.5L810.0 564.5L810.5 564.5L811.0 564.5L811.5 564.5L812.0 564.5L812.5 564.5L813.0 564.5L813.5 564.5L814.0 564.5L814.5 564.5L815.0 564.5L815.5 564.5L816.0 564.5L816.5 564.5L817.0 564.5L817.5 564.5L818.0 564.5L818.5 564.5L819.0 564.5L819.5 564.5L820.0 564.5L820.5 564.5L821.0 564.5L821.5 564.5L822.0 564.5L822.5 564.5L823.0 564.5L823.5 564.5L824.0 564.5L824.5 564.5L825.0 564.5L825.5 564.5L826.0 564.5L826.5 564.5L827.0 564.5L827.5 564.5L828.0 564.5L828.5 564.5L829.0 564.5L829.5 564.5L830.0 564.5L830.5 564.5L831.0 564.5L831.5 564.5L832.0 564.5L832.5 564.5L833.0 564.5L833.5 564.5L834.0 564.5L834.5 564.5L835.0 564.5L835.5 564.5L836.0 564.5L836.5 564.5L837.0 564.5L837.5 564.5L838.0 564.5L838.5 564.5L839.0 564.5L839.5 564.5L840.0 564.5L840.5 564.5L841.0 564.5L841.5 564.5L842.0 564.5L842.5 564.5L843.0 564.5L843.5 564.5L844.0 564.5L844.5 564.5L845.0 564.5L845.5 564.5L846.0 564.5L846.5 564.5L847.0 564.5L847.5 564.5L848.0 564.5L848.5 564.5L849.0 564.5L849.5 564.5L850.0 564.5L850.5 564.5L851.0 564.5L851.5 564.5L852.0 564.5L852.5 564.5L853.0 564.5L853.5 564.5L854.0 564.5L854.5 564.5L855.0 564.5L855.5 564.5L856.0 564.5L856.5 564.5L857.0 564.5L857.5 564.5L858.0 564.5L858.5 564.5L859.0 564.5L859.5 564.5L860.0 564.5L860.5 564.5L861.0 564.5L861.5 564.5L862.0 564.5L862.5 564.5L863.0 564.5L863.5 564.5L864.0 564.5L864.5 564.5L865.0 564.5L865.5 564.5L866.0 564.5L866.5 564.5L867.0 564.5L867.5 564.5L868.0 564.5L868.5 564.5L869.0 564.5L869.5 564.5L870.0 564.5L870.5 564.5L871.0 564.5L871.5 564.5L872.0 564.5L872.5 564.5L873.0 564.5L873.5 564.5L874.0 564.5L874.5 564.5L875.0 564.5L875.5 564.5L876.0 564.5L876.5 564.5L877.0 564.5L877.5 564.5L878.0 564.5L878.5 564.5L879.0 564.5L879.5 564.5L880.0 564.5L880.5 564.5L881.0 564.5L881.5 564.5L882.0 564.5L882.5 564.5L883.0 564.5L883.5 564.5L884.0 564.5L884.5 564.5L885.0 564.5L885.5 564.5L886.0 564.5L886.5 564.5L887.0 564.5L887.5 564.5L888.0 564.5L888.5 564.5L889.0 564.5L889.5 564.5L890.0 564.5L890.5 564.5L891.0 564.5L891.5 564.5L892.0 564.5L892.5 564.5L893.0 564.5L893.5 564.5L894.0 564.5L894.5 564.5L895.0 564.5L895.5 564.5L896.0 564.5L896.5 564.5L897.0 564.5L897.5 564.5L898.0 564.5L898.5 564.5L899.0 564.5L899.5 564.5L900.0 564.5L900.5 564.5L901.0 564.5L901.5 564.5L902.0 564.5L902.5 564.5L903.0 564.5L903.5 564.5L904.0 564.5L904.5 564.5L905.0 564.5L905.5 564.5L906.0 564.5L906.5 564.5L907.0 564.5L907.5 564.5L908.0 564.5L908.5 564.5L909.0 564.5L909.5 564.5L910.0 564.5L910.5 564.5L911.0 564.5L911.5 564.5L912.0 564.5L912.5 564.5L913.0 564.5L913.5 564.5L914.0 564.5L914.5 564.5L915.0 564.5L915.5 564.5L916.0 564.5L916.5 564.5L917.0 564.5L917.5 564.5L918.0 564.5L918.5 564.5L919.0 564.5L919.5 564.5L920.0 564.5L920.5 564.5L921.0 564.5L921.5 564.5L922.0 564.5L922.5 564.5L923.0 564.5L923.5 564.5L924.0 564.5L924.5 564.5L925.0 564.5L925.5 564.5L926.0 564.5L926.5 564.5L927.0 564.5L927.5 564.5L928.0 564.5L928.5 564.5L929.0 564.5L929.5 564.5L930.0 564.5L930.5 564.5L931.0 564.5L931.5 564.5L932.0 564.5L932.5 564.5L933.0 564.5L933.5 564.5L934.0 564.5L934.5 564.5L935.0 564.5L935.5 564.5L936.0 564.5L936.5 564.5L937.0 564.5L937.5 564.5L938.0 564.5L938.5 564.5L939.0 564.5L939.5 564.5L940.0 564.5L940.5 564.5L941.0 564.5L941.5 564.5L942.0 564.5L942.5 564.5L943.0 564.5L943.5 564.5L944.0 564.5L944.5 564.5L945.0 564.5L945.5 564.5L946.0 564.5L946.5 564.5L947.0 564.5L947.5 564.5L948.0 564.5L948.5 564.5L949.0 564.5L949.5 564.5L950.0 564.5L950.5 564.5L951.0 564.5L951.5 564.5L952.0 564.5L952.5 564.5L953.0 564.5L953.5 564.5L954.0 564.5L954.5 564.5L955.0 564.5L955.5 564.5L956.0 564.5L956.5 564.5L957.0 564.5L957.5 564.5L958.0 564.5L958.5 564.5L959.0 564.5L959.5 564.5L960.0 564.5L960.5 564.5L961.0 564.5L961.5 564.5L962.0 564.5L962.5 564.5L963.0 564.5L963.5 564.5L964.0 564.5L964.5 564.5L965.0 564.5L965.5 564.5L966.0 564.5L966.5 564.5L967.0 564.5L967.5 564.5L968.0 564.5L968.5 564.5L969.0 564.5L969.5 564.5L970.0 564.5L970.5 564.5L971.0 564.5L971.5 564.5L972.0 564.5L972.5 564.5L973.0 564.5L973.5 564.5L974.0 564.5L974.5 564.5L975.0 564.5L975.5 564.5L976.0 564.5L976.5 564.5L977.0 564.5L977.5 564.5L978.0 564.5L978.5 564.5L979.0 564.5L979.5 564.5L980.0 564.5L980.5 564.5L981.0 564.5L981.5 564.5L982.0 564.5L982.5 564.5L983.0 564.5L983.5 564.5L984.0 564.5L984.5 564.5L985.0 564.5L985.5 564.5L986.0 564.5L986.5 564.5L987.0 564.5L987.5 564.5L988.0 564.5L988.5 564.5L989.0 564.5L989.5 564.5L990.0 564.5L990.5 564.5L991.0 564.5L991.5 564.5L992.0 564.5L992.5 564.5L993.0 564.5L993.5 564.5L994.0 564.5L994.5 564.5L995.0 564.5L995.5 564.5L996.0 564.5L996.5 564.5L997.0 564.5L997.5 564.5L998.0 564.5L998.5 564.5L999.0 564.5L999.5 564.5L1000.0 564.5L1000.5 564.5L1001.0 564.5L1001.5 564.5L1002.0 564.5L1002.5 564.5L1003.0 564.5L1003.5 564.5L1004.0 564.5L1004.5 564.5L1005.0 564.5L1005.5 564.5L1006.0 564.5L1006.5 564.5L1007.0 564.5L1007.5 564.5L1008.0 564.5L1008.5 564.5L1009.0 564.5L1009.5 564.5L1010.0 564.5L1010.5 564.5L1011.0 564.5L1011.5 564.5L1012.0 564.5L1012.5 564.5L1013.0 564.5L1013.5 564.5L1014.0 564.5L1014.5 564.5L1015.0 564.5L1015.5 564.5L1016.0 564.5L1016.5 564.5L1017.0 564.5L1017.5 564.5L1018.0 564.5L1018.5 564.5L1019.0 564.5L1019.5 564.5L1020.0 564.5L1020.5 564.5L1021.0 564.5L1021.5 564.5L1022.0 564.5L1022.5 564.5L1023.0 564.5L1023.5 564.5L1024.0 564.5L1024.5 564.5L1025.0 564.5L1025.5 564.5L1026.0 564.5L1026.5 564.5L1027.0 564.5L1027.5 564.5L1028.0 564.5L1028.5 564.5L1029.0 564.5L1029.5 564.5L1030.0 564.5L1030.5 564.5L1031.0 564.5L1031.5 564.5L1032.0 564.5L1032.5 564.5L1033.0 564.5L1033.5 564.5L1034.0 564.5L1034.5 564.5L1035.0 564.5L1035.5 564.5L1036.0 564.5L1036.5 564.5L1037.0 564.5L1037.5 564.5L1038.0 564.5L1038.5 564.5L1039.0 564.5L1039.5 564.5L1040.0 564.5L1040.5 564.5L1041.0 564.5L1041.5 564.5L1042.0 564.5L1042.5 564.5L1043.0 564.5L1043.5 564.5L1044.0 564.5L1044.5 564.5L1045.0 564.5L1045.5 564.5L1046.0 564.5L1046.5 564.5L1047.0 564.5L1047.5 564.5L1048.0 564.5L1048.5 564.5L1049.0 564.5L1049.5 564.5L1050.0 564.5L1050.5 564.5L1051.0 564.5L1051.5 564.5L1052.0 564.5L1052.5 564.5L1053.0 564.5L1053.5 564.5L1054.0 564.5L1054.5 564.5L1055.0 564.5L1055.5 564.5L1056.0 564.5L1056.5 564.5L1057.0 564.5L1057.5 564.5L1058.0 564.5L1058.5 564.5L1059.0 564.5L1059.5 564.5L1060.0 564.5L1060.5 564.5L1061.0 564.5L1061.5 564.5L1062.0 564.5L1062.5 564.5L1063.0 564.5L1063.5 564.5L1064.0 564.5L1064.5 564.5L1065.0 564.5L1065.5 564.5L1066.0 564.5L1066.5 564.5L1067.0 564.5L1067.5 564.5L1068.0 564.5L1068.5 564.5L1069.0 564.5L1069.5 564.5L1070.0 564.5L1070.5 564.5L1071.0 564.5L1071.5 564.5L1072.0 564.5L1072.5 564.5L1073.0 564.5L1073.5 564.5L1074.0 564.5L1074.5 564.5L1075.0 564.5L1075.5 564.5L1076.0 564.5L1076.5 564.5L1077.0 564.5L1077.5 564.5L1078.0 564.5L1078.5 564.5L1079.0 564.5L1079.5 564.5L1080.0 564.5L1080.5 564.5L1081.0 564.5L1081.5 564.5L1082.0 564.5L1082.5 564.5L1083.0 564.5L1083.5 564.5L1084.0 564.5L1084.5 564.5L1085.0 564.5L1085.5 564.5L1086.0 564.5L1086.5 564.5L1087.0 564.5L1087.5 564.5L1088.0 564.5L1088.5 564.5L1089.0 564.5L1089.5 564.5L1090.0 564.5L1090.5 564.5L1091.0 564.5L1091.5 564.5L1092.0 564.5L1092.5 564.5L1093.0 564.5L1093.5 564.5L1094.0 564.5L1094.5 564.5L1095.0 564.5L1095.5 564.5L1096.0 564.5L1096.5 564.5L1097.0 564.5L1097.5 564.5L1098.0 564.5L1098.5 564.5L1099.0 564.5L1099.5 564.5L1100.0 564.5L1100.5 564.5L1101.0 564.5L1101.5 564.5L1102.0 564.5L1102.5 564.5L1103.0 564.5L1103.5 564.5L1104.0 564.5L1104.5 564.5L1105.0 564.5L1105.5 564.5L1106.0 564.5L1106.5 564.5L1107.0 564.5L1107.5 564.5L1108.0 564.5L1108.5 564.5L1109.0 564.5L1109.5 564.5L1110.0 564.5L1110.5 564.5L1111.0 564.5L1111.5 564.5L1112.0 564.5L1112.5 564.5L1113.0 564.5L1113.5 564.5L1114.0 564.5L1114.5 564.5L1115.0 564.5L1115.5 564.5L1116.0 564.5L1116.5 564.5L1117.0 564.5L1117.5 564.5L1118.0 564.5L1118.5 564.5L1119.0 564.5L1119.5 564.5L1120.0 564.5L1120.5 564.5L1121.0 564.5L1121.5 564.5L1122.0 564.5L1122.5 564.5L1123.0 564.5L1123.5 564.5L1124.0 564.5L1124.5 564.5L1125.0 564.5L1125.5 564.5L1126.0 564.5L1126.5 564.5L1127.0 564.5L1127.5 564.5L1128.0 564.5" fill="none" stroke="#ffff00" stroke-width="1.1"/>
<rect x="158.8" y="146.5" width="3" height="3" fill="#fff" opacity=".95"/>
<rect x="182.8" y="158.0" width="3" height="3" fill="#fff" opacity=".95"/>
<rect x="255.5" y="387.5" width="3" height="3" fill="#fff" opacity=".95"/>
<rect x="454.9" y="463.0" width="3" height="3" fill="#fff" opacity=".95"/>
<rect x="153.5" y="508.5" width="3" height="3" fill="#fff" opacity=".95"/>
<rect x="179.5" y="471.0" width="3" height="3" fill="#fff" opacity=".95"/>
<rect x="227.0" y="531.5" width="3" height="3" fill="#fff" opacity=".95"/>
<rect x="290.3" y="529.0" width="3" height="3" fill="#fff" opacity=".95"/>
<rect x="348.5" y="524.0" width="3" height="3" fill="#fff" opacity=".95"/>
<rect x="434.5" y="531.5" width="3" height="3" fill="#fff" opacity=".95"/>
<rect x="542.1" y="516.0" width="3" height="3" fill="#fff" opacity=".95"/>
<circle cx="239.3" cy="534.5" r="2.6" fill="none" stroke="#e8e8e8" stroke-width="1"/>
<rect x="0" y="564" width="1128" height="1" fill="#ffffff"/>
<path d="M24.5 560V564M59.5 560V564M94.5 560V564M129.5 560V564M164.5 560V564M199.5 560V564M234.5 560V564M269.5 560V564M304.5 560V564M339.5 560V564M374.5 560V564M410.5 560V564M445.5 560V564M480.5 560V564M515.5 560V564M550.5 560V564M585.5 560V564M620.5 560V564M655.5 560V564M690.5 560V564M726.5 560V564M761.5 560V564M796.5 560V564M831.5 560V564M866.5 560V564M901.5 560V564M936.5 560V564M971.5 560V564M1006.5 560V564M1041.5 560V564M1076.5 560V564M1112.5 560V564" stroke="#fff" stroke-width="1" fill="none"/>
<text x="24.0" y="575" font-size="11.2" fill="#fff" stroke="#fff" stroke-width="0.3" text-anchor="middle">0</text>
<text x="199.5" y="575" font-size="11.2" fill="#fff" stroke="#fff" stroke-width="0.3" text-anchor="middle">10</text>
<text x="375.0" y="575" font-size="11.2" fill="#fff" stroke="#fff" stroke-width="0.3" text-anchor="middle">20</text>
<text x="550.5" y="575" font-size="11.2" fill="#fff" stroke="#fff" stroke-width="0.3" text-anchor="middle">30</text>
<text x="726.0" y="575" font-size="11.2" fill="#fff" stroke="#fff" stroke-width="0.3" text-anchor="middle">40</text>
<text x="901.5" y="575" font-size="11.2" fill="#fff" stroke="#fff" stroke-width="0.3" text-anchor="middle">50</text>
<text x="1077.0" y="575" font-size="11.2" fill="#fff" stroke="#fff" stroke-width="0.3" text-anchor="middle">60</text>
<rect x="0" y="479.9" width="4" height="1" fill="#fff"/>
<text x="4.5" y="483.6" font-size="11.5" fill="#fff" stroke="#fff" stroke-width="0.3">200</text>
<rect x="0" y="395.8" width="4" height="1" fill="#fff"/>
<text x="4.5" y="399.5" font-size="11.5" fill="#fff" stroke="#fff" stroke-width="0.3">400</text>
<rect x="0" y="311.7" width="4" height="1" fill="#fff"/>
<text x="4.5" y="315.4" font-size="11.5" fill="#fff" stroke="#fff" stroke-width="0.3">600</text>
<rect x="0" y="227.6" width="4" height="1" fill="#fff"/>
<text x="4.5" y="231.3" font-size="11.5" fill="#fff" stroke="#fff" stroke-width="0.3">800</text>
<rect x="0" y="143.5" width="4" height="1" fill="#fff"/>
<text x="4.5" y="147.2" font-size="11.5" fill="#fff" stroke="#fff" stroke-width="0.3">1000</text>
</svg>
<div class="abs sash" style="left:0;top:585px;width:1128px;height:9px;border-top:1px solid #fbfbfb"><div class="abs" style="left:0;top:4px;width:1128px;height:1px;background:#d4d4d2"></div></div>
<svg class="abs" style="left:0;top:594px" width="1128" height="113" viewBox="0 594 1128 113" font-family='"Liberation Sans", "DejaVu Sans", sans-serif'>
<rect x="0" y="594" width="1128" height="113" fill="#222222"/>
<rect x="0" y="650.4" width="1128" height="1.4" fill="#b4b4b4"/>
<path d="M50.3 594.0L50.7 591.5L51.0 595.4L51.3 595.6L51.7 586.3L52.0 588.6L52.4 593.6L52.7 593.0L53.1 591.4L53.4 589.7L53.7 590.8L54.1 599.5L54.4 593.8L54.8 594.1L55.1 590.2L55.4 592.1L55.8 602.9L56.1 597.1L56.5 589.8L56.8 597.7L57.1 598.3L57.5 594.8L57.8 584.9L58.2 600.6L58.5 599.2L58.9 596.9L59.2 596.5L59.5 595.9L59.9 598.0L60.2 593.4L60.6 600.9L60.9 601.5L61.2 607.2L61.6 605.6L61.9 602.2L62.3 597.4L62.6 604.1L62.9 599.4L63.3 603.7L63.6 599.0L64.0 608.7L64.3 601.3L64.7 606.2L65.0 604.4L65.3 605.8L65.7 600.4L66.0 600.3L66.4 604.4L66.7 600.9L67.0 597.6L67.4 602.2L67.7 601.8L68.1 602.9L68.4 599.6L68.7 598.8L69.1 606.6L69.4 608.9L69.8 603.8L70.1 601.5L70.4 606.5L70.8 601.6L71.1 604.8L71.5 604.8L71.8 602.9L72.2 602.5L72.5 608.7L72.8 605.9L73.2 613.6L73.5 608.4L73.9 610.4L74.2 611.0L74.5 603.3L74.9 604.7L75.2 605.1L75.6 604.3L75.9 609.4L76.2 610.0L76.6 611.2L76.9 610.7L77.3 607.9L77.6 608.7L78.0 612.8L78.3 606.7L78.6 608.2L79.0 606.6L79.3 604.2L79.7 613.3L80.0 607.8L80.3 611.1L80.7 608.1L81.0 610.5L81.4 604.6L81.7 611.9L82.0 605.6L82.4 612.0L82.7 609.8L83.1 612.1L83.4 615.0L83.8 611.2L84.1 612.7L84.4 618.1L84.8 615.3L85.1 614.0L85.5 616.9L85.8 615.7L86.1 614.6L86.5 611.5L86.8 612.1L87.2 616.9L87.5 610.8L87.8 617.2L88.2 614.5L88.5 613.4L88.9 620.8L89.2 619.5L89.6 617.9L89.9 616.3L90.2 617.7L90.6 615.4L90.9 622.3L91.3 624.2L91.6 621.3L91.9 617.2L92.3 616.4L92.6 619.4L93.0 619.2L93.3 618.7L93.6 620.9L94.0 620.6L94.3 619.7L94.7 623.2L95.0 625.0L95.3 615.8L95.7 617.7L96.0 619.4L96.4 619.3L96.7 617.5L97.1 622.4L97.4 622.2L97.7 620.2L98.1 624.0L98.4 618.4L98.8 620.8L99.1 624.0L99.4 622.0L99.8 623.7L100.1 623.6L100.5 623.1L100.8 621.4L101.1 621.7L101.5 625.5L101.8 621.9L102.2 624.7L102.5 628.3L102.9 623.1L103.2 628.3L103.5 625.5L103.9 622.0L104.2 621.8L104.6 625.6L104.9 626.2L105.2 625.6L105.6 630.1L105.9 620.5L106.3 627.7L106.6 622.4L106.9 626.3L107.3 623.2L107.6 621.6L108.0 624.7L108.3 621.2L108.7 628.4L109.0 625.1L109.3 629.1L109.7 630.1L110.0 628.4L110.4 629.6L110.7 629.6L111.0 626.7L111.4 629.2L111.7 629.3L112.1 629.0L112.4 630.4L112.7 624.3L113.1 625.7L113.4 625.7L113.8 631.0L114.1 630.4L114.4 629.9L114.8 629.8L115.1 631.0L115.5 631.1L115.8 627.6L116.2 629.1L116.5 628.2L116.8 627.9L117.2 632.3L117.5 633.3L117.9 627.4L118.2 629.8L118.5 628.0L118.9 631.9L119.2 630.1L119.6 632.2L119.9 633.6L120.2 632.9L120.6 637.0L120.9 631.7L121.3 633.1L121.6 631.9L122.0 628.5L122.3 630.5L122.6 633.0L123.0 629.4L123.3 632.4L123.7 629.2L124.0 634.2L124.3 631.2L124.7 629.9L125.0 633.2L125.4 633.7L125.7 631.9L126.0 635.0L126.4 636.9L126.7 631.8L127.1 631.1L127.4 631.0L127.8 633.2" fill="none" stroke="#8e8e8e" stroke-width="1"/>
<path d="M127.8 633.2L128.1 634.2L128.4 633.1L128.8 635.5L129.1 637.3L129.5 636.0L129.8 631.0L130.1 635.2L130.5 639.0L130.8 636.3L131.2 633.8L131.5 634.3L131.8 634.3L132.2 637.2L132.5 634.6L132.9 632.7L133.2 635.9L133.6 632.7L133.9 636.9L134.2 634.0L134.6 635.4L134.9 633.7L135.3 635.7L135.6 632.4L135.9 637.3L136.3 635.6L136.6 637.0L137.0 634.5L137.3 637.8L137.6 636.0L138.0 636.7L138.3 638.1L138.7 634.8L139.0 637.8L139.3 634.3L139.7 636.2L140.0 632.1L140.4 637.7L140.7 637.9L141.1 636.6L141.4 635.3L141.7 637.0L142.1 635.4L142.4 635.6L142.8 636.7L143.1 641.3L143.4 636.2L143.8 636.5L144.1 637.2L144.5 639.1L144.8 638.4L145.1 637.2L145.5 637.8L145.8 637.1L146.2 637.6L146.5 637.0L146.9 638.8L147.2 635.5L147.5 639.3L147.9 642.1L148.2 635.2L148.6 639.0L148.9 636.7L149.2 638.2L149.6 636.8L149.9 639.8L150.3 636.5L150.6 637.5L150.9 638.0L151.3 635.0L151.6 635.0L152.0 638.3L152.3 635.6L152.7 633.4L153.0 639.4L153.3 636.5L153.7 635.6L154.0 633.1L154.4 633.1L154.7 630.5L155.0 640.3L155.4 638.5L155.7 639.4L156.1 637.9L156.4 640.5L156.7 645.3L157.1 645.9L157.4 647.6L157.8 649.9L158.1 647.7L158.4 648.7L158.8 641.8L159.1 644.2L159.5 651.6L159.8 658.1L160.2 668.0L160.5 689.2L160.8 704.6L161.2 709.6L161.5 710.2L161.9 715.4L162.2 704.6L162.5 691.2L162.9 671.6L163.2 660.0L163.6 648.6L163.9 633.4L164.2 638.4L164.6 636.9L164.9 632.6L165.3 636.2L165.6 631.7L166.0 630.8L166.3 631.9L166.6 635.4L167.0 636.3L167.3 632.3L167.7 635.8L168.0 634.5L168.3 636.2L168.7 638.8L169.0 638.4L169.4 640.7L169.7 639.3L170.0 641.2L170.4 637.5L170.7 638.4L171.1 637.4L171.4 638.0L171.8 640.3L172.1 641.0L172.4 640.6L172.8 637.1L173.1 638.2L173.5 638.4L173.8 636.5L174.1 639.8L174.5 637.9L174.8 634.8L175.2 639.9L175.5 639.0L175.8 635.2L176.2 638.3L176.5 642.9L176.9 641.2L177.2 638.1L177.6 643.5L177.9 650.3L178.2 657.9L178.6 658.9L178.9 652.5L179.3 648.9L179.6 638.2L179.9 640.4L180.3 641.8L180.6 643.5L181.0 643.6L181.3 636.3L181.6 641.3L182.0 637.4L182.3 645.5L182.7 644.0L183.0 641.8L183.3 645.0L183.7 640.5L184.0 657.1L184.4 662.9L184.7 672.4L185.1 672.2L185.4 668.6L185.7 655.4L186.1 651.1L186.4 644.4L186.8 640.2L187.1 639.4L187.4 638.7L187.8 638.6L188.1 634.7L188.5 635.7L188.8 635.3L189.1 635.4L189.5 636.9L189.8 637.1L190.2 631.2L190.5 635.9L190.9 640.0L191.2 641.0L191.5 641.6L191.9 641.8L192.2 643.0L192.6 640.5L192.9 643.8L193.2 642.7L193.6 642.5L193.9 642.8L194.3 642.0L194.6 641.6L194.9 641.6L195.3 640.3L195.6 640.2L196.0 640.9L196.3 644.5L196.7 644.6L197.0 641.9L197.3 641.8L197.7 642.9L198.0 641.8L198.4 642.8L198.7 645.7L199.0 642.4L199.4 641.8L199.7 639.8L200.1 639.5L200.4 642.9L200.7 641.5L201.1 642.4L201.4 641.7L201.8 644.2L202.1 644.8L202.5 641.9L202.8 642.1L203.1 645.5L203.5 642.0L203.8 644.1L204.2 643.1L204.5 642.2L204.8 643.7L205.2 643.3L205.5 642.0L205.9 644.4L206.2 640.9L206.5 645.4L206.9 644.2L207.2 642.0L207.6 645.2L207.9 642.3L208.2 643.2L208.6 643.9L208.9 642.8L209.3 643.4L209.6 642.4L210.0 642.2L210.3 642.2L210.6 642.9L211.0 643.5L211.3 644.1L211.7 642.8L212.0 643.8L212.3 642.6L212.7 644.4L213.0 643.3L213.4 645.9L213.7 641.2L214.0 641.1L214.4 642.5L214.7 643.6L215.1 642.1L215.4 643.2L215.8 646.0L216.1 644.7L216.4 643.3L216.8 643.2L217.1 644.1L217.5 644.4L217.8 642.5L218.1 644.4L218.5 642.3L218.8 642.6L219.2 643.7L219.5 640.5L219.8 643.0L220.2 641.7L220.5 642.1L220.9 645.0L221.2 644.5L221.6 646.6L221.9 643.3L222.2 644.0L222.6 646.4L222.9 645.4L223.3 644.7L223.6 642.8L223.9 646.8L224.3 646.7L224.6 647.3L225.0 645.0L225.3 646.5L225.6 649.7L226.0 647.9L226.3 647.7L226.7 648.0L227.0 648.4L227.3 648.0L227.7 649.3L228.0 650.9L228.4 643.0L228.7 642.1L229.1 638.4L229.4 643.6L229.7 638.6L230.1 638.1L230.4 643.9L230.8 646.5L231.1 645.0L231.4 648.0L231.8 648.5L232.1 646.9L232.5 647.1L232.8 647.2L233.1 646.0L233.5 647.2L233.8 648.0L234.2 647.1L234.5 648.6L234.9 647.9L235.2 648.0L235.5 648.4L235.9 647.9L236.2 648.2L236.6 648.0L236.9 648.5L237.2 648.1L237.6 649.5L237.9 645.6L238.3 647.0L238.6 646.5L238.9 640.7L239.3 645.1L239.6 642.4L240.0 646.1L240.3 641.7L240.7 648.1L241.0 646.8L241.3 647.2L241.7 646.1L242.0 645.5L242.4 647.2L242.7 646.9L243.0 644.8L243.4 648.3L243.7 646.1L244.1 646.6L244.4 647.5L244.7 645.0L245.1 645.7L245.4 645.6L245.8 644.9L246.1 644.2L246.5 643.7L246.8 646.5L247.1 644.5L247.5 644.0L247.8 645.1L248.2 644.6L248.5 643.9L248.8 644.0L249.2 642.7L249.5 644.5L249.9 644.9L250.2 644.6L250.5 644.3L250.9 645.6L251.2 643.1L251.6 642.0L251.9 643.7L252.2 645.1L252.6 645.5L252.9 643.6L253.3 644.3L253.6 643.6L254.0 644.0L254.3 644.7L254.6 645.1L255.0 642.9L255.3 645.9L255.7 647.0L256.0 645.9L256.3 654.1L256.7 653.5L257.0 661.9L257.4 663.5L257.7 662.9L258.0 651.2L258.4 650.7L258.7 648.4L259.1 645.8L259.4 641.8L259.8 646.0L260.1 645.7L260.4 643.1L260.8 644.9L261.1 644.9L261.5 645.1L261.8 643.6L262.1 644.0L262.5 645.4L262.8 642.9L263.2 644.1L263.5 642.9L263.8 641.6L264.2 644.0L264.5 645.9L264.9 642.9L265.2 644.1L265.6 644.2L265.9 644.1L266.2 642.4L266.6 644.7L266.9 642.2L267.3 643.0L267.6 644.4L267.9 643.7L268.3 643.4L268.6 645.4L269.0 645.8L269.3 642.9L269.6 645.1L270.0 646.3L270.3 644.6L270.7 645.4L271.0 643.1L271.4 646.3L271.7 643.5L272.0 643.0L272.4 646.1L272.7 644.7L273.1 642.3L273.4 645.4L273.7 641.8L274.1 642.6L274.4 646.2L274.8 644.3L275.1 642.5L275.4 644.3L275.8 645.2L276.1 648.1L276.5 644.1L276.8 642.7L277.1 645.1L277.5 643.8L277.8 643.9L278.2 643.7L278.5 646.1L278.9 641.8L279.2 645.2L279.5 644.8L279.9 646.5L280.2 644.6L280.6 644.1L280.9 642.0L281.2 645.2L281.6 647.0L281.9 644.6L282.3 645.1L282.6 644.7L282.9 645.5L283.3 645.6L283.6 646.2L284.0 645.6L284.3 643.8L284.7 646.1L285.0 644.6L285.3 646.4L285.7 646.0L286.0 647.7L286.4 645.8L286.7 647.5L287.0 647.0L287.4 649.1L287.7 650.0L288.1 648.4L288.4 647.7L288.7 650.4L289.1 649.3L289.4 647.5L289.8 649.6L290.1 647.9L290.5 645.7L290.8 644.6L291.1 643.9L291.5 642.7L291.8 642.9L292.2 642.4L292.5 640.8L292.8 645.7L293.2 646.0L293.5 645.9L293.9 647.6L294.2 648.8L294.5 646.9L294.9 651.4L295.2 651.6L295.6 647.8L295.9 649.8L296.2 645.6L296.6 649.1L296.9 646.9L297.3 647.3L297.6 648.7L298.0 644.5L298.3 646.3L298.6 644.8L299.0 646.4L299.3 646.8L299.7 644.0L300.0 645.3L300.3 645.9L300.7 645.1L301.0 646.9L301.4 643.2L301.7 645.2L302.0 645.3L302.4 646.5L302.7 644.3L303.1 645.9L303.4 645.5L303.8 644.1L304.1 642.6L304.4 644.0L304.8 646.9L305.1 644.9L305.5 645.7L305.8 643.0L306.1 645.2L306.5 644.4L306.8 644.6L307.2 643.4L307.5 643.6L307.8 645.2L308.2 642.1L308.5 645.4L308.9 644.8L309.2 645.0L309.6 645.0L309.9 646.2L310.2 643.9L310.6 644.6L310.9 644.0L311.3 644.6L311.6 644.5L311.9 641.1L312.3 645.5L312.6 645.2L313.0 647.1L313.3 645.4L313.6 641.1L314.0 642.6L314.3 643.7L314.7 645.1L315.0 643.8L315.4 642.2L315.7 645.7L316.0 643.6L316.4 643.3L316.7 642.6L317.1 645.5L317.4 643.9L317.7 642.3L318.1 646.0L318.4 644.5L318.8 645.9L319.1 644.9L319.4 643.8L319.8 644.5L320.1 645.3L320.5 644.1L320.8 642.6L321.1 644.9L321.5 645.8L321.8 644.2L322.2 646.6L322.5 645.1L322.9 643.8L323.2 646.0L323.5 645.0L323.9 643.0L324.2 644.9L324.6 642.5L324.9 644.0L325.2 646.5L325.6 645.6L325.9 643.7L326.3 643.4L326.6 644.2L326.9 643.3L327.3 644.3L327.6 646.8L328.0 643.7L328.3 644.3L328.7 643.6L329.0 644.5L329.3 643.3L329.7 644.1L330.0 644.8L330.4 644.2L330.7 643.4L331.0 642.9L331.4 640.6L331.7 642.0L332.1 644.3L332.4 643.0L332.7 642.4L333.1 642.5L333.4 643.3L333.8 645.3L334.1 645.1L334.5 641.6L334.8 643.0L335.1 644.5L335.5 643.1L335.8 644.1L336.2 644.3L336.5 645.4L336.8 644.3L337.2 643.3L337.5 643.3L337.9 643.5L338.2 644.3L338.5 646.2L338.9 645.7L339.2 644.3L339.6 643.2L339.9 645.0L340.2 644.9L340.6 645.3L340.9 648.7L341.3 647.4L341.6 644.1L342.0 644.8L342.3 647.2L342.6 644.9L343.0 647.4L343.3 645.8L343.7 643.4L344.0 641.6L344.3 642.5L344.7 642.5L345.0 641.6L345.4 643.8L345.7 648.0L346.0 646.0L346.4 648.9L346.7 651.4L347.1 651.4L347.4 651.6L347.8 648.8L348.1 651.1L348.4 647.5L348.8 646.7L349.1 646.7L349.5 641.3L349.8 642.0L350.1 641.6L350.5 638.3L350.8 638.9L351.2 636.8L351.5 644.4L351.8 644.8L352.2 643.9L352.5 643.5L352.9 647.5L353.2 648.4L353.6 648.3L353.9 649.9L354.2 650.1L354.6 646.5L354.9 648.8L355.3 646.0L355.6 647.1L355.9 648.2L356.3 648.5L356.6 648.3L357.0 648.0L357.3 646.7L357.6 644.7L358.0 647.1L358.3 646.4L358.7 646.3L359.0 643.5L359.4 646.5L359.7 645.1L360.0 647.0L360.4 644.8L360.7 643.2L361.1 644.1L361.4 644.7L361.7 644.2L362.1 645.3L362.4 644.4L362.8 643.2L363.1 643.8L363.4 644.1L363.8 645.6L364.1 645.6L364.5 645.8L364.8 643.4L365.1 645.5L365.5 642.3L365.8 643.1L366.2 644.2L366.5 644.4L366.9 644.2L367.2 646.2L367.5 645.2L367.9 645.0L368.2 644.6L368.6 645.2L368.9 645.2L369.2 645.4L369.6 644.8L369.9 643.7L370.3 642.0L370.6 642.7L370.9 641.7L371.3 643.0L371.6 642.5L372.0 641.4L372.3 640.5L372.7 641.5L373.0 641.8L373.3 642.0L373.7 643.0L374.0 640.8L374.4 643.9L374.7 640.8L375.0 641.8L375.4 641.8L375.7 643.3L376.1 642.2L376.4 645.0L376.7 644.5L377.1 643.2L377.4 643.7L377.8 642.4L378.1 642.1L378.5 641.3L378.8 639.2L379.1 640.2L379.5 639.2L379.8 638.7L380.2 636.2L380.5 637.8L380.8 638.5L381.2 638.8L381.5 641.4L381.9 640.5L382.2 639.7L382.5 641.2L382.9 643.4L383.2 645.7L383.6 644.0L383.9 643.9L384.3 643.1L384.6 643.4L384.9 645.4L385.3 643.9L385.6 641.6L386.0 645.2L386.3 642.7L386.6 645.7L387.0 643.7L387.3 646.0L387.7 644.6L388.0 645.5L388.3 642.7L388.7 645.8L389.0 641.7L389.4 645.4L389.7 644.6L390.0 644.9L390.4 646.2L390.7 644.0L391.1 643.1L391.4 646.0L391.8 643.7L392.1 645.8L392.4 647.1L392.8 645.0L393.1 644.4L393.5 644.3L393.8 645.1L394.1 642.3L394.5 644.8L394.8 643.8L395.2 645.6L395.5 645.0L395.8 644.3L396.2 644.5L396.5 647.0L396.9 644.3L397.2 642.7L397.6 645.6L397.9 645.3L398.2 645.0L398.6 645.3L398.9 644.9L399.3 644.4L399.6 644.3L399.9 647.1L400.3 643.6L400.6 643.1L401.0 645.4L401.3 645.0L401.6 645.0L402.0 645.1L402.3 647.1L402.7 645.5L403.0 643.7L403.4 642.4L403.7 646.5L404.0 644.7L404.4 646.3L404.7 645.3L405.1 646.3L405.4 647.0L405.7 646.4L406.1 646.5L406.4 644.6L406.8 645.4L407.1 646.9L407.4 646.9L407.8 646.5L408.1 644.9L408.5 645.7L408.8 644.8L409.1 645.5L409.5 645.7L409.8 646.7L410.2 643.8L410.5 646.0L410.9 646.2L411.2 644.3L411.5 646.0L411.9 644.9L412.2 644.2L412.6 646.5L412.9 644.7L413.2 647.9L413.6 644.4L413.9 644.6L414.3 644.9L414.6 646.1L414.9 646.3L415.3 645.7L415.6 642.4L416.0 646.9L416.3 646.1L416.7 644.4L417.0 645.8L417.3 645.6L417.7 643.7L418.0 645.9L418.4 645.0L418.7 646.3L419.0 645.2L419.4 646.3L419.7 643.1L420.1 645.8L420.4 647.7L420.7 646.0L421.1 645.5L421.4 647.5L421.8 645.5L422.1 644.5L422.5 646.1L422.8 643.4L423.1 643.6L423.5 645.1L423.8 645.9L424.2 646.9L424.5 646.1L424.8 646.5L425.2 645.9L425.5 646.0L425.9 644.6L426.2 647.5L426.5 647.1L426.9 645.5L427.2 646.7L427.6 647.0L427.9 645.9L428.3 644.9L428.6 647.1L428.9 647.5L429.3 649.5L429.6 647.9L430.0 648.2L430.3 647.9L430.6 649.7L431.0 649.5L431.3 650.4L431.7 650.9L432.0 652.5L432.3 652.4L432.7 651.9L433.0 649.4L433.4 653.7L433.7 651.2L434.0 651.4L434.4 650.1L434.7 649.4L435.1 644.0L435.4 642.4L435.8 642.7L436.1 642.3L436.4 641.9L436.8 641.1L437.1 640.8L437.5 642.8L437.8 646.6L438.1 649.0L438.5 650.1L438.8 652.0L439.2 652.2L439.5 651.7L439.8 650.5L440.2 650.3L440.5 650.2L440.9 648.4L441.2 650.3L441.6 648.0L441.9 645.1L442.2 644.2L442.6 643.0L442.9 638.2L443.3 636.4L443.6 637.2L443.9 634.7L444.3 633.7L444.6 635.6L445.0 632.7L445.3 638.4L445.6 635.7L446.0 638.2L446.3 641.9L446.7 640.5L447.0 643.6L447.4 643.2L447.7 645.6L448.0 645.2L448.4 645.5L448.7 645.8L449.1 648.6L449.4 645.0L449.7 646.5L450.1 646.7L450.4 647.4L450.8 648.8L451.1 647.3L451.4 648.5L451.8 645.8L452.1 650.0L452.5 651.1L452.8 651.9L453.1 652.4L453.5 651.5L453.8 652.7L454.2 658.9L454.5 655.7L454.9 659.8L455.2 655.8L455.5 659.7L455.9 656.2L456.2 658.7L456.6 656.1L456.9 655.7L457.2 651.8L457.6 658.6L457.9 654.6L458.3 650.3L458.6 650.2L458.9 650.7L459.3 650.6L459.6 649.8L460.0 648.9L460.3 649.0L460.7 648.8L461.0 648.4L461.3 646.9L461.7 646.5L462.0 646.2L462.4 644.3L462.7 643.8L463.0 644.6L463.4 642.9L463.7 640.1L464.1 640.6L464.4 637.5L464.7 639.0L465.1 637.9L465.4 638.0L465.8 639.3L466.1 639.3L466.5 644.8L466.8 641.8L467.1 643.1L467.5 648.1L467.8 645.3L468.2 645.3L468.5 645.5L468.8 644.8L469.2 646.1L469.5 645.1L469.9 645.5L470.2 643.6L470.5 645.8L470.9 645.5L471.2 645.1L471.6 645.2L471.9 644.6L472.3 645.2L472.6 645.7L472.9 644.7L473.3 646.1L473.6 645.3L474.0 644.3L474.3 646.5L474.6 644.9L475.0 643.9L475.3 643.7L475.7 645.4L476.0 643.1L476.3 644.2L476.7 644.1L477.0 644.3L477.4 645.1L477.7 643.8L478.0 645.3L478.4 642.9L478.7 643.9L479.1 643.6L479.4 643.9L479.8 643.3L480.1 642.0L480.4 642.5L480.8 642.3L481.1 643.5L481.5 643.6L481.8 642.1L482.1 638.2L482.5 641.6L482.8 639.9L483.2 639.1L483.5 637.7L483.8 640.6L484.2 639.3L484.5 636.6L484.9 640.2L485.2 640.2L485.6 640.7L485.9 641.8L486.2 642.9L486.6 639.1L486.9 642.5L487.3 643.2L487.6 643.4L487.9 643.0L488.3 644.2L488.6 644.9L489.0 644.8L489.3 640.7L489.6 643.0L490.0 642.3L490.3 643.5L490.7 642.5L491.0 643.2L491.4 645.2L491.7 641.7L492.0 644.8L492.4 643.5L492.7 640.9L493.1 639.0L493.4 641.8L493.7 641.2L494.1 645.0L494.4 639.1L494.8 640.9L495.1 642.8L495.4 645.6L495.8 643.1L496.1 643.4L496.5 637.2L496.8 641.3L497.2 642.5L497.5 640.6L497.8 641.2L498.2 639.1L498.5 641.5L498.9 638.1L499.2 641.7L499.5 641.0L499.9 640.6L500.2 641.0L500.6 643.3L500.9 640.9L501.2 639.9L501.6 642.1L501.9 640.1L502.3 641.3L502.6 639.6L502.9 640.7L503.3 642.8L503.6 641.8L504.0 644.2L504.3 643.7L504.7 642.3L505.0 645.8L505.3 640.2L505.7 642.6L506.0 642.5L506.4 645.7L506.7 642.7L507.0 643.4L507.4 644.9L507.7 642.5L508.1 643.0L508.4 640.5L508.7 638.2L509.1 638.7L509.4 637.3L509.8 640.7L510.1 640.5L510.5 641.1L510.8 638.4L511.1 639.2L511.5 642.4L511.8 639.8L512.2 641.9L512.5 641.1L512.8 643.3L513.2 642.6L513.5 644.3L513.9 643.6L514.2 644.2L514.5 644.6L514.9 645.1L515.2 645.8L515.6 643.3L515.9 643.5L516.3 645.3L516.6 646.4L516.9 643.8L517.3 646.2L517.6 643.0L518.0 644.5L518.3 644.0L518.6 645.3L519.0 644.4L519.3 646.3L519.7 646.8L520.0 642.9L520.3 645.2L520.7 646.0L521.0 644.6L521.4 645.8L521.7 647.1L522.0 645.9L522.4 644.6L522.7 642.9L523.1 645.2L523.4 645.9L523.8 647.0L524.1 645.2L524.4 644.3L524.8 646.3L525.1 647.4L525.5 644.6L525.8 645.2L526.1 643.7L526.5 644.3L526.8 646.8L527.2 647.0L527.5 644.6L527.8 642.7L528.2 644.7L528.5 645.5L528.9 645.1L529.2 644.3L529.6 644.4L529.9 645.3L530.2 644.2L530.6 645.3L530.9 645.8L531.3 645.2L531.6 642.1L531.9 646.1L532.3 645.1L532.6 646.0L533.0 643.7L533.3 644.8L533.6 643.8L534.0 641.8L534.3 641.0L534.7 640.0L535.0 638.6L535.4 637.9L535.7 637.1L536.0 639.2L536.4 635.8L536.7 636.9L537.1 641.1L537.4 640.9L537.7 640.8L538.1 644.4L538.4 645.5L538.8 646.0L539.1 647.2L539.4 650.1L539.8 649.2L540.1 649.9L540.5 651.8L540.8 652.3L541.2 649.1L541.5 650.3L541.8 648.6L542.2 649.0L542.5 644.5L542.9 644.6L543.2 640.1L543.5 637.8L543.9 636.0L544.2 635.6L544.6 638.2L544.9 636.5L545.2 637.0L545.6 637.9L545.9 643.0L546.3 646.9L546.6 647.6L546.9 645.7L547.3 650.3L547.6 647.1L548.0 648.8L548.3 648.4L548.7 649.4L549.0 645.5L549.3 647.8L549.7 647.6L550.0 646.2L550.4 648.6L550.7 648.2L551.0 644.7L551.4 644.3L551.7 645.7L552.1 648.0L552.4 645.6L552.7 647.3L553.1 643.3L553.4 645.4L553.8 643.8L554.1 646.2L554.5 643.4L554.8 643.6L555.1 643.8L555.5 641.7L555.8 641.6L556.2 645.6L556.5 643.6L556.8 643.0L557.2 643.3L557.5 640.0L557.9 642.8L558.2 639.9L558.5 639.8L558.9 639.4L559.2 633.8L559.6 632.8L559.9 637.4L560.3 631.6L560.6 633.9L560.9 629.0L561.3 632.0L561.6 630.6L562.0 634.9L562.3 635.4L562.6 637.8L563.0 637.4L563.3 638.3L563.7 638.0L564.0 640.9L564.3 638.9L564.7 638.4L565.0 643.9L565.4 642.2L565.7 642.1L566.1 643.5L566.4 642.0L566.7 641.6L567.1 642.6L567.4 640.7L567.8 642.8L568.1 643.5L568.4 642.0L568.8 641.4L569.1 639.7L569.5 641.6L569.8 640.9L570.1 640.2L570.5 641.2L570.8 639.3L571.2 640.1L571.5 639.3L571.8 640.1L572.2 635.1L572.5 643.1L572.9 639.9L573.2 640.3L573.6 639.6L573.9 637.8L574.2 639.3L574.6 641.7L574.9 640.4L575.3 640.1L575.6 640.9L575.9 642.0L576.3 642.0L576.6 642.5L577.0 642.2L577.3 642.1L577.6 642.9L578.0 641.8L578.3 643.4L578.7 641.6L579.0 641.0L579.4 641.5L579.7 642.8L580.0 644.4L580.4 642.7L580.7 643.4L581.1 645.5L581.4 641.8L581.7 641.4L582.1 642.9L582.4 644.2L582.8 642.8L583.1 642.6L583.4 646.5L583.8 646.0L584.1 644.9L584.5 643.0L584.8 643.8L585.2 643.7L585.5 643.8L585.8 642.6L586.2 643.0L586.5 644.6L586.9 642.8L587.2 643.5L587.5 641.4L587.9 641.1L588.2 644.3L588.6 642.1L588.9 640.7L589.2 643.0L589.6 641.2L589.9 641.8L590.3 641.1L590.6 640.4L590.9 640.4L591.3 642.5L591.6 642.3L592.0 643.0L592.3 643.9L592.7 642.3L593.0 642.7L593.3 644.7L593.7 642.1L594.0 646.1L594.4 646.0L594.7 644.2L595.0 643.1L595.4 643.4L595.7 642.2L596.1 644.8L596.4 644.5L596.7 645.4L597.1 649.1L597.4 647.1L597.8 645.8L598.1 646.3L598.5 644.1L598.8 646.3L599.1 644.4L599.5 646.0L599.8 644.3L600.2 643.6L600.5 644.2L600.8 644.7L601.2 645.9L601.5 647.3L601.9 643.9L602.2 644.5L602.5 647.0L602.9 644.4L603.2 645.6L603.6 644.1L603.9 644.7L604.3 646.6L604.6 644.3L604.9 644.1L605.3 643.9L605.6 646.6L606.0 643.6L606.3 645.1L606.6 644.7L607.0 643.2L607.3 645.3L607.7 643.0L608.0 642.0L608.3 645.9L608.7 645.2L609.0 645.7L609.4 645.5L609.7 645.0L610.1 644.4L610.4 645.8L610.7 644.3L611.1 645.8L611.4 645.8L611.8 645.7L612.1 644.7L612.4 645.4L612.8 645.9L613.1 646.4L613.5 646.0L613.8 645.7L614.1 644.4L614.5 646.2L614.8 647.0L615.2 646.3L615.5 646.3L615.8 645.8L616.2 646.7L616.5 646.9L616.9 648.6L617.2 644.5L617.6 647.0L617.9 645.6L618.2 645.6L618.6 647.5L618.9 646.2L619.3 645.7L619.6 644.5L619.9 645.2L620.3 648.3L620.6 647.0L621.0 646.6L621.3 643.8L621.6 647.3L622.0 643.8L622.3 645.7L622.7 646.2L623.0 646.7L623.4 644.2L623.7 646.4L624.0 645.4L624.4 646.2L624.7 647.0L625.1 647.8L625.4 645.7L625.7 646.2L626.1 647.0L626.4 647.7L626.8 645.4L627.1 646.7L627.4 644.5L627.8 642.9L628.1 642.2L628.5 641.9L628.8 643.9L629.2 641.5L629.5 642.9L629.8 641.6L630.2 642.6L630.5 640.7L630.9 638.8L631.2 639.7L631.5 642.5L631.9 641.4L632.2 642.2L632.6 643.5L632.9 644.0L633.2 640.6L633.6 642.0L633.9 645.9L634.3 645.3L634.6 643.4L634.9 645.3L635.3 646.1L635.6 645.6L636.0 646.5L636.3 646.0L636.7 645.2L637.0 644.5L637.3 644.8L637.7 647.0L638.0 644.3L638.4 645.7L638.7 646.2L639.0 644.9L639.4 647.1L639.7 644.4L640.1 646.1L640.4 644.5L640.7 643.6L641.1 646.3L641.4 645.1L641.8 645.4L642.1 644.9L642.5 644.4L642.8 645.7L643.1 646.0L643.5 645.3L643.8 646.1L644.2 644.8L644.5 646.1L644.8 641.5L645.2 646.3L645.5 644.8L645.9 642.1L646.2 641.6L646.5 641.9L646.9 643.2L647.2 638.5L647.6 640.3L647.9 638.6L648.3 639.4L648.6 642.8L648.9 641.4L649.3 638.5L649.6 640.0L650.0 642.2L650.3 641.7L650.6 640.2L651.0 642.8L651.3 642.2L651.7 642.2L652.0 640.4L652.3 645.0L652.7 643.3L653.0 640.6L653.4 642.8L653.7 642.7L654.1 641.5L654.4 640.5L654.7 641.4L655.1 641.2L655.4 639.7L655.8 639.2L656.1 640.7L656.4 638.3L656.8 638.6L657.1 641.0L657.5 638.0L657.8 641.8L658.1 644.6L658.5 640.5L658.8 640.4L659.2 642.0L659.5 643.6L659.8 640.9L660.2 646.2L660.5 644.9L660.9 645.3L661.2 644.9L661.6 645.6L661.9 644.9L662.2 646.1L662.6 644.0L662.9 643.8L663.3 645.5L663.6 644.8L663.9 646.1L664.3 643.8L664.6 643.7L665.0 646.5L665.3 646.3L665.6 645.3L666.0 644.6L666.3 644.8L666.7 646.4L667.0 644.5L667.4 645.7L667.7 648.1L668.0 645.8L668.4 645.8L668.7 645.2L669.1 645.5L669.4 647.8L669.7 643.7L670.1 646.8L670.4 644.9L670.8 644.7L671.1 645.8L671.4 646.5L671.8 644.6L672.1 646.1L672.5 644.6L672.8 646.0L673.2 647.2L673.5 645.5L673.8 646.0L674.2 645.7L674.5 647.1L674.9 642.8L675.2 646.5L675.5 643.8L675.9 644.6L676.2 642.2L676.6 642.2L676.9 642.1L677.2 642.1L677.6 643.2L677.9 640.3L678.3 641.2L678.6 639.5L679.0 640.7L679.3 641.6L679.6 640.4L680.0 642.3L680.3 642.5L680.7 641.9L681.0 642.6L681.3 642.4L681.7 644.3L682.0 642.9L682.4 645.2L682.7 645.2L683.0 645.8L683.4 646.4L683.7 645.7L684.1 646.0L684.4 646.4L684.7 647.5L685.1 646.4L685.4 645.9L685.8 644.6L686.1 646.6L686.5 647.7L686.8 646.0L687.1 644.2L687.5 646.3L687.8 646.7L688.2 645.6L688.5 646.0L688.8 646.6L689.2 646.2L689.5 646.6L689.9 647.0L690.2 646.1L690.5 644.5L690.9 647.3L691.2 648.0L691.6 646.1L691.9 644.4L692.3 645.5L692.6 645.1L692.9 647.9L693.3 645.0L693.6 648.7L694.0 646.2L694.3 647.8L694.6 646.8L695.0 645.3L695.3 645.1L695.7 646.9L696.0 646.1L696.3 646.3L696.7 646.7L697.0 647.2L697.4 644.9L697.7 646.7L698.1 645.5L698.4 647.4L698.7 646.5L699.1 645.4L699.4 647.5L699.8 645.0L700.1 645.4L700.4 646.8L700.8 645.5L701.1 647.2L701.5 645.0L701.8 645.9L702.1 645.1L702.5 644.2L702.8 644.8L703.2 645.9L703.5 645.8L703.8 644.9L704.2 644.6L704.5 643.1L704.9 644.5L705.2 644.9L705.6 645.2L705.9 644.1L706.2 645.3L706.6 644.5L706.9 646.2L707.3 645.1L707.6 646.6L707.9 645.1L708.3 644.8L708.6 645.1L709.0 645.3L709.3 645.6L709.6 646.2L710.0 647.7L710.3 645.9L710.7 646.1L711.0 646.5L711.4 646.1L711.7 645.4L712.0 647.0L712.4 647.0L712.7 646.1L713.1 646.9L713.4 647.0L713.7 647.8L714.1 647.4L714.4 647.4L714.8 646.7L715.1 645.9L715.4 646.0L715.8 646.3L716.1 646.1L716.5 647.8L716.8 645.2L717.2 644.5L717.5 647.8L717.8 646.0L718.2 648.2L718.5 645.7L718.9 646.4L719.2 645.6L719.5 646.7L719.9 645.7L720.2 648.4L720.6 646.3L720.9 647.2L721.2 648.6L721.6 646.1L721.9 646.8L722.3 645.2L722.6 645.8L723.0 647.4L723.3 646.2L723.6 648.7L724.0 646.8L724.3 645.5L724.7 646.7L725.0 647.0L725.3 648.7L725.7 648.5L726.0 646.1L726.4 648.2L726.7 644.9L727.0 646.4L727.4 644.6L727.7 647.6L728.1 645.8L728.4 647.8L728.7 645.2L729.1 648.6L729.4 646.9L729.8 646.8L730.1 646.1L730.5 645.4L730.8 648.0L731.1 647.0L731.5 646.9L731.8 649.4L732.2 644.7L732.5 647.2L732.8 644.8L733.2 646.2L733.5 646.9L733.9 645.2L734.2 645.4L734.5 648.2L734.9 647.2L735.2 646.1L735.6 645.3L735.9 647.6L736.3 646.2L736.6 644.8L736.9 647.1L737.3 646.5L737.6 648.3L738.0 646.9L738.3 646.4L738.6 648.3L739.0 645.7L739.3 643.9L739.7 644.4L740.0 646.9L740.3 644.9L740.7 644.9L741.0 646.2L741.4 644.0L741.7 644.5L742.1 645.1L742.4 643.9L742.7 645.2L743.1 643.2L743.4 646.0L743.8 643.6L744.1 644.0L744.4 644.4L744.8 642.8L745.1 642.2L745.5 644.7L745.8 643.8L746.1 641.6L746.5 640.3L746.8 642.9L747.2 642.6L747.5 642.3L747.9 642.4L748.2 643.3L748.5 643.1L748.9 642.7L749.2 646.0L749.6 644.2L749.9 642.8L750.2 645.5L750.6 643.7L750.9 642.9L751.3 643.6L751.6 644.6L751.9 644.3L752.3 645.6L752.6 645.3L753.0 644.4L753.3 643.7L753.6 647.1L754.0 645.1L754.3 645.1L754.7 644.3L755.0 643.6L755.4 643.4L755.7 646.5L756.0 642.9L756.4 644.2L756.7 644.2L757.1 645.3L757.4 646.6L757.7 643.8L758.1 645.5L758.4 645.9L758.8 644.0L759.1 645.5L759.4 645.0L759.8 645.3L760.1 643.7L760.5 647.2L760.8 644.9L761.2 644.9L761.5 646.2L761.8 645.3L762.2 644.8L762.5 644.3L762.9 644.7L763.2 645.2L763.5 645.1L763.9 649.2L764.2 646.0L764.6 646.3L764.9 646.8L765.2 646.0L765.6 644.9L765.9 647.3L766.3 645.9L766.6 646.0L767.0 645.5L767.3 645.6L767.6 645.4L768.0 647.1L768.3 647.7L768.7 644.8L769.0 648.0L769.3 647.7L769.7 647.9L770.0 645.9L770.4 645.7L770.7 646.4L771.0 646.6L771.4 648.2L771.7 646.2L772.1 648.3L772.4 645.3L772.7 646.9L773.1 645.8L773.4 646.5L773.8 646.1L774.1 647.8L774.5 646.6L774.8 646.3L775.1 648.4L775.5 645.1L775.8 646.5L776.2 646.8L776.5 646.4L776.8 646.6L777.2 647.8L777.5 646.1L777.9 646.7L778.2 646.7L778.5 646.9L778.9 645.9L779.2 643.8L779.6 647.6L779.9 647.1L780.3 646.7L780.6 646.1L780.9 645.1L781.3 647.3L781.6 645.9L782.0 645.6L782.3 647.0L782.6 644.6L783.0 646.7L783.3 644.9L783.7 645.3L784.0 646.5L784.3 645.4L784.7 647.1L785.0 644.0L785.4 645.8L785.7 644.9L786.1 645.3L786.4 645.8L786.7 645.9L787.1 645.1L787.4 645.1L787.8 645.6L788.1 645.2L788.4 647.1L788.8 645.2L789.1 645.8L789.5 644.1L789.8 645.3L790.1 644.8L790.5 646.8L790.8 645.6L791.2 646.5L791.5 645.9L791.9 645.4L792.2 646.3L792.5 646.0L792.9 646.3L793.2 646.3L793.6 645.9L793.9 647.3L794.2 645.3L794.6 645.9L794.9 645.5L795.3 645.5L795.6 644.8L795.9 643.5L796.3 644.9L796.6 645.8L797.0 645.1L797.3 643.6L797.6 645.4L798.0 643.4L798.3 646.2L798.7 643.4L799.0 645.4L799.4 644.0L799.7 644.9L800.0 644.0L800.4 646.4L800.7 644.4L801.1 643.0L801.4 642.8L801.7 644.9L802.1 644.2L802.4 645.7L802.8 643.4L803.1 642.6L803.4 642.9L803.8 643.9L804.1 643.5L804.5 643.9L804.8 645.1L805.2 644.2L805.5 644.8L805.8 645.1L806.2 644.4L806.5 646.0L806.9 645.6L807.2 645.8L807.5 644.8L807.9 645.4L808.2 643.0L808.6 645.1L808.9 645.0L809.2 646.3L809.6 644.0L809.9 645.2L810.3 644.0L810.6 644.6L811.0 644.3L811.3 645.2L811.6 644.7L812.0 645.9L812.3 646.3L812.7 644.4L813.0 644.2L813.3 644.1L813.7 645.6L814.0 645.9L814.4 645.0L814.7 643.1L815.0 644.0L815.4 645.6L815.7 644.4L816.1 644.9L816.4 644.0L816.7 642.6L817.1 643.4L817.4 642.3L817.8 642.9L818.1 643.6L818.5 642.6L818.8 643.0L819.1 642.8L819.5 643.8L819.8 643.6L820.2 646.6L820.5 641.4L820.8 643.5L821.2 642.0L821.5 645.6L821.9 642.9L822.2 645.6L822.5 643.2L822.9 643.1L823.2 645.5L823.6 646.1L823.9 645.7L824.3 647.2L824.6 645.8L824.9 644.0L825.3 646.2L825.6 645.7L826.0 644.2L826.3 648.4L826.6 644.8L827.0 644.4L827.3 647.3L827.7 648.3L828.0 646.2L828.3 646.7L828.7 647.5L829.0 646.6L829.4 647.4L829.7 647.0L830.1 646.3L830.4 646.3L830.7 646.6L831.1 645.6L831.4 647.2L831.8 645.5L832.1 647.8L832.4 648.2L832.8 646.9L833.1 646.9L833.5 647.8L833.8 647.1L834.1 647.6L834.5 647.0L834.8 646.0L835.2 645.7L835.5 646.3L835.9 646.0L836.2 647.2L836.5 645.5L836.9 646.0L837.2 645.8L837.6 646.7L837.9 647.1L838.2 647.8L838.6 647.0L838.9 647.5L839.3 647.7L839.6 646.5L839.9 645.7L840.3 646.4L840.6 645.8L841.0 647.4L841.3 647.1L841.6 645.1L842.0 647.5L842.3 647.0L842.7 646.8L843.0 647.1L843.4 646.5L843.7 647.4L844.0 647.2L844.4 646.6L844.7 646.5L845.1 646.8L845.4 644.6L845.7 647.7L846.1 645.9L846.4 645.9L846.8 647.8L847.1 647.4L847.4 647.7L847.8 647.9L848.1 648.3L848.5 647.8L848.8 647.9L849.2 647.5L849.5 646.6L849.8 646.2L850.2 645.3L850.5 649.4L850.9 645.0L851.2 647.4L851.5 646.4L851.9 648.0L852.2 646.4L852.6 645.5L852.9 647.4L853.2 646.3L853.6 646.5L853.9 646.3L854.3 646.4L854.6 646.1L855.0 646.6L855.3 645.2L855.6 646.4L856.0 645.7L856.3 643.8L856.7 645.2L857.0 645.7L857.3 643.3L857.7 644.5L858.0 642.7L858.4 645.4L858.7 645.1L859.0 645.5L859.4 644.8L859.7 646.8L860.1 645.3L860.4 648.5L860.8 644.0L861.1 645.5L861.4 646.8L861.8 645.0L862.1 647.6L862.5 648.4L862.8 647.2L863.1 646.1L863.5 647.4L863.8 643.7L864.2 646.6L864.5 645.8L864.8 646.0L865.2 646.7L865.5 645.0L865.9 644.5L866.2 646.3L866.5 646.0L866.9 645.1L867.2 646.8L867.6 646.8L867.9 647.4L868.3 644.6L868.6 646.0L868.9 646.1L869.3 645.3L869.6 646.3L870.0 645.7L870.3 647.3L870.6 646.2L871.0 648.5L871.3 646.9L871.7 648.8L872.0 646.4L872.3 646.2L872.7 645.5L873.0 648.2L873.4 647.0L873.7 647.5L874.1 646.4L874.4 647.0L874.7 648.4L875.1 646.4L875.4 645.7L875.8 644.5L876.1 645.7L876.4 645.7L876.8 646.0L877.1 647.1L877.5 645.3L877.8 647.8L878.1 645.7L878.5 646.9L878.8 645.4L879.2 646.6L879.5 647.0L879.9 647.2L880.2 648.3L880.5 647.0L880.9 646.8L881.2 646.5L881.6 647.4L881.9 647.4L882.2 646.1L882.6 647.1L882.9 646.1L883.3 645.8L883.6 645.9L883.9 645.9L884.3 646.0L884.6 647.6L885.0 645.9L885.3 646.9L885.6 645.4L886.0 647.4L886.3 646.4L886.7 645.1L887.0 646.2L887.4 643.6L887.7 645.4L888.0 645.1L888.4 647.3L888.7 646.7L889.1 644.4L889.4 645.1L889.7 646.7L890.1 646.2L890.4 644.9L890.8 646.8L891.1 645.7L891.4 646.1L891.8 645.2L892.1 646.0L892.5 646.8L892.8 646.3L893.2 649.1L893.5 645.3L893.8 643.7L894.2 646.6L894.5 648.9L894.9 646.0L895.2 646.8L895.5 648.0L895.9 645.6L896.2 647.6L896.6 645.5L896.9 648.9L897.2 648.4L897.6 647.1L897.9 647.5L898.3 645.3L898.6 645.5L899.0 645.1L899.3 646.1L899.6 645.9L900.0 646.2L900.3 646.7L900.7 647.5L901.0 646.5L901.3 647.2L901.7 647.7L902.0 647.5L902.4 645.4L902.7 645.9L903.0 647.8L903.4 645.1L903.7 647.1L904.1 647.7L904.4 647.9L904.8 646.2L905.1 647.7L905.4 646.5L905.8 646.7L906.1 644.8L906.5 646.6L906.8 648.0L907.1 645.0L907.5 646.0L907.8 647.8L908.2 647.8L908.5 647.5L908.8 647.6L909.2 645.2L909.5 647.6L909.9 645.8L910.2 647.5L910.5 644.9L910.9 647.6L911.2 647.9L911.6 646.9L911.9 648.3L912.3 647.4L912.6 648.4L912.9 645.2L913.3 646.7L913.6 646.8L914.0 647.4L914.3 646.4L914.6 647.7L915.0 645.0L915.3 647.6L915.7 647.8L916.0 648.2L916.3 646.1L916.7 647.2L917.0 646.4L917.4 647.4L917.7 645.6L918.1 647.5L918.4 646.7L918.7 646.9L919.1 645.7L919.4 646.7L919.8 645.6L920.1 647.8L920.4 648.6L920.8 646.1L921.1 647.4L921.5 646.1L921.8 646.6L922.1 647.5L922.5 647.3L922.8 647.7L923.2 648.1L923.5 645.6L923.9 645.7L924.2 647.1L924.5 646.8L924.9 646.2L925.2 644.4L925.6 644.7L925.9 644.5L926.2 644.2L926.6 645.2L926.9 645.2L927.3 644.6L927.6 646.0L927.9 646.5L928.3 645.8L928.6 645.3L929.0 644.4L929.3 644.1L929.6 646.7L930.0 644.0L930.3 647.1L930.7 644.4L931.0 646.4L931.4 644.8L931.7 646.6L932.0 644.9L932.4 647.3L932.7 647.4L933.1 645.8L933.4 646.0L933.7 646.2L934.1 645.6L934.4 647.5L934.8 646.2L935.1 646.3L935.4 647.1L935.8 646.6L936.1 647.3L936.5 647.5L936.8 646.0L937.2 645.8L937.5 645.9L937.8 648.1L938.2 648.0L938.5 645.9L938.9 647.0L939.2 647.6L939.5 646.5L939.9 644.9L940.2 644.9L940.6 645.6L940.9 644.3L941.2 644.8L941.6 643.6L941.9 646.1L942.3 643.4L942.6 644.2L943.0 644.0L943.3 645.4L943.6 646.7L944.0 645.0L944.3 643.7L944.7 645.5L945.0 645.0L945.3 644.3L945.7 645.6L946.0 647.3L946.4 645.6L946.7 647.5L947.0 644.8L947.4 645.6L947.7 645.0L948.1 647.0L948.4 647.1L948.8 645.4L949.1 644.5L949.4 645.0L949.8 646.2L950.1 645.4L950.5 645.1L950.8 648.0L951.1 645.9L951.5 648.0L951.8 646.9L952.2 646.0L952.5 647.4L952.8 647.0L953.2 645.9L953.5 648.1L953.9 647.6L954.2 647.1L954.5 645.1L954.9 646.0L955.2 648.2L955.6 645.7L955.9 647.1L956.3 647.1L956.6 645.9L956.9 647.7L957.3 646.9L957.6 647.7L958.0 646.1L958.3 645.4L958.6 646.8L959.0 647.0L959.3 646.1L959.7 646.1L960.0 648.3L960.3 647.0L960.7 647.5L961.0 648.7L961.4 646.8L961.7 648.6L962.1 646.2L962.4 646.4L962.7 645.5L963.1 646.6L963.4 646.3L963.8 647.9L964.1 647.2L964.4 647.4L964.8 646.9L965.1 646.8L965.5 647.7L965.8 645.8L966.1 645.8L966.5 646.1L966.8 646.9L967.2 648.5L967.5 648.5L967.9 645.7L968.2 646.6L968.5 646.6L968.9 645.9L969.2 646.2L969.6 646.8L969.9 646.6L970.2 646.7L970.6 645.7L970.9 647.1L971.3 647.0L971.6 645.8L971.9 648.1L972.3 647.0L972.6 646.6L973.0 648.7L973.3 647.2L973.7 644.5L974.0 646.8L974.3 645.7L974.7 646.0L975.0 646.2L975.4 645.7L975.7 646.5L976.0 646.0L976.4 645.8L976.7 645.9L977.1 645.1L977.4 646.1L977.7 645.6L978.1 646.3L978.4 644.6L978.8 646.0L979.1 646.8L979.4 646.2L979.8 643.9L980.1 647.2L980.5 646.6L980.8 645.0L981.2 646.5L981.5 646.2L981.8 646.7L982.2 646.7L982.5 645.8L982.9 645.4L983.2 643.9L983.5 645.7L983.9 645.2L984.2 643.8L984.6 647.9L984.9 646.3L985.2 646.5L985.6 644.3L985.9 644.6L986.3 646.2L986.6 645.7L987.0 645.3L987.3 646.5L987.6 647.1L988.0 646.2L988.3 645.5L988.7 646.5L989.0 646.4L989.3 645.1L989.7 646.1L990.0 644.5L990.4 645.5L990.7 644.9L991.0 645.9L991.4 647.4L991.7 647.8L992.1 647.3L992.4 646.4L992.8 647.8L993.1 646.2L993.4 646.3L993.8 644.4L994.1 648.1L994.5 647.4L994.8 647.6L995.1 646.5L995.5 647.1L995.8 645.2L996.2 647.2L996.5 647.5L996.8 646.0L997.2 646.1L997.5 647.6L997.9 645.1L998.2 646.3L998.5 646.1L998.9 647.9L999.2 646.9L999.6 647.6L999.9 645.5L1000.3 647.6L1000.6 646.9L1000.9 646.2L1001.3 645.6L1001.6 645.0L1002.0 649.0L1002.3 649.4L1002.6 647.0L1003.0 648.0L1003.3 647.3L1003.7 647.3L1004.0 647.1L1004.3 646.5L1004.7 646.7L1005.0 646.7L1005.4 646.8L1005.7 648.4L1006.1 646.1L1006.4 647.5L1006.7 647.1L1007.1 646.6L1007.4 645.3L1007.8 647.1L1008.1 647.4L1008.4 646.3L1008.8 645.2L1009.1 646.1L1009.5 645.7L1009.8 647.5L1010.1 647.3L1010.5 647.0L1010.8 645.0L1011.2 646.5L1011.5 644.8L1011.9 646.0L1012.2 646.2L1012.5 646.6L1012.9 645.6L1013.2 647.5L1013.6 644.5L1013.9 645.6L1014.2 645.8L1014.6 648.1L1014.9 643.9L1015.3 645.1L1015.6 645.1L1015.9 646.4L1016.3 645.3L1016.6 647.4L1017.0 645.4L1017.3 646.1L1017.7 644.8L1018.0 645.1L1018.3 646.6L1018.7 645.9L1019.0 644.4L1019.4 644.6L1019.7 644.5L1020.0 645.2L1020.4 646.2L1020.7 645.4L1021.1 645.5L1021.4 644.0L1021.7 646.3L1022.1 643.9L1022.4 645.6L1022.8 643.3L1023.1 646.5L1023.4 641.3L1023.8 643.6L1024.1 645.0L1024.5 645.0L1024.8 643.2L1025.2 644.8L1025.5 645.2L1025.8 642.5L1026.2 645.6L1026.5 645.7L1026.9 645.9L1027.2 647.2L1027.5 645.0L1027.9 645.9L1028.2 646.5L1028.6 644.4L1028.9 647.2L1029.2 645.1L1029.6 646.0L1029.9 647.5L1030.3 645.5L1030.6 647.7L1031.0 647.6L1031.3 646.1L1031.6 647.0L1032.0 647.5L1032.3 647.2L1032.7 648.3L1033.0 648.8L1033.3 646.2L1033.7 649.0L1034.0 647.7L1034.4 648.7L1034.7 646.2L1035.0 644.9L1035.4 647.2L1035.7 646.6L1036.1 646.3L1036.4 647.7L1036.8 644.6L1037.1 648.3L1037.4 647.3L1037.8 646.2L1038.1 647.2L1038.5 646.3L1038.8 648.0L1039.1 647.2L1039.5 644.9L1039.8 648.3L1040.2 646.2L1040.5 645.0L1040.8 645.7L1041.2 645.1L1041.5 645.9L1041.9 645.7L1042.2 644.3L1042.6 647.3L1042.9 646.9L1043.2 645.8L1043.6 645.4L1043.9 646.9L1044.3 647.7L1044.6 646.3L1044.9 644.8L1045.3 645.9L1045.6 646.4L1046.0 645.4L1046.3 647.1L1046.6 645.0L1047.0 644.9L1047.3 646.2L1047.7 646.9L1048.0 645.3L1048.3 645.5L1048.7 645.8L1049.0 646.2L1049.4 646.8L1049.7 645.9L1050.1 647.1L1050.4 647.0L1050.7 645.4L1051.1 646.6L1051.4 646.6L1051.8 647.2L1052.1 647.2L1052.4 647.7L1052.8 648.1L1053.1 645.5L1053.5 647.6L1053.8 648.9L1054.1 647.3L1054.5 645.8L1054.8 645.5L1055.2 647.8L1055.5 646.4L1055.9 645.8L1056.2 645.7L1056.5 645.8L1056.9 648.0L1057.2 647.6L1057.6 648.7L1057.9 646.8L1058.2 648.1L1058.6 646.5L1058.9 647.6L1059.3 646.0L1059.6 645.5L1059.9 646.9L1060.3 648.2L1060.6 646.2L1061.0 646.4L1061.3 648.0L1061.7 647.2L1062.0 646.6L1062.3 647.2L1062.7 646.3L1063.0 645.2L1063.4 646.6L1063.7 646.9L1064.0 646.1L1064.4 646.3L1064.7 646.5L1065.1 648.4L1065.4 644.6L1065.7 647.4L1066.1 647.5L1066.4 646.7L1066.8 648.3L1067.1 645.4L1067.4 645.2L1067.8 646.2L1068.1 648.2L1068.5 647.0L1068.8 647.9L1069.2 647.1L1069.5 647.6L1069.8 646.5L1070.2 646.3L1070.5 647.6L1070.9 647.1L1071.2 647.6L1071.5 648.4L1071.9 646.3L1072.2 646.6L1072.6 646.7L1072.9 646.3L1073.2 645.1L1073.6 646.6L1073.9 647.8L1074.3 645.9L1074.6 648.3L1075.0 647.5L1075.3 647.4L1075.6 646.5L1076.0 647.0L1076.3 647.8L1076.7 645.4" fill="none" stroke="#00a200" stroke-width="1.1"/>
<rect x="0" y="616.9" width="4" height="1" fill="#fff"/>
<text x="4.5" y="621.4" font-size="11.5" fill="#fff" stroke="#fff" stroke-width="0.3">200</text>
<rect x="0" y="684.1" width="4" height="1" fill="#fff"/>
<text x="4.5" y="688.6" font-size="11.5" fill="#fff" stroke="#fff" stroke-width="0.3">-200</text>
<text x="1126.3" y="610.4" font-size="15.2" fill="#fff" text-anchor="end" letter-spacing="-1">0.4</text>
<text x="1099.4" y="609" font-size="11.5" font-weight="bold" fill="#fff">×</text>
</svg>
<div class="abs sash" style="left:0;top:707px;width:1128px;height:8px"><div class="abs" style="left:0;top:4px;width:1128px;height:1px;background:#d4d4d2"></div></div>
<div class="abs" style="left:0;top:715px;width:1116px;height:72px;background:#002b36;overflow:hidden;color:#93a1a1">
<div class="t" style="left:0px;top:-1.5px;letter-spacing:-0.159px;">%_11 created.</div>
<div class="t" style="left:0.5px;top:17.5px;letter-spacing:-0.005px;color:#859900">=-&gt; guess PseudoVoigtA</div>
<div class="t" style="left:0px;top:36.5px;letter-spacing:-0.236px;">%_12 created.</div>
</div>
<div class="abs" style="left:1116px;top:715px;width:12px;height:72px;background:#cfcfcd;border-left:1px solid #bdbdba"></div>
<div class="abs" style="left:1120px;top:746px;width:5px;height:39px;border-radius:3px;background:#7f8384"></div>
<div class="entry" style="left:1px;top:789px;width:1109px;height:32px"></div>
<div class="abs" style="left:1111px;top:789px;width:16px;height:32px;border:1px solid #c4c4c1;border-radius:3px;background:#f6f6f5"><div class="abs" style="left:0;top:15px;width:14px;height:1px;background:#d5d5d3"></div></div>
<svg class="abs" style="left:1111px;top:789px" width="16" height="32"><path d="M4.5 11L8 7.5L11.5 11Z" fill="#888a89"/><path d="M4.5 21L8 24.5L11.5 21Z" fill="#888a89"/></svg>
<div class="t" style="left:6px;top:826px;letter-spacing:-0.032px;">Select data range to disactivate...</div>
<div class="abs" style="left:918px;top:824px;width:1px;height:19px;background:#b5b5b2"></div>
<div class="btn" style="left:1288px;top:824px;width:26px;height:20px"></div>
<svg class="abs" style="left:1288px;top:824px" width="140" height="22" viewBox="1288 824 140 22">
<path d="M1296 830.5H1299.2V834H1296ZM1297.6 834V838M1301.5 830.5V838M1300.5 833H1302.6M1304.2 830.5H1306.6V834.6H1304.2ZM1305.4 834.6V838" stroke="#333" stroke-width="1" fill="none"/>
<path d="M1396 832L1400 828.6L1403.6 831" stroke="#555" stroke-width="0.9" fill="none"/>
<rect x="1398.6" y="831.6" width="8.8" height="10.6" rx="2" fill="#fafafa" stroke="#777" stroke-width="0.9"/>
<path d="M1399.4 835.6H1407.8M1403.6 831.6V835.6" stroke="#999" stroke-width="0.7"/><rect x="1403.8" y="832.2" width="3.4" height="3" fill="#bcd4f0"/>
</svg>
<div class="t" style="left:1346.3px;top:826px;letter-spacing:-0.229px;">activate</div>
<div class="t" style="left:1411.5px;top:826px;letter-spacing:-0.191px;">disactivate</div>
<div class="abs" style="left:1128px;top:103px;width:4px;height:720px;background:linear-gradient(#fbfbfb 0,#fbfbfb 630px,#ebebea 670px)"></div>
<div class="abs" style="left:1133px;top:103px;width:3px;height:544px;background:#f4f4f3"></div>
<div class="abs" style="left:1132px;top:103px;width:1px;height:720px;background:#bdbdba"></div>
<div class="abs" style="left:1136px;top:643px;width:368px;height:4px;background:#f0f0ef"></div><div class="abs" style="left:1136px;top:647px;width:368px;height:1px;background:#c6c6c3"></div><div class="abs" style="left:1136px;top:134px;width:368px;height:509px;background:#fbfbfa;border:1px solid #b9b9b6"></div>
<div class="abs" style="left:1142px;top:137px;width:357px;height:505px;background:#e8e8e7"></div>
<div class="abs" style="left:1182px;top:105px;width:73px;height:29px;background:#ececeb;border:1px solid #c3c3c0;border-bottom:none;border-radius:4px 4px 0 0"></div>
<div class="abs" style="left:1254px;top:105px;width:71px;height:29px;background:#ececeb;border:1px solid #c3c3c0;border-bottom:none;border-radius:4px 4px 0 0"></div>
<div class="abs" style="left:1136px;top:102px;width:47px;height:34px;background:#fbfbfa;border:1px solid #b9b9b6;border-bottom:none;border-radius:4px 4px 0 0"></div>
<div class="t" style="left:1148px;top:112px;letter-spacing:-0.370px;">data</div>
<div class="t" style="left:1190.3px;top:112.7px;letter-spacing:0.073px;">functions</div>
<div class="t" style="left:1262.4px;top:112.7px;letter-spacing:-0.248px;">variables</div>
<div class="abs" style="left:1142px;top:137px;width:356px;height:298px;background:#fff;border:1px solid #d6d6d4"></div>
<div class="abs" style="left:1143px;top:161px;width:354px;height:1px;background:#e3e3e2"></div>
<div class="abs" style="left:1182px;top:138px;width:1px;height:23px;background:#ececeb"></div>
<div class="abs" style="left:1223px;top:138px;width:1px;height:23px;background:#ececeb"></div>
<div class="abs" style="left:1325px;top:138px;width:1px;height:23px;background:#ececeb"></div>
<div class="t" style="left:1148.8px;top:141.5px;letter-spacing:0.067px;">No</div>
<div class="t" style="left:1189.3px;top:141.5px;letter-spacing:1.011px;">#F+#</div>
<div class="t" style="left:1229.7px;top:141.5px;letter-spacing:-0.279px;">Name</div>
<div class="abs" style="left:1143px;top:162px;width:182px;height:24px;background:#4a90d9"></div>
<div class="abs" style="left:1182px;top:162px;width:1px;height:24px;background:#a4c6ea"></div>
<div class="abs" style="left:1223px;top:162px;width:1px;height:24px;background:#a4c6ea"></div>
<div class="abs" style="left:1145px;top:166px;width:15px;height:15px;background:#fffacd;border:2px solid #1d1d1d"></div>
<div class="t" style="left:1164.5px;top:166px;color:#fff">0</div>
<div class="t" style="left:1186px;top:166px;letter-spacing:0.295px;color:#fff">12+0</div>
<div class="t" style="left:1226px;top:166px;letter-spacing:-0.429px;color:#fff">AP012</div>
<div class="abs" style="left:1142px;top:439px;width:356px;height:1px;background:#cfcfcc"></div>
<div class="abs" style="left:1142px;top:444px;width:356px;height:90px;background:#fff;border:1px solid #cfcfcc;overflow:hidden;color:#1a1a1a">
<div class="t" style="left:0.6px;top:1.5px;letter-spacing:0.016px;">@0: 3011 points, 2789 active.</div>
<div class="t" style="left:0.6px;top:20.2px;letter-spacing:0.119px;">Filename: /home/aleplo/test/Desktop/IMAP/</div>
<div class="t" style="left:0.6px;top:38.9px;letter-spacing:-0.177px;">Experimental/AP012/PXRD/AP012.raw</div>
<div class="t" style="left:0.6px;top:57.599999999999994px;letter-spacing:-0.034px;">Data title: AP012</div>
<div class="t" style="left:0.6px;top:76.3px;letter-spacing:-0.011px;">Active data range: [5.90791 : 60.009]</div>
<div class="abs" style="left:343px;top:0;width:12px;height:88px;background:#cfcfcd;border-left:1px solid #bdbdba"></div>
<div class="abs" style="left:346.5px;top:3px;width:6px;height:76px;border-radius:3px;background:#7f8384"></div>
</div>
<div class="btn" style="left:1142px;top:537px;width:356px;height:30px"></div>
<div class="t" style="left:1150.6px;top:544px;letter-spacing:0.112px;">show only selected</div>
<svg class="abs" style="left:1476px;top:548px" width="12" height="8"><path d="M1.2 1.6H10.8L6 6.6Z" fill="#2e3436"/></svg>
<svg class="abs" style="left:1144px;top:576px" width="12" height="18" viewBox="1144 576 12 18"><ellipse cx="1152" cy="588.7" rx="3" ry="2.8" fill="#111"/><circle cx="1147.6" cy="585.4" r="1.25" fill="#111"/><circle cx="1149.6" cy="582.4" r="1.25" fill="#111"/><circle cx="1153.2" cy="582" r="1.25" fill="#111"/></svg>
<div class="abs" style="left:1155.5px;top:569.5px;width:37px;height:33px;background:#fdfdfd"></div>
<div class="entry" style="left:1156px;top:570px;width:36px;height:32px"></div>
<div class="abs" style="left:1176px;top:571px;width:1px;height:30px;background:#dcdcda"></div>
<div class="abs" style="left:1177px;top:586px;width:14px;height:1px;background:#dcdcda"></div>
<div class="abs" style="left:1177px;top:587px;width:14px;height:14px;background:#f4f4f3;border-radius:0 0 3px 0"></div>
<svg class="abs" style="left:1177px;top:570px" width="15" height="32"><path d="M2.8 10.2L7.2 5.8L11.6 10.2Z" fill="#1e2224"/><path d="M3 21.6L7.2 25.8L11.4 21.6Z" fill="#8b8e8f"/></svg>
<div class="t" style="left:1165.2px;top:577.5px;color:#1a1a1a">1</div>
<div class="cb" style="left:1200px;top:578px"></div>
<svg class="abs" style="left:1200px;top:578px" width="15" height="15"><path d="M3.2 7.6L6.2 10.9L12.2 3.6" fill="none" stroke="#24282a" stroke-width="2.7"/></svg>
<div class="t" style="left:1220.5px;top:578px;letter-spacing:-0.154px;">line</div>
<div class="cb" style="left:1250px;top:578px"></div>
<div class="t" style="left:1271.3px;top:578px;">σ</div>
<svg class="abs" style="left:1440px;top:576px" width="14" height="20" viewBox="1440 576 14 20"><rect x="1442.6" y="578.8" width="10" height="2" fill="#00e400"/><rect x="1442.6" y="589.4" width="10" height="2" fill="#00e400"/><path d="M1447.8 581.4V593M1445.2 584L1447.8 581L1450.4 584M1446 593H1449.6" stroke="#111" stroke-width="1.4" fill="none"/></svg>
<div class="abs" style="left:1452.5px;top:569.5px;width:46px;height:33px;background:#fdfdfd"></div>
<div class="entry" style="left:1453px;top:570px;width:45px;height:32px"></div>
<div class="abs" style="left:1482px;top:571px;width:1px;height:30px;background:#dcdcda"></div>
<div class="abs" style="left:1483px;top:586px;width:14px;height:1px;background:#dcdcda"></div>
<div class="abs" style="left:1483px;top:587px;width:14px;height:14px;background:#f4f4f3;border-radius:0 0 3px 0"></div>
<svg class="abs" style="left:1483px;top:570px" width="15" height="32"><path d="M2.8 10.2L7.2 5.8L11.6 10.2Z" fill="#1e2224"/><path d="M3 21.6L7.2 25.8L11.4 21.6Z" fill="#8b8e8f"/></svg>
<div class="t" style="left:1462.7px;top:577.5px;color:#1a1a1a">0</div>
<div class="btn" style="left:1142.5px;top:605px;width:35px;height:34px"></div>
<div class="btn" style="left:1180px;top:605px;width:35px;height:34px"></div>
<div class="btn" style="left:1217.5px;top:605px;width:35px;height:34px;background:#f7f7f6;border-color:#cfcfcc"></div>
<div class="btn" style="left:1255px;top:605px;width:35px;height:34px"></div>
<div class="btn" style="left:1293px;top:605px;width:35px;height:34px"></div>
<svg class="abs" style="left:1142px;top:605px" width="190" height="34" viewBox="1142 605 190 34">
<rect x="1150.4" y="612.7" width="19.35" height="19.35" fill="#fff"/>
<rect x="1150.40" y="612.70" width="6.45" height="6.45" fill="#f7b7b7"/>
<rect x="1156.85" y="612.70" width="6.45" height="6.45" fill="#7d9ae8"/>
<rect x="1163.30" y="612.70" width="6.45" height="6.45" fill="#f7ec9a"/>
<rect x="1150.40" y="619.15" width="6.45" height="6.45" fill="#f3e3c8"/>
<rect x="1156.85" y="619.15" width="6.45" height="6.45" fill="#e8d8c0"/>
<rect x="1163.30" y="619.15" width="6.45" height="6.45" fill="#f0b060"/>
<rect x="1150.40" y="625.60" width="6.45" height="6.45" fill="#f4b8b8"/>
<rect x="1156.85" y="625.60" width="6.45" height="6.45" fill="#8ed48e"/>
<rect x="1163.30" y="625.60" width="6.45" height="6.45" fill="#8aa6ea"/>
<path d="M1150.40 612.7V632.05M1150.4 612.70H1169.75M1156.85 612.7V632.05M1150.4 619.15H1169.75M1163.30 612.7V632.05M1150.4 625.60H1169.75M1169.75 612.7V632.05M1150.4 632.05H1169.75" stroke="#111" stroke-width="1.1"/>
<path d="M1158.8 617.2Q1159.8 616 1160.8 617.2V622L1164.6 622.8Q1166 623.4 1165.8 625L1165 628.6H1158.6L1156 624.6Q1156.2 623.2 1157.6 623.8L1158.8 625Z" fill="#e9d3b4" stroke="#222" stroke-width="0.9" stroke-linejoin="round"/>
<g opacity="0.9"><path d="M1225.5 613.2L1232 611L1234.6 613.4L1233.4 626.4L1225 625.8Z" fill="#aeb0ae" stroke="#2a2a2a" stroke-width="1" stroke-dasharray="1.4 0.7"/><path d="M1235.5 620.8L1243.6 619.4L1244.4 632.6L1236.6 634Z" fill="#aeb0ae" stroke="#2a2a2a" stroke-width="1" stroke-dasharray="1.4 0.7"/><path d="M1229 609.5L1231.4 608.6L1232 611M1227 616V623M1229.6 615.4V623M1238.6 623V631M1241 622.6V631" stroke="#555" stroke-width="0.8" fill="none"/><path d="M1231 618.2L1237.6 622.6M1237.6 622.6L1234.2 622.4M1237.6 622.6L1236.4 619.6" stroke="#8fae8f" stroke-width="1.3" fill="none"/></g>
<path d="M1261.8 616.2H1283M1261.8 629.6H1283M1262.2 616.2V629.6" stroke="#111" stroke-width="1.3" fill="none"/>
<path d="M1264 618.6H1266.6M1264 627.4H1266.6M1265.3 618.6V627.4" stroke="#111" stroke-width="0.9" fill="none"/>
<path d="M1304.6 617.2L1314.2 626.8M1314.2 617.2L1304.6 626.8" stroke="#111" stroke-width="2.6"/>
</svg>
<div class="t" style="left:1188.5px;top:608.5px;font-size:24px;line-height:26px;height:26px;font-weight:bold;color:#000;-webkit-text-stroke:0;transform:none;font-family:'Liberation Serif','DejaVu Serif',serif">Σ</div>
<div class="t" style="left:1267.4px;top:615.5px;font-size:12px;line-height:14px;height:14px;color:#111;transform-origin:0 0;transform:scale(0.66,1)">nam</div>
<div class="t" style="left:1255.4px;top:653px;letter-spacing:-0.200px;">%_12 : PseudoVoigtA</div>
<div class="t" style="left:1143px;top:681.2px;letter-spacing:-0.333px;">area</div>
<div class="entry" style="left:1179px;top:673px;width:157px;height:32px"></div>
<div class="t" style="left:1188.4px;top:681.0px;letter-spacing:-0.039px;color:#1a1a1a">30.24285</div>
<svg class="abs" style="left:1342px;top:679px" width="16" height="18" viewBox="0 0 16 18"><defs><linearGradient id="lk" x1="0" y1="0" x2="1" y2="1"><stop offset="0" stop-color="#f0c080"/><stop offset="1" stop-color="#c88838"/></linearGradient></defs><path d="M2.2 7.6V6.4Q2.4 3.4 5.6 3.4Q8.8 3.4 9 6.4V9" stroke="#333" stroke-width="1.5" fill="none" stroke-dasharray="1.4 0.7"/><rect x="6.6" y="8.6" width="7.6" height="8" fill="url(#lk)"/><path d="M14.2 8.4H6.4V16.8H14.2" stroke="#111" stroke-width="1.5" fill="none"/><path d="M9 11H14M9 13.2H14" stroke="#f6dcae" stroke-width="0.8"/></svg>
<div class="sl" style="left:1373px;top:687px;width:121px"></div>
<div class="slf" style="left:1373px;top:687px;width:60px"></div>
<div class="knob" style="left:1424px;top:679px"></div>
<div class="t" style="left:1136.6px;top:719.7px;letter-spacing:0.061px;">center</div>
<div class="entry" style="left:1179px;top:711.5px;width:157px;height:32px"></div>
<div class="t" style="left:1188.4px;top:719.5px;letter-spacing:-0.039px;color:#1a1a1a">12.27275</div>
<svg class="abs" style="left:1342px;top:717.5px" width="16" height="18" viewBox="0 0 16 18"><defs><linearGradient id="lk" x1="0" y1="0" x2="1" y2="1"><stop offset="0" stop-color="#f0c080"/><stop offset="1" stop-color="#c88838"/></linearGradient></defs><path d="M2.2 7.6V6.4Q2.4 3.4 5.6 3.4Q8.8 3.4 9 6.4V9" stroke="#333" stroke-width="1.5" fill="none" stroke-dasharray="1.4 0.7"/><rect x="6.6" y="8.6" width="7.6" height="8" fill="url(#lk)"/><path d="M14.2 8.4H6.4V16.8H14.2" stroke="#111" stroke-width="1.5" fill="none"/><path d="M9 11H14M9 13.2H14" stroke="#f6dcae" stroke-width="0.8"/></svg>
<div class="sl" style="left:1373px;top:726px;width:121px"></div>
<div class="slf" style="left:1373px;top:726px;width:60px"></div>
<div class="knob" style="left:1424px;top:718px"></div>
<div class="t" style="left:1137px;top:758.2px;letter-spacing:0.196px;">hwhm</div>
<div class="entry" style="left:1179px;top:750px;width:157px;height:32px"></div>
<div class="t" style="left:1188.4px;top:758.0px;letter-spacing:-0.014px;color:#1a1a1a">0.1649425</div>
<svg class="abs" style="left:1342px;top:756px" width="16" height="18" viewBox="0 0 16 18"><defs><linearGradient id="lk" x1="0" y1="0" x2="1" y2="1"><stop offset="0" stop-color="#f0c080"/><stop offset="1" stop-color="#c88838"/></linearGradient></defs><path d="M2.2 7.6V6.4Q2.4 3.4 5.6 3.4Q8.8 3.4 9 6.4V9" stroke="#333" stroke-width="1.5" fill="none" stroke-dasharray="1.4 0.7"/><rect x="6.6" y="8.6" width="7.6" height="8" fill="url(#lk)"/><path d="M14.2 8.4H6.4V16.8H14.2" stroke="#111" stroke-width="1.5" fill="none"/><path d="M9 11H14M9 13.2H14" stroke="#f6dcae" stroke-width="0.8"/></svg>
<div class="sl" style="left:1373px;top:764px;width:121px"></div>
<div class="slf" style="left:1373px;top:764px;width:60px"></div>
<div class="knob" style="left:1424px;top:756px"></div>
<div class="t" style="left:1137.4px;top:796.2px;letter-spacing:-0.439px;">shape</div>
<div class="entry" style="left:1179px;top:788px;width:157px;height:32px"></div>
<div class="t" style="left:1188.4px;top:796.0px;letter-spacing:-0.127px;color:#1a1a1a">0.5</div>
<svg class="abs" style="left:1342px;top:794px" width="16" height="18" viewBox="0 0 16 18"><defs><linearGradient id="lk" x1="0" y1="0" x2="1" y2="1"><stop offset="0" stop-color="#f0c080"/><stop offset="1" stop-color="#c88838"/></linearGradient></defs><path d="M2.2 7.6V6.4Q2.4 3.4 5.6 3.4Q8.8 3.4 9 6.4V9" stroke="#333" stroke-width="1.5" fill="none" stroke-dasharray="1.4 0.7"/><rect x="6.6" y="8.6" width="7.6" height="8" fill="url(#lk)"/><path d="M14.2 8.4H6.4V16.8H14.2" stroke="#111" stroke-width="1.5" fill="none"/><path d="M9 11H14M9 13.2H14" stroke="#f6dcae" stroke-width="0.8"/></svg>
<div class="sl" style="left:1373px;top:802px;width:121px"></div>
<div class="slf" style="left:1373px;top:802px;width:60px"></div>
<div class="knob" style="left:1424px;top:794px"></div>
</div></body></html>
